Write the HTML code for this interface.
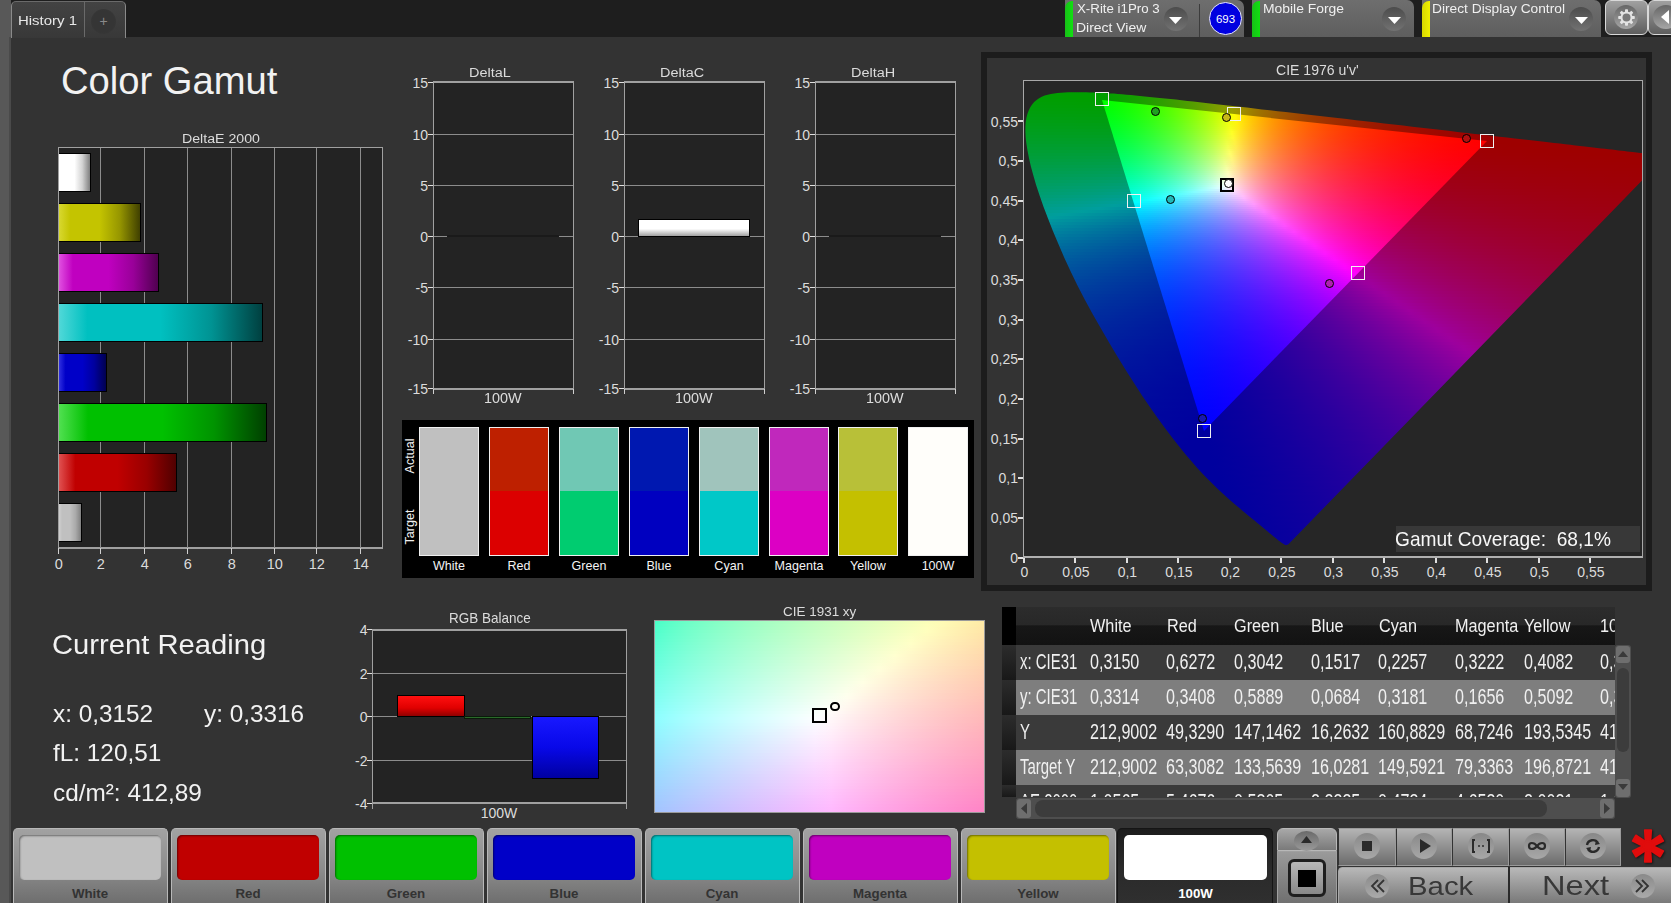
<!DOCTYPE html><html><head><meta charset="utf-8"><style>
html,body{margin:0;padding:0;}
body{width:1671px;height:903px;position:relative;overflow:hidden;background:#333333;font-family:"Liberation Sans", sans-serif;}
.t{position:absolute;white-space:nowrap;}
.b{position:absolute;box-sizing:border-box;}
</style></head><body>
<div class="b" style="left:0px;top:0px;width:1671px;height:37px;background:#1e1e1e;"></div>
<div class="b" style="left:0px;top:0px;width:11px;height:903px;background:#585858;"></div>
<div class="b" style="left:9px;top:37px;width:2px;height:866px;background:#4a4a4a;"></div>
<div class="b" style="left:11px;top:1px;width:115px;height:37px;background:linear-gradient(#434343,#383838);border-left:1px solid #8a8a8a;border-top:1px solid #6a6a6a;border-right:1px solid #8a8a8a;border-radius:5px 5px 0 0;"></div>
<div class="b" style="left:84px;top:2px;width:1px;height:35px;background:#6a6a6a;"></div>
<div class="b" style="left:91px;top:9px;width:25px;height:25px;background:radial-gradient(circle at 50% 50%,#353535 60%,#3a3a3a 100%);border-radius:50%;"></div>
<div class="t" style="left:18.0px;top:12.6px;font-size:13.6px;line-height:15.19px;color:#e8e8e8;transform:scaleX(1.1);transform-origin:left;">History 1</div>
<div class="t" style="left:103.5px;top:14.3px;font-size:14px;line-height:15.64px;color:#8a8a8a;transform:translateX(-50%);transform-origin:center;">+</div>
<div class="b" style="left:1065px;top:0px;width:179px;height:37px;background:linear-gradient(#6e6e6e,#5e5e5e);border-radius:0 0 0 0;border-top-right-radius:7px;"></div>
<div class="b" style="left:1065px;top:1px;width:8px;height:36px;background:linear-gradient(90deg,#18c018,#10e010);border-radius:7px 0 0 0;"></div>
<div class="b" style="left:1163.5px;top:6.5px;width:24px;height:24px;background:linear-gradient(#4c4c4c,#727272);border-radius:50%;"></div>
<svg class="b" style="left:1169.0px;top:16.5px;width:13px;height:7px;" viewBox="0 0 13 7"><path d="M0 0 L13 0 L6.5 7 Z" fill="#fff"/></svg>
<div class="b" style="left:1199px;top:4px;width:1px;height:33px;background:#3c3c3c;"></div>
<div class="b" style="left:1209px;top:2px;width:33px;height:33px;background:#0000e0;border:1.5px solid #e8e8ff;border-radius:50%;"></div>
<div class="t" style="left:1225.5px;top:12.9px;font-size:11.5px;line-height:12.85px;color:#ffffff;transform:translateX(-50%);transform-origin:center;">693</div>
<div class="t" style="left:1076.5px;top:2.8px;font-size:12.5px;line-height:13.96px;color:#f0f0f0;transform:scaleX(1.063);transform-origin:left;">X-Rite i1Pro 3</div>
<div class="t" style="left:1076.3px;top:21.6px;font-size:12.5px;line-height:13.96px;color:#f0f0f0;transform:scaleX(1.116);transform-origin:left;">Direct View</div>
<div class="b" style="left:1252px;top:0px;width:162px;height:37px;background:linear-gradient(#6e6e6e,#5e5e5e);border-radius:0 0 0 0;border-top-right-radius:7px;"></div>
<div class="b" style="left:1252px;top:1px;width:8px;height:36px;background:linear-gradient(90deg,#18c018,#10e010);border-radius:7px 0 0 0;"></div>
<div class="b" style="left:1382px;top:6.5px;width:24px;height:24px;background:linear-gradient(#4c4c4c,#727272);border-radius:50%;"></div>
<svg class="b" style="left:1387.5px;top:16.5px;width:13px;height:7px;" viewBox="0 0 13 7"><path d="M0 0 L13 0 L6.5 7 Z" fill="#fff"/></svg>
<div class="t" style="left:1262.5px;top:2.8px;font-size:12.5px;line-height:13.96px;color:#f0f0f0;transform:scaleX(1.11);transform-origin:left;">Mobile Forge</div>
<div class="b" style="left:1422px;top:0px;width:179px;height:37px;background:linear-gradient(#6e6e6e,#5e5e5e);border-radius:0 0 0 0;border-top-right-radius:7px;"></div>
<div class="b" style="left:1422px;top:1px;width:8px;height:36px;background:linear-gradient(90deg,#d8d800,#f0f000);border-radius:7px 0 0 0;"></div>
<div class="b" style="left:1569px;top:6.5px;width:24px;height:24px;background:linear-gradient(#4c4c4c,#727272);border-radius:50%;"></div>
<svg class="b" style="left:1574.5px;top:16.5px;width:13px;height:7px;" viewBox="0 0 13 7"><path d="M0 0 L13 0 L6.5 7 Z" fill="#fff"/></svg>
<div class="t" style="left:1432.4px;top:2.6px;font-size:12.5px;line-height:13.96px;color:#f0f0f0;transform:scaleX(1.1);transform-origin:left;">Direct Display Control</div>
<div class="b" style="left:1605px;top:0px;width:43px;height:35px;background:linear-gradient(#a0a0a0,#5e5e5e);border:1.2px solid #d8d8d8;border-radius:6px;"></div>
<div class="b" style="left:1614px;top:5px;width:24px;height:24px;background:linear-gradient(#666666,#a6a6a6);border-radius:50%;"></div>
<svg class="b" style="left:1615.5px;top:7px;width:21px;height:21px;" viewBox="-10.5 -10.5 21 21">
<g fill="#e4e4e4"><rect x="-1.5" y="-8.3" width="3" height="4" rx="0.8" transform="rotate(0)"/><rect x="-1.5" y="-8.3" width="3" height="4" rx="0.8" transform="rotate(45)"/><rect x="-1.5" y="-8.3" width="3" height="4" rx="0.8" transform="rotate(90)"/><rect x="-1.5" y="-8.3" width="3" height="4" rx="0.8" transform="rotate(135)"/><rect x="-1.5" y="-8.3" width="3" height="4" rx="0.8" transform="rotate(180)"/><rect x="-1.5" y="-8.3" width="3" height="4" rx="0.8" transform="rotate(225)"/><rect x="-1.5" y="-8.3" width="3" height="4" rx="0.8" transform="rotate(270)"/><rect x="-1.5" y="-8.3" width="3" height="4" rx="0.8" transform="rotate(315)"/>
<circle r="6"/></g><circle r="4" fill="#7a7a7a"/></svg>
<div class="b" style="left:1648px;top:0px;width:30px;height:35px;background:linear-gradient(#a0a0a0,#5e5e5e);border:1.2px solid #d8d8d8;border-radius:6px 0 0 6px;"></div>
<div class="b" style="left:1653px;top:5px;width:26px;height:24px;background:linear-gradient(#666666,#a6a6a6);border-radius:50%;"></div>
<svg class="b" style="left:1660px;top:9px;width:11px;height:16px;" viewBox="0 0 11 16"><path d="M9 1 L1 8 L9 15 Z" fill="#fff"/></svg>
<div class="t" style="left:60.9px;top:59.6px;font-size:38.2px;line-height:42.67px;color:#f2f2f2;">Color Gamut</div>
<div class="t" style="left:181.5px;top:130.5px;font-size:13.7px;line-height:15.30px;color:#dcdcdc;transform:scaleX(1.035);transform-origin:left;">DeltaE 2000</div>
<div class="b" style="left:58px;top:147px;width:325px;height:402px;background:#232323;border:1px solid #a0a0a0;border-bottom:2px solid #a0a0a0;"></div>
<div class="b" style="left:100px;top:148px;width:1px;height:400px;background:#8c8c8c;"></div>
<div class="b" style="left:144px;top:148px;width:1px;height:400px;background:#8c8c8c;"></div>
<div class="b" style="left:187px;top:148px;width:1px;height:400px;background:#8c8c8c;"></div>
<div class="b" style="left:231px;top:148px;width:1px;height:400px;background:#8c8c8c;"></div>
<div class="b" style="left:274px;top:148px;width:1px;height:400px;background:#8c8c8c;"></div>
<div class="b" style="left:316px;top:148px;width:1px;height:400px;background:#8c8c8c;"></div>
<div class="b" style="left:360px;top:148px;width:1px;height:400px;background:#8c8c8c;"></div>
<div class="b" style="left:58px;top:548px;width:1px;height:6px;background:#d0d0d0;"></div>
<div class="t" style="left:58.8px;top:555.9px;font-size:14.5px;line-height:16.20px;color:#dcdcdc;transform:translateX(-50%);transform-origin:center;">0</div>
<div class="b" style="left:100px;top:548px;width:1px;height:6px;background:#d0d0d0;"></div>
<div class="t" style="left:100.8px;top:555.9px;font-size:14.5px;line-height:16.20px;color:#dcdcdc;transform:translateX(-50%);transform-origin:center;">2</div>
<div class="b" style="left:144px;top:548px;width:1px;height:6px;background:#d0d0d0;"></div>
<div class="t" style="left:144.8px;top:555.9px;font-size:14.5px;line-height:16.20px;color:#dcdcdc;transform:translateX(-50%);transform-origin:center;">4</div>
<div class="b" style="left:187px;top:548px;width:1px;height:6px;background:#d0d0d0;"></div>
<div class="t" style="left:187.8px;top:555.9px;font-size:14.5px;line-height:16.20px;color:#dcdcdc;transform:translateX(-50%);transform-origin:center;">6</div>
<div class="b" style="left:231px;top:548px;width:1px;height:6px;background:#d0d0d0;"></div>
<div class="t" style="left:231.8px;top:555.9px;font-size:14.5px;line-height:16.20px;color:#dcdcdc;transform:translateX(-50%);transform-origin:center;">8</div>
<div class="b" style="left:274px;top:548px;width:1px;height:6px;background:#d0d0d0;"></div>
<div class="t" style="left:274.8px;top:555.9px;font-size:14.5px;line-height:16.20px;color:#dcdcdc;transform:translateX(-50%);transform-origin:center;">10</div>
<div class="b" style="left:316px;top:548px;width:1px;height:6px;background:#d0d0d0;"></div>
<div class="t" style="left:316.8px;top:555.9px;font-size:14.5px;line-height:16.20px;color:#dcdcdc;transform:translateX(-50%);transform-origin:center;">12</div>
<div class="b" style="left:360px;top:548px;width:1px;height:6px;background:#d0d0d0;"></div>
<div class="t" style="left:360.8px;top:555.9px;font-size:14.5px;line-height:16.20px;color:#dcdcdc;transform:translateX(-50%);transform-origin:center;">14</div>
<div class="b" style="left:59px;top:153px;width:32px;height:39px;background:linear-gradient(90deg,#ffffff 0%,#ffffff 14%,#ffffff 50%,#d3d3d3 75%,#808080 100%);border:1px solid #000;border-left:none;"></div>
<div class="b" style="left:59px;top:203px;width:82px;height:39px;background:linear-gradient(90deg,#d8d830 0%,#c4c400 14%,#c4c400 50%,#969600 75%,#404000 100%);border:1px solid #000;border-left:none;"></div>
<div class="b" style="left:59px;top:253px;width:100px;height:39px;background:linear-gradient(90deg,#e050e0 0%,#c000c0 14%,#c000c0 50%,#990099 75%,#500050 100%);border:1px solid #000;border-left:none;"></div>
<div class="b" style="left:59px;top:303px;width:204px;height:39px;background:linear-gradient(90deg,#50d8d8 0%,#00c0c0 14%,#00c0c0 50%,#009393 75%,#004040 100%);border:1px solid #000;border-left:none;"></div>
<div class="b" style="left:59px;top:353px;width:48px;height:39px;background:linear-gradient(90deg,#3030e0 0%,#0000c8 14%,#0000c8 50%,#00009e 75%,#000050 100%);border:1px solid #000;border-left:none;"></div>
<div class="b" style="left:59px;top:403px;width:208px;height:39px;background:linear-gradient(90deg,#50e050 0%,#00c000 14%,#00c000 50%,#009300 75%,#004000 100%);border:1px solid #000;border-left:none;"></div>
<div class="b" style="left:59px;top:453px;width:118px;height:39px;background:linear-gradient(90deg,#e05050 0%,#c00000 14%,#c00000 50%,#990000 75%,#500000 100%);border:1px solid #000;border-left:none;"></div>
<div class="b" style="left:59px;top:503px;width:23px;height:39px;background:linear-gradient(90deg,#d0d0d0 0%,#c0c0c0 14%,#c0c0c0 50%,#aaaaaa 75%,#808080 100%);border:1px solid #000;border-left:none;"></div>
<div class="t" style="left:469.2px;top:64.7px;font-size:13.7px;line-height:15.30px;color:#dcdcdc;transform:scaleX(1.055);transform-origin:left;">DeltaL</div>
<div class="b" style="left:433px;top:81px;width:141px;height:309px;background:#232323;border:1px solid #a0a0a0;border-top:2px solid #a0a0a0;border-bottom:2px solid #a0a0a0;"></div>
<div class="b" style="left:428px;top:82px;width:5px;height:1px;background:#e0e0e0;"></div>
<div class="t" style="left:428.0px;top:75.6px;font-size:14px;line-height:15.64px;color:#dcdcdc;transform:translateX(-100%);transform-origin:right;">15</div>
<div class="b" style="left:434px;top:134px;width:139px;height:1px;background:#8c8c8c;"></div>
<div class="b" style="left:428px;top:134px;width:5px;height:1px;background:#e0e0e0;"></div>
<div class="t" style="left:428.0px;top:127.6px;font-size:14px;line-height:15.64px;color:#dcdcdc;transform:translateX(-100%);transform-origin:right;">10</div>
<div class="b" style="left:434px;top:185px;width:139px;height:1px;background:#8c8c8c;"></div>
<div class="b" style="left:428px;top:185px;width:5px;height:1px;background:#e0e0e0;"></div>
<div class="t" style="left:428.0px;top:178.6px;font-size:14px;line-height:15.64px;color:#dcdcdc;transform:translateX(-100%);transform-origin:right;">5</div>
<div class="b" style="left:434px;top:236px;width:139px;height:1px;background:#8c8c8c;"></div>
<div class="b" style="left:428px;top:236px;width:5px;height:1px;background:#e0e0e0;"></div>
<div class="t" style="left:428.0px;top:229.6px;font-size:14px;line-height:15.64px;color:#dcdcdc;transform:translateX(-100%);transform-origin:right;">0</div>
<div class="b" style="left:434px;top:287px;width:139px;height:1px;background:#8c8c8c;"></div>
<div class="b" style="left:428px;top:287px;width:5px;height:1px;background:#e0e0e0;"></div>
<div class="t" style="left:428.0px;top:280.6px;font-size:14px;line-height:15.64px;color:#dcdcdc;transform:translateX(-100%);transform-origin:right;">-5</div>
<div class="b" style="left:434px;top:339px;width:139px;height:1px;background:#8c8c8c;"></div>
<div class="b" style="left:428px;top:339px;width:5px;height:1px;background:#e0e0e0;"></div>
<div class="t" style="left:428.0px;top:332.6px;font-size:14px;line-height:15.64px;color:#dcdcdc;transform:translateX(-100%);transform-origin:right;">-10</div>
<div class="b" style="left:428px;top:388px;width:5px;height:1px;background:#e0e0e0;"></div>
<div class="t" style="left:428.0px;top:381.6px;font-size:14px;line-height:15.64px;color:#dcdcdc;transform:translateX(-100%);transform-origin:right;">-15</div>
<div class="b" style="left:433px;top:389px;width:1px;height:5px;background:#d0d0d0;"></div>
<div class="b" style="left:573px;top:389px;width:1px;height:5px;background:#d0d0d0;"></div>
<div class="t" style="left:484.3px;top:391.4px;font-size:14.2px;line-height:15.86px;color:#dcdcdc;transform:scaleX(1.016);transform-origin:left;">100W</div>
<div class="b" style="left:447px;top:235px;width:112px;height:2px;background:#1a1a1a;"></div>
<div class="t" style="left:660.2px;top:64.7px;font-size:13.7px;line-height:15.30px;color:#dcdcdc;transform:scaleX(1.055);transform-origin:left;">DeltaC</div>
<div class="b" style="left:624px;top:81px;width:141px;height:309px;background:#232323;border:1px solid #a0a0a0;border-top:2px solid #a0a0a0;border-bottom:2px solid #a0a0a0;"></div>
<div class="b" style="left:619px;top:82px;width:5px;height:1px;background:#e0e0e0;"></div>
<div class="t" style="left:619.0px;top:75.6px;font-size:14px;line-height:15.64px;color:#dcdcdc;transform:translateX(-100%);transform-origin:right;">15</div>
<div class="b" style="left:625px;top:134px;width:139px;height:1px;background:#8c8c8c;"></div>
<div class="b" style="left:619px;top:134px;width:5px;height:1px;background:#e0e0e0;"></div>
<div class="t" style="left:619.0px;top:127.6px;font-size:14px;line-height:15.64px;color:#dcdcdc;transform:translateX(-100%);transform-origin:right;">10</div>
<div class="b" style="left:625px;top:185px;width:139px;height:1px;background:#8c8c8c;"></div>
<div class="b" style="left:619px;top:185px;width:5px;height:1px;background:#e0e0e0;"></div>
<div class="t" style="left:619.0px;top:178.6px;font-size:14px;line-height:15.64px;color:#dcdcdc;transform:translateX(-100%);transform-origin:right;">5</div>
<div class="b" style="left:625px;top:236px;width:139px;height:1px;background:#8c8c8c;"></div>
<div class="b" style="left:619px;top:236px;width:5px;height:1px;background:#e0e0e0;"></div>
<div class="t" style="left:619.0px;top:229.6px;font-size:14px;line-height:15.64px;color:#dcdcdc;transform:translateX(-100%);transform-origin:right;">0</div>
<div class="b" style="left:625px;top:287px;width:139px;height:1px;background:#8c8c8c;"></div>
<div class="b" style="left:619px;top:287px;width:5px;height:1px;background:#e0e0e0;"></div>
<div class="t" style="left:619.0px;top:280.6px;font-size:14px;line-height:15.64px;color:#dcdcdc;transform:translateX(-100%);transform-origin:right;">-5</div>
<div class="b" style="left:625px;top:339px;width:139px;height:1px;background:#8c8c8c;"></div>
<div class="b" style="left:619px;top:339px;width:5px;height:1px;background:#e0e0e0;"></div>
<div class="t" style="left:619.0px;top:332.6px;font-size:14px;line-height:15.64px;color:#dcdcdc;transform:translateX(-100%);transform-origin:right;">-10</div>
<div class="b" style="left:619px;top:388px;width:5px;height:1px;background:#e0e0e0;"></div>
<div class="t" style="left:619.0px;top:381.6px;font-size:14px;line-height:15.64px;color:#dcdcdc;transform:translateX(-100%);transform-origin:right;">-15</div>
<div class="b" style="left:624px;top:389px;width:1px;height:5px;background:#d0d0d0;"></div>
<div class="b" style="left:764px;top:389px;width:1px;height:5px;background:#d0d0d0;"></div>
<div class="t" style="left:675.3px;top:391.4px;font-size:14.2px;line-height:15.86px;color:#dcdcdc;transform:scaleX(1.016);transform-origin:left;">100W</div>
<div class="b" style="left:638px;top:219px;width:112px;height:18px;background:linear-gradient(#ffffff 0%,#ffffff 55%,#a0a0a0 100%);border:1.5px solid #000;"></div>
<div class="t" style="left:851.2px;top:64.7px;font-size:13.7px;line-height:15.30px;color:#dcdcdc;transform:scaleX(1.055);transform-origin:left;">DeltaH</div>
<div class="b" style="left:815px;top:81px;width:141px;height:309px;background:#232323;border:1px solid #a0a0a0;border-top:2px solid #a0a0a0;border-bottom:2px solid #a0a0a0;"></div>
<div class="b" style="left:810px;top:82px;width:5px;height:1px;background:#e0e0e0;"></div>
<div class="t" style="left:810.0px;top:75.6px;font-size:14px;line-height:15.64px;color:#dcdcdc;transform:translateX(-100%);transform-origin:right;">15</div>
<div class="b" style="left:816px;top:134px;width:139px;height:1px;background:#8c8c8c;"></div>
<div class="b" style="left:810px;top:134px;width:5px;height:1px;background:#e0e0e0;"></div>
<div class="t" style="left:810.0px;top:127.6px;font-size:14px;line-height:15.64px;color:#dcdcdc;transform:translateX(-100%);transform-origin:right;">10</div>
<div class="b" style="left:816px;top:185px;width:139px;height:1px;background:#8c8c8c;"></div>
<div class="b" style="left:810px;top:185px;width:5px;height:1px;background:#e0e0e0;"></div>
<div class="t" style="left:810.0px;top:178.6px;font-size:14px;line-height:15.64px;color:#dcdcdc;transform:translateX(-100%);transform-origin:right;">5</div>
<div class="b" style="left:816px;top:236px;width:139px;height:1px;background:#8c8c8c;"></div>
<div class="b" style="left:810px;top:236px;width:5px;height:1px;background:#e0e0e0;"></div>
<div class="t" style="left:810.0px;top:229.6px;font-size:14px;line-height:15.64px;color:#dcdcdc;transform:translateX(-100%);transform-origin:right;">0</div>
<div class="b" style="left:816px;top:287px;width:139px;height:1px;background:#8c8c8c;"></div>
<div class="b" style="left:810px;top:287px;width:5px;height:1px;background:#e0e0e0;"></div>
<div class="t" style="left:810.0px;top:280.6px;font-size:14px;line-height:15.64px;color:#dcdcdc;transform:translateX(-100%);transform-origin:right;">-5</div>
<div class="b" style="left:816px;top:339px;width:139px;height:1px;background:#8c8c8c;"></div>
<div class="b" style="left:810px;top:339px;width:5px;height:1px;background:#e0e0e0;"></div>
<div class="t" style="left:810.0px;top:332.6px;font-size:14px;line-height:15.64px;color:#dcdcdc;transform:translateX(-100%);transform-origin:right;">-10</div>
<div class="b" style="left:810px;top:388px;width:5px;height:1px;background:#e0e0e0;"></div>
<div class="t" style="left:810.0px;top:381.6px;font-size:14px;line-height:15.64px;color:#dcdcdc;transform:translateX(-100%);transform-origin:right;">-15</div>
<div class="b" style="left:815px;top:389px;width:1px;height:5px;background:#d0d0d0;"></div>
<div class="b" style="left:955px;top:389px;width:1px;height:5px;background:#d0d0d0;"></div>
<div class="t" style="left:866.3px;top:391.4px;font-size:14.2px;line-height:15.86px;color:#dcdcdc;transform:scaleX(1.016);transform-origin:left;">100W</div>
<div class="b" style="left:829px;top:235px;width:112px;height:2px;background:#1a1a1a;"></div>
<div class="b" style="left:402px;top:420px;width:572px;height:158px;background:#000;"></div>
<div class="b" style="left:419px;top:427px;width:60px;height:129px;background:linear-gradient(#c0c0c0 0,#c0c0c0 50%,#c0c0c0 50%,#c0c0c0 100%);border:1px solid #f0f0f0;"></div>
<div class="t" style="left:449.0px;top:559.5px;font-size:11.9px;line-height:13.29px;color:#f4f4f4;transform:translateX(-50%) scaleX(1.054);transform-origin:center;">White</div>
<div class="b" style="left:489px;top:427px;width:60px;height:129px;background:linear-gradient(#be2000 0,#be2000 50%,#dc0000 50%,#dc0000 100%);border:1px solid #f0f0f0;"></div>
<div class="t" style="left:519.0px;top:559.5px;font-size:11.9px;line-height:13.29px;color:#f4f4f4;transform:translateX(-50%) scaleX(1.054);transform-origin:center;">Red</div>
<div class="b" style="left:559px;top:427px;width:60px;height:129px;background:linear-gradient(#70c8b4 0,#70c8b4 50%,#00cc70 50%,#00cc70 100%);border:1px solid #f0f0f0;"></div>
<div class="t" style="left:589.0px;top:559.5px;font-size:11.9px;line-height:13.29px;color:#f4f4f4;transform:translateX(-50%) scaleX(1.054);transform-origin:center;">Green</div>
<div class="b" style="left:629px;top:427px;width:60px;height:129px;background:linear-gradient(#0018b0 0,#0018b0 50%,#0000c0 50%,#0000c0 100%);border:1px solid #f0f0f0;"></div>
<div class="t" style="left:659.0px;top:559.5px;font-size:11.9px;line-height:13.29px;color:#f4f4f4;transform:translateX(-50%) scaleX(1.054);transform-origin:center;">Blue</div>
<div class="b" style="left:699px;top:427px;width:60px;height:129px;background:linear-gradient(#a0c4bc 0,#a0c4bc 50%,#00c8c8 50%,#00c8c8 100%);border:1px solid #f0f0f0;"></div>
<div class="t" style="left:729.0px;top:559.5px;font-size:11.9px;line-height:13.29px;color:#f4f4f4;transform:translateX(-50%) scaleX(1.054);transform-origin:center;">Cyan</div>
<div class="b" style="left:769px;top:427px;width:60px;height:129px;background:linear-gradient(#c028bc 0,#c028bc 50%,#dc00c4 50%,#dc00c4 100%);border:1px solid #f0f0f0;"></div>
<div class="t" style="left:799.0px;top:559.5px;font-size:11.9px;line-height:13.29px;color:#f4f4f4;transform:translateX(-50%) scaleX(1.054);transform-origin:center;">Magenta</div>
<div class="b" style="left:838px;top:427px;width:60px;height:129px;background:linear-gradient(#b8c038 0,#b8c038 50%,#c4c000 50%,#c4c000 100%);border:1px solid #f0f0f0;"></div>
<div class="t" style="left:868.0px;top:559.5px;font-size:11.9px;line-height:13.29px;color:#f4f4f4;transform:translateX(-50%) scaleX(1.054);transform-origin:center;">Yellow</div>
<div class="b" style="left:908px;top:427px;width:60px;height:129px;background:linear-gradient(#fffefa 0,#fffefa 50%,#fffefa 50%,#fffefa 100%);border:1px solid #f0f0f0;"></div>
<div class="t" style="left:938.0px;top:559.5px;font-size:11.9px;line-height:13.29px;color:#f4f4f4;transform:translateX(-50%) scaleX(1.054);transform-origin:center;">100W</div>
<div class="t" style="left:410px;top:455.5px;font-size:12.6px;line-height:12px;color:#f0f0f0;transform:translate(-50%,-50%) rotate(-90deg);">Actual</div>
<div class="t" style="left:410px;top:527.2px;font-size:12.6px;line-height:12px;color:#f0f0f0;transform:translate(-50%,-50%) rotate(-90deg);">Target</div>
<div class="b" style="left:981px;top:52px;width:671px;height:539px;background:#333333;border:6px solid #1c1c1c;"></div>
<div class="t" style="left:1275.5px;top:63.0px;font-size:14.2px;line-height:15.86px;color:#dcdcdc;transform:scaleX(0.99);transform-origin:left;">CIE 1976 u'v'</div>
<div class="b" style="left:1023px;top:80px;width:620px;height:478px;background:#262626;border:1px solid #a8a8a8;border-bottom:2px solid #b0b0b0;"></div>
<div class="b" style="left:1018px;top:556.5px;width:5px;height:2px;background:#e0e0e0;"></div>
<div class="t" style="left:1018.0px;top:550.6px;font-size:14px;line-height:15.64px;color:#dcdcdc;transform:translateX(-100%);transform-origin:right;">0</div>
<div class="b" style="left:1022.9px;top:558px;width:2px;height:5px;background:#e0e0e0;"></div>
<div class="t" style="left:1024.4px;top:565.3px;font-size:14px;line-height:15.64px;color:#dcdcdc;transform:translateX(-50%);transform-origin:center;">0</div>
<div class="b" style="left:1018px;top:516.85px;width:5px;height:2px;background:#e0e0e0;"></div>
<div class="t" style="left:1018.0px;top:511.0px;font-size:14px;line-height:15.64px;color:#dcdcdc;transform:translateX(-100%);transform-origin:right;">0,05</div>
<div class="b" style="left:1074.4px;top:558px;width:2px;height:5px;background:#e0e0e0;"></div>
<div class="t" style="left:1075.9px;top:565.3px;font-size:14px;line-height:15.64px;color:#dcdcdc;transform:translateX(-50%);transform-origin:center;">0,05</div>
<div class="b" style="left:1018px;top:477.2px;width:5px;height:2px;background:#e0e0e0;"></div>
<div class="t" style="left:1018.0px;top:471.3px;font-size:14px;line-height:15.64px;color:#dcdcdc;transform:translateX(-100%);transform-origin:right;">0,1</div>
<div class="b" style="left:1125.9px;top:558px;width:2px;height:5px;background:#e0e0e0;"></div>
<div class="t" style="left:1127.4px;top:565.3px;font-size:14px;line-height:15.64px;color:#dcdcdc;transform:translateX(-50%);transform-origin:center;">0,1</div>
<div class="b" style="left:1018px;top:437.54999999999995px;width:5px;height:2px;background:#e0e0e0;"></div>
<div class="t" style="left:1018.0px;top:431.7px;font-size:14px;line-height:15.64px;color:#dcdcdc;transform:translateX(-100%);transform-origin:right;">0,15</div>
<div class="b" style="left:1177.4px;top:558px;width:2px;height:5px;background:#e0e0e0;"></div>
<div class="t" style="left:1178.9px;top:565.3px;font-size:14px;line-height:15.64px;color:#dcdcdc;transform:translateX(-50%);transform-origin:center;">0,15</div>
<div class="b" style="left:1018px;top:397.9px;width:5px;height:2px;background:#e0e0e0;"></div>
<div class="t" style="left:1018.0px;top:392.0px;font-size:14px;line-height:15.64px;color:#dcdcdc;transform:translateX(-100%);transform-origin:right;">0,2</div>
<div class="b" style="left:1228.9px;top:558px;width:2px;height:5px;background:#e0e0e0;"></div>
<div class="t" style="left:1230.4px;top:565.3px;font-size:14px;line-height:15.64px;color:#dcdcdc;transform:translateX(-50%);transform-origin:center;">0,2</div>
<div class="b" style="left:1018px;top:358.25px;width:5px;height:2px;background:#e0e0e0;"></div>
<div class="t" style="left:1018.0px;top:352.4px;font-size:14px;line-height:15.64px;color:#dcdcdc;transform:translateX(-100%);transform-origin:right;">0,25</div>
<div class="b" style="left:1280.4px;top:558px;width:2px;height:5px;background:#e0e0e0;"></div>
<div class="t" style="left:1281.9px;top:565.3px;font-size:14px;line-height:15.64px;color:#dcdcdc;transform:translateX(-50%);transform-origin:center;">0,25</div>
<div class="b" style="left:1018px;top:318.59999999999997px;width:5px;height:2px;background:#e0e0e0;"></div>
<div class="t" style="left:1018.0px;top:312.7px;font-size:14px;line-height:15.64px;color:#dcdcdc;transform:translateX(-100%);transform-origin:right;">0,3</div>
<div class="b" style="left:1331.9px;top:558px;width:2px;height:5px;background:#e0e0e0;"></div>
<div class="t" style="left:1333.4px;top:565.3px;font-size:14px;line-height:15.64px;color:#dcdcdc;transform:translateX(-50%);transform-origin:center;">0,3</div>
<div class="b" style="left:1018px;top:278.95px;width:5px;height:2px;background:#e0e0e0;"></div>
<div class="t" style="left:1018.0px;top:273.1px;font-size:14px;line-height:15.64px;color:#dcdcdc;transform:translateX(-100%);transform-origin:right;">0,35</div>
<div class="b" style="left:1383.4px;top:558px;width:2px;height:5px;background:#e0e0e0;"></div>
<div class="t" style="left:1384.9px;top:565.3px;font-size:14px;line-height:15.64px;color:#dcdcdc;transform:translateX(-50%);transform-origin:center;">0,35</div>
<div class="b" style="left:1018px;top:239.29999999999995px;width:5px;height:2px;background:#e0e0e0;"></div>
<div class="t" style="left:1018.0px;top:233.4px;font-size:14px;line-height:15.64px;color:#dcdcdc;transform:translateX(-100%);transform-origin:right;">0,4</div>
<div class="b" style="left:1434.9px;top:558px;width:2px;height:5px;background:#e0e0e0;"></div>
<div class="t" style="left:1436.4px;top:565.3px;font-size:14px;line-height:15.64px;color:#dcdcdc;transform:translateX(-50%);transform-origin:center;">0,4</div>
<div class="b" style="left:1018px;top:199.64999999999998px;width:5px;height:2px;background:#e0e0e0;"></div>
<div class="t" style="left:1018.0px;top:193.8px;font-size:14px;line-height:15.64px;color:#dcdcdc;transform:translateX(-100%);transform-origin:right;">0,45</div>
<div class="b" style="left:1486.4px;top:558px;width:2px;height:5px;background:#e0e0e0;"></div>
<div class="t" style="left:1487.9px;top:565.3px;font-size:14px;line-height:15.64px;color:#dcdcdc;transform:translateX(-50%);transform-origin:center;">0,45</div>
<div class="b" style="left:1018px;top:160.0px;width:5px;height:2px;background:#e0e0e0;"></div>
<div class="t" style="left:1018.0px;top:154.1px;font-size:14px;line-height:15.64px;color:#dcdcdc;transform:translateX(-100%);transform-origin:right;">0,5</div>
<div class="b" style="left:1537.9px;top:558px;width:2px;height:5px;background:#e0e0e0;"></div>
<div class="t" style="left:1539.4px;top:565.3px;font-size:14px;line-height:15.64px;color:#dcdcdc;transform:translateX(-50%);transform-origin:center;">0,5</div>
<div class="b" style="left:1018px;top:120.34999999999997px;width:5px;height:2px;background:#e0e0e0;"></div>
<div class="t" style="left:1018.0px;top:114.5px;font-size:14px;line-height:15.64px;color:#dcdcdc;transform:translateX(-100%);transform-origin:right;">0,55</div>
<div class="b" style="left:1589.4px;top:558px;width:2px;height:5px;background:#e0e0e0;"></div>
<div class="t" style="left:1590.9px;top:565.3px;font-size:14px;line-height:15.64px;color:#dcdcdc;transform:translateX(-50%);transform-origin:center;">0,55</div>
<div class="b" style="left:1024px;top:81px;width:618px;height:476px;overflow:hidden;">
<div class="b" style="left:0;top:0;width:618px;height:476px;clip-path:polygon(264.4px 463.3px,264.1px 463.4px,263.7px 463.6px,263.2px 463.8px,262.8px 463.9px,262.4px 463.9px,262.0px 464.0px,261.6px 463.9px,261.2px 463.9px,260.9px 463.8px,260.5px 463.6px,260.1px 463.4px,259.7px 463.1px,259.1px 462.8px,258.5px 462.3px,257.8px 461.9px,257.0px 461.3px,256.2px 460.7px,255.4px 460.1px,254.4px 459.4px,253.4px 458.6px,252.2px 457.6px,251.0px 456.6px,249.6px 455.5px,248.2px 454.3px,246.7px 453.1px,245.1px 451.7px,243.4px 450.3px,241.6px 448.7px,239.7px 447.2px,237.7px 445.5px,235.6px 443.8px,233.3px 441.9px,230.8px 439.8px,228.2px 437.7px,225.4px 435.4px,222.4px 432.9px,219.4px 430.4px,216.2px 427.8px,212.9px 425.0px,209.3px 422.0px,205.6px 418.7px,201.7px 415.2px,197.6px 411.5px,193.3px 407.4px,188.8px 403.1px,184.2px 398.6px,179.3px 393.6px,173.9px 387.7px,168.1px 381.0px,161.8px 373.7px,155.2px 365.6px,148.3px 356.8px,141.1px 347.2px,133.6px 337.0px,125.9px 326.0px,118.0px 314.4px,110.0px 302.1px,101.7px 289.0px,93.4px 275.5px,85.2px 261.7px,77.1px 247.7px,68.9px 233.4px,61.0px 218.9px,53.6px 204.7px,46.8px 190.7px,40.3px 176.7px,34.4px 163.1px,28.9px 150.0px,24.0px 137.6px,19.5px 125.7px,15.6px 114.4px,12.1px 103.9px,9.3px 94.3px,6.9px 85.4px,5.0px 77.2px,3.5px 69.6px,2.4px 62.8px,1.7px 56.6px,1.4px 51.0px,1.4px 45.8px,1.7px 41.0px,2.4px 36.7px,3.4px 32.9px,4.7px 29.4px,6.3px 26.2px,8.1px 23.5px,10.2px 21.1px,12.6px 19.0px,15.1px 17.2px,17.8px 15.8px,20.7px 14.6px,23.7px 13.7px,26.9px 12.9px,30.1px 12.4px,33.5px 12.0px,37.0px 11.7px,40.5px 11.4px,44.1px 11.3px,47.8px 11.2px,51.5px 11.2px,55.1px 11.2px,58.8px 11.2px,62.4px 11.3px,66.2px 11.4px,69.9px 11.5px,73.7px 11.7px,77.6px 11.9px,81.5px 12.1px,85.5px 12.4px,89.6px 12.6px,93.8px 13.0px,98.0px 13.3px,102.4px 13.7px,106.8px 14.1px,111.3px 14.5px,116.0px 14.9px,120.7px 15.4px,125.6px 15.9px,130.6px 16.4px,135.7px 16.9px,141.0px 17.5px,146.4px 18.0px,151.9px 18.6px,157.6px 19.3px,163.4px 19.9px,169.4px 20.6px,175.5px 21.3px,181.8px 22.0px,188.2px 22.7px,194.9px 23.4px,201.6px 24.2px,208.6px 25.0px,215.7px 25.8px,223.0px 26.6px,230.4px 27.5px,238.0px 28.4px,245.8px 29.3px,253.7px 30.2px,261.8px 31.1px,270.1px 32.1px,278.5px 33.0px,287.1px 34.0px,295.9px 35.0px,304.7px 36.1px,313.7px 37.1px,322.9px 38.1px,332.1px 39.2px,341.4px 40.3px,350.7px 41.3px,360.2px 42.4px,369.7px 43.5px,379.0px 44.6px,388.2px 45.7px,397.4px 46.7px,406.5px 47.8px,415.5px 48.8px,424.5px 49.8px,433.5px 50.9px,442.4px 51.9px,451.0px 52.9px,459.3px 53.8px,467.5px 54.8px,475.4px 55.7px,483.1px 56.6px,490.6px 57.4px,497.9px 58.3px,504.8px 59.1px,511.6px 59.8px,518.0px 60.6px,524.2px 61.3px,530.1px 62.0px,535.8px 62.6px,541.2px 63.3px,546.3px 63.8px,551.3px 64.4px,556.0px 65.0px,560.6px 65.5px,564.9px 66.0px,569.1px 66.5px,573.1px 66.9px,577.0px 67.4px,580.8px 67.8px,584.4px 68.2px,587.9px 68.6px,591.3px 69.0px,594.5px 69.4px,597.5px 69.7px,600.4px 70.1px,603.2px 70.4px,605.8px 70.7px,608.2px 71.0px,610.6px 71.2px,612.6px 71.5px,614.4px 71.7px,616.3px 71.9px,618.4px 72.1px,621.0px 72.4px,623.9px 72.8px,626.7px 73.1px,629.1px 73.4px,630.9px 73.6px,632.3px 73.7px,633.4px 73.9px,634.5px 74.0px,635.6px 74.1px,636.6px 74.2px,637.5px 74.3px,638.4px 74.4px,639.4px 74.6px,640.4px 74.7px,641.4px 74.8px,642.0px 74.9px);">
<div class="b" style="left:0;top:9px;width:618px;height:3px;background:linear-gradient(90deg,#009e00 25px,#009e00 33px,#009e00 41px,#009e00 49px,#009e00 57px,#009e00 65px,#009e00 73px,#029e00 81px,#079e00 89px);"></div>
<div class="b" style="left:0;top:12px;width:618px;height:3px;background:linear-gradient(90deg,#009e01 12px,#009e00 20px,#009e00 28px,#009e00 36px,#009e00 44px,#009e00 52px,#009e00 60px,#009e00 68px,#009e00 76px,#049e00 84px,#089e00 92px,#0e9e00 100px,#149e00 108px,#1a9e00 116px,#219e00 124px);"></div>
<div class="b" style="left:0;top:15px;width:618px;height:3px;background:linear-gradient(90deg,#009e02 7px,#009e02 15px,#009e01 23px,#009e01 31px,#009e01 39px,#009e00 47px,#009e00 55px,#009e00 63px,#009e00 71px,#019e00 79px,#059e00 87px,#0a9e00 95px,#0f9e00 103px,#159e00 111px,#1c9e00 119px,#249e00 127px,#2c9e00 135px,#349e00 143px,#3e9e00 151px);"></div>
<div class="b" style="left:0;top:18px;width:618px;height:3px;background:linear-gradient(90deg,#009e04 3px,#009e04 11px,#009e03 19px,#009e03 27px,#009e03 35px,#009e02 43px,#009e02 51px,#009e01 59px,#009e01 67px,#009e00 75px,#029e00 83px,#079e00 91px,#0c9e00 99px,#129e00 107px,#189e00 115px,#1f9e00 123px,#279e00 131px,#2f9e00 139px,#399e00 147px,#429e00 155px,#4d9e00 163px,#589e00 171px,#649e00 179px);"></div>
<div class="b" style="left:0;top:21px;width:618px;height:3px;background:linear-gradient(90deg,#009e06 0px,#009e06 8px,#009e06 16px,#009e05 24px,#009e05 32px,#009e04 40px,#009e04 48px,#009e03 56px,#009e03 64px,#009e02 72px,#009e02 80px,#049e01 88px,#099e01 96px,#0f9e00 104px,#159e00 112px,#1c9e00 120px,#249e00 128px,#2c9e00 136px,#359e00 144px,#3e9e00 152px,#489e00 160px,#539e00 168px,#5f9e00 176px,#6c9e00 184px,#799e00 192px,#889e00 200px,#989e00 208px);"></div>
<div class="b" style="left:0;top:24px;width:618px;height:3px;background:linear-gradient(90deg,#009e09 0px,#009e08 8px,#009e08 16px,#009e07 24px,#009e07 32px,#009e06 40px,#009e06 48px,#009e05 56px,#009e05 64px,#009e04 72px,#009e04 80px,#049e03 88px,#099e03 96px,#0e9e02 104px,#159e02 112px,#1c9e01 120px,#239e01 128px,#2b9e00 136px,#349e00 144px,#3e9e00 152px,#489e00 160px,#539e00 168px,#5f9e00 176px,#6c9e00 184px,#7a9e00 192px,#889e00 200px,#989e00 208px,#9e9400 216px,#9e8500 224px,#9e7900 232px);"></div>
<div class="b" style="left:0;top:27px;width:618px;height:3px;background:linear-gradient(90deg,#009e0b 0px,#009e0a 8px,#009e0a 16px,#009e09 24px,#009e09 32px,#009e09 40px,#009e08 48px,#009e08 56px,#009e07 64px,#009e07 72px,#009e06 80px,#039e06 88px,#089e05 96px,#0e9e04 104px,#149e04 112px,#1b9e03 120px,#239e03 128px,#2b9e02 136px,#349e01 144px,#3e9e01 152px,#489e00 160px,#539e00 168px,#5f9e00 176px,#6c9e00 184px,#7a9e00 192px,#899e00 200px,#999e00 208px,#9e9300 216px,#9e8500 224px,#9e7800 232px,#9e6c00 240px,#9e6200 248px,#9e5900 256px);"></div>
<div class="b" style="left:0;top:30px;width:618px;height:3px;background:linear-gradient(90deg,#009e0d 0px,#009e0d 8px,#009e0c 16px,#009e0c 24px,#009e0b 32px,#009e0b 40px,#009e0b 48px,#009e0a 56px,#009e0a 64px,#009e09 72px,#009e09 80px,#039e08 88px,#089e08 96px,#0d9e07 104px,#149e06 112px,#1b9e06 120px,#229e05 128px,#2b9e05 136px,#349e04 144px,#3d9e03 152px,#489e03 160px,#539e02 168px,#5f9e01 176px,#6c9e01 184px,#7a9e00 192px,#899e00 200px,#999e00 208px,#9e9200 216px,#9e8400 224px,#9e7700 232px,#9e6c00 240px,#9e6200 248px,#9e5900 256px,#9e5100 264px,#9e4900 272px,#9e4300 280px);"></div>
<div class="b" style="left:0;top:33px;width:618px;height:3px;background:linear-gradient(90deg,#009e0f 0px,#009e0f 8px,#009e0f 16px,#009e0e 24px,#009e0e 32px,#009e0e 40px,#009e0d 48px,#009e0d 56px,#009e0c 64px,#009e0c 72px,#009e0b 80px,#029e0b 88px,#079e0a 96px,#0d9e0a 104px,#139e09 112px,#1a9e09 120px,#229e08 128px,#2a9e07 136px,#339e07 144px,#3d9e06 152px,#479e05 160px,#539e05 168px,#5f9e04 176px,#6c9e03 184px,#7a9e03 192px,#899e02 200px,#9a9e01 208px,#9e9200 216px,#9e8300 224px,#9e7600 232px,#9e6b00 240px,#9e6100 248px,#9e5800 256px,#9e5000 264px,#9e4900 272px,#9e4200 280px,#9e3c00 288px,#9e3700 296px,#9e3200 304px);"></div>
<div class="b" style="left:0;top:36px;width:618px;height:3px;background:linear-gradient(90deg,#009e12 0px,#009e12 8px,#009e11 16px,#009e11 24px,#009e11 32px,#009e10 40px,#009e10 48px,#009e0f 56px,#009e0f 64px,#009e0f 72px,#009e0e 80px,#029e0e 88px,#079e0d 96px,#0c9e0d 104px,#139e0c 112px,#1a9e0c 120px,#219e0b 128px,#2a9e0a 136px,#339e0a 144px,#3d9e09 152px,#479e09 160px,#539e08 168px,#5f9e07 176px,#6c9e07 184px,#7a9e06 192px,#8a9e05 200px,#9a9e04 208px,#9e9103 216px,#9e8202 224px,#9e7601 232px,#9e6a01 240px,#9e6000 248px,#9e5700 256px,#9e4f00 264px,#9e4800 272px,#9e4100 280px,#9e3b00 288px,#9e3600 296px,#9e3100 304px,#9e2c00 312px,#9e2800 320px,#9e2400 328px,#9e2100 336px);"></div>
<div class="b" style="left:0;top:39px;width:618px;height:3px;background:linear-gradient(90deg,#009e15 0px,#009e14 8px,#009e14 16px,#009e14 24px,#009e13 32px,#009e13 40px,#009e13 48px,#009e12 56px,#009e12 64px,#009e11 72px,#009e11 80px,#029e11 88px,#069e10 96px,#0c9e10 104px,#129e0f 112px,#199e0f 120px,#219e0e 128px,#299e0e 136px,#329e0d 144px,#3c9e0d 152px,#479e0c 160px,#529e0b 168px,#5f9e0b 176px,#6c9e0a 184px,#7b9e09 192px,#8a9e09 200px,#9b9e08 208px,#9e9006 216px,#9e8205 224px,#9e7504 232px,#9e6903 240px,#9e5f02 248px,#9e5601 256px,#9e4e01 264px,#9e4700 272px,#9e4000 280px,#9e3b00 288px,#9e3500 296px,#9e3000 304px,#9e2c00 312px,#9e2800 320px,#9e2400 328px,#9e2000 336px,#9e1d00 344px,#9e1a00 352px,#9e1700 360px);"></div>
<div class="b" style="left:0;top:42px;width:618px;height:3px;background:linear-gradient(90deg,#009e17 0px,#009e17 8px,#009e17 16px,#009e16 24px,#009e16 32px,#009e16 40px,#009e16 48px,#009e15 56px,#009e15 64px,#009e15 72px,#009e14 80px,#019e14 88px,#069e13 96px,#0b9e13 104px,#119e13 112px,#199e12 120px,#209e12 128px,#299e11 136px,#329e11 144px,#3c9e10 152px,#479e10 160px,#529e0f 168px,#5f9e0f 176px,#6c9e0e 184px,#7b9e0d 192px,#8b9e0d 200px,#9c9e0c 208px,#9e900a 216px,#9e8108 224px,#9e7407 232px,#9e6906 240px,#9e5f05 248px,#9e5604 256px,#9e4e03 264px,#9e4602 272px,#9e4001 280px,#9e3a01 288px,#9e3400 296px,#9e3000 304px,#9e2b00 312px,#9e2700 320px,#9e2300 328px,#9e2000 336px,#9e1c00 344px,#9e1900 352px,#9e1700 360px,#9e1400 368px,#9e1200 376px,#9e1000 384px,#9e0e00 392px);"></div>
<div class="b" style="left:0;top:45px;width:618px;height:3px;background:linear-gradient(90deg,#009e1a 0px,#009e1a 8px,#009e1a 16px,#009e19 24px,#009e19 32px,#009e19 40px,#009e19 48px,#009e18 56px,#009e18 64px,#009e18 72px,#009e17 80px,#019e17 88px,#059e17 96px,#0b9e16 104px,#119e16 112px,#189e16 120px,#209e15 128px,#289e15 136px,#329e14 144px,#3c9e14 152px,#469e14 160px,#529e13 168px,#5f9e13 176px,#6c9e12 184px,#7b9e11 192px,#8b9e11 200px,#9c9e10 208px,#9e8f0e 216px,#9e800c 224px,#9e730a 232px,#9e6809 240px,#9e5e07 248px,#9e5506 256px,#9e4d05 264px,#9e4504 272px,#9e3f03 280px,#9e3903 288px,#9e3402 296px,#9e2f02 304px,#9e2a01 312px,#9e2601 320px,#9e2200 328px,#9e1f00 336px,#9e1c00 344px,#9e1900 352px,#9e1600 360px,#9e1400 368px,#9e1100 376px,#9e0f00 384px,#9e0d00 392px,#9e0b00 400px,#9e0a00 408px,#9e0800 416px);"></div>
<div class="b" style="left:0;top:48px;width:618px;height:3px;background:linear-gradient(90deg,#009e1d 0px,#009e1d 8px,#009e1d 16px,#009e1c 24px,#009e1c 32px,#009e1c 40px,#009e1c 48px,#009e1c 56px,#009e1b 64px,#009e1b 72px,#009e1b 80px,#009e1b 88px,#059e1a 96px,#0a9e1a 104px,#109e1a 112px,#179e19 120px,#1f9e19 128px,#289e19 136px,#319e18 144px,#3b9e18 152px,#469e18 160px,#529e17 168px,#5f9e17 176px,#6c9e16 184px,#7b9e16 192px,#8b9e15 200px,#9d9e15 208px,#9e8e12 216px,#9e7f10 224px,#9e720e 232px,#9e670c 240px,#9e5d0b 248px,#9e5409 256px,#9e4c08 264px,#9e4507 272px,#9e3e06 280px,#9e3805 288px,#9e3304 296px,#9e2e03 304px,#9e2a03 312px,#9e2602 320px,#9e2202 328px,#9e1e01 336px,#9e1b01 344px,#9e1800 352px,#9e1600 360px,#9e1300 368px,#9e1100 376px,#9e0f00 384px,#9e0d00 392px,#9e0b00 400px,#9e0900 408px,#9e0800 416px,#9e0600 424px,#9e0500 432px,#9e0400 440px,#9e0200 448px);"></div>
<div class="b" style="left:0;top:51px;width:618px;height:3px;background:linear-gradient(90deg,#009e20 0px,#009e20 8px,#009e20 16px,#009e1f 24px,#009e1f 32px,#009e1f 40px,#009e1f 48px,#009e1f 56px,#009e1f 64px,#009e1e 72px,#009e1e 80px,#009e1e 88px,#049e1e 96px,#0a9e1e 104px,#109e1d 112px,#179e1d 120px,#1f9e1d 128px,#279e1d 136px,#319e1d 144px,#3b9e1c 152px,#469e1c 160px,#529e1c 168px,#5f9e1b 176px,#6d9e1b 184px,#7c9e1b 192px,#8c9e1a 200px,#9e9e1a 208px,#9e8d17 216px,#9e7f14 224px,#9e7212 232px,#9e6610 240px,#9e5c0e 248px,#9e530c 256px,#9e4b0b 264px,#9e4409 272px,#9e3d08 280px,#9e3807 288px,#9e3206 296px,#9e2d05 304px,#9e2905 312px,#9e2504 320px,#9e2103 328px,#9e1e03 336px,#9e1b02 344px,#9e1802 352px,#9e1501 360px,#9e1301 368px,#9e1000 376px,#9e0e00 384px,#9e0c00 392px,#9e0a00 400px,#9e0900 408px,#9e0700 416px,#9e0600 424px,#9e0400 432px,#9e0300 440px,#9e0200 448px,#9e0100 456px,#9e0000 464px,#9e0000 472px);"></div>
<div class="b" style="left:0;top:54px;width:618px;height:3px;background:linear-gradient(90deg,#009e23 0px,#009e23 8px,#009e23 16px,#009e23 24px,#009e23 32px,#009e22 40px,#009e22 48px,#009e22 56px,#009e22 64px,#009e22 72px,#009e22 80px,#009e22 88px,#049e22 96px,#099e22 104px,#0f9e21 112px,#169e21 120px,#1e9e21 128px,#279e21 136px,#309e21 144px,#3a9e21 152px,#469e20 160px,#529e20 168px,#5f9e20 176px,#6d9e20 184px,#7c9e20 192px,#8c9e1f 200px,#9e9e1f 208px,#9e8d1c 216px,#9e7e18 224px,#9e7116 232px,#9e6513 240px,#9e5b11 248px,#9e520f 256px,#9e4a0e 264px,#9e430c 272px,#9e3d0b 280px,#9e370a 288px,#9e3108 296px,#9e2d07 304px,#9e2807 312px,#9e2406 320px,#9e2005 328px,#9e1d04 336px,#9e1a04 344px,#9e1703 352px,#9e1403 360px,#9e1202 368px,#9e1002 376px,#9e0e01 384px,#9e0c01 392px,#9e0a01 400px,#9e0800 408px,#9e0700 416px,#9e0500 424px,#9e0400 432px,#9e0300 440px,#9e0200 448px,#9e0100 456px,#9e0000 464px,#9e0000 472px,#9e0000 480px,#9e0000 488px,#9e0000 496px);"></div>
<div class="b" style="left:0;top:57px;width:618px;height:3px;background:linear-gradient(90deg,#009e26 0px,#009e26 8px,#009e26 16px,#009e26 24px,#009e26 32px,#009e26 40px,#009e26 48px,#009e26 56px,#009e26 64px,#009e26 72px,#009e26 80px,#009e26 88px,#039e26 96px,#089e26 104px,#0f9e25 112px,#169e25 120px,#1e9e25 128px,#269e25 136px,#309e25 144px,#3a9e25 152px,#459e25 160px,#519e25 168px,#5e9e25 176px,#6d9e25 184px,#7c9e25 192px,#8d9e25 200px,#9e9d25 208px,#9e8c20 216px,#9e7d1d 224px,#9e701a 232px,#9e6517 240px,#9e5a15 248px,#9e5113 256px,#9e4911 264px,#9e420f 272px,#9e3c0d 280px,#9e360c 288px,#9e310b 296px,#9e2c0a 304px,#9e2709 312px,#9e2308 320px,#9e2007 328px,#9e1c06 336px,#9e1905 344px,#9e1605 352px,#9e1404 360px,#9e1104 368px,#9e0f03 376px,#9e0d03 384px,#9e0b02 392px,#9e0902 400px,#9e0801 408px,#9e0601 416px,#9e0501 424px,#9e0400 432px,#9e0200 440px,#9e0100 448px,#9e0100 456px,#9e0000 464px,#9e0000 472px,#9e0000 480px,#9e0000 488px,#9e0000 496px,#9e0000 504px,#9e0000 512px,#9e0000 520px);"></div>
<div class="b" style="left:0;top:60px;width:618px;height:3px;background:linear-gradient(90deg,#009e29 0px,#009e29 8px,#009e29 16px,#009e29 24px,#009e29 32px,#009e29 40px,#009e29 48px,#009e29 56px,#009e29 64px,#009e29 72px,#009e2a 80px,#009e2a 88px,#039e2a 96px,#089e2a 104px,#0e9e2a 112px,#159e2a 120px,#1d9e2a 128px,#269e2a 136px,#2f9e2a 144px,#3a9e2a 152px,#459e2a 160px,#519e2a 168px,#5e9e2a 176px,#6d9e2a 184px,#7c9e2a 192px,#8d9e2a 200px,#9e9d2a 208px,#9e8b26 216px,#9e7c22 224px,#9e6f1e 232px,#9e641b 240px,#9e5a18 248px,#9e5116 256px,#9e4914 264px,#9e4112 272px,#9e3b10 280px,#9e350f 288px,#9e300d 296px,#9e2b0c 304px,#9e270b 312px,#9e230a 320px,#9e1f09 328px,#9e1c08 336px,#9e1907 344px,#9e1606 352px,#9e1306 360px,#9e1105 368px,#9e0f04 376px,#9e0d04 384px,#9e0b03 392px,#9e0903 400px,#9e0702 408px,#9e0602 416px,#9e0402 424px,#9e0301 432px,#9e0201 440px,#9e0101 448px,#9e0000 456px,#9e0000 464px,#9e0000 472px,#9e0000 480px,#9e0000 488px,#9e0000 496px,#9e0000 504px,#9e0000 512px,#9e0000 520px,#9e0000 528px,#9e0000 536px,#9e0000 544px);"></div>
<div class="b" style="left:0;top:63px;width:618px;height:3px;background:linear-gradient(90deg,#009e2c 0px,#009e2d 8px,#009e2d 16px,#009e2d 24px,#009e2d 32px,#009e2d 40px,#009e2d 48px,#009e2d 56px,#009e2d 64px,#009e2d 72px,#009e2d 80px,#009e2e 88px,#029e2e 96px,#079e2e 104px,#0d9e2e 112px,#159e2e 120px,#1d9e2e 128px,#259e2f 136px,#2f9e2f 144px,#399e2f 152px,#459e2f 160px,#519e2f 168px,#5e9e30 176px,#6d9e30 184px,#7d9e30 192px,#8e9e30 200px,#9e9c30 208px,#9e8a2b 216px,#9e7b26 224px,#9e6e23 232px,#9e631f 240px,#9e591c 248px,#9e501a 256px,#9e4817 264px,#9e4115 272px,#9e3a13 280px,#9e3412 288px,#9e2f10 296px,#9e2a0f 304px,#9e260d 312px,#9e220c 320px,#9e1e0b 328px,#9e1b0a 336px,#9e1809 344px,#9e1508 352px,#9e1307 360px,#9e1007 368px,#9e0e06 376px,#9e0c05 384px,#9e0a05 392px,#9e0804 400px,#9e0704 408px,#9e0503 416px,#9e0403 424px,#9e0302 432px,#9e0202 440px,#9e0102 448px,#9e0001 456px,#9e0001 464px,#9e0001 472px,#9e0001 480px,#9e0000 488px,#9e0000 496px,#9e0000 504px,#9e0000 512px,#9e0000 520px,#9e0000 528px,#9e0000 536px,#9e0000 544px,#9e0000 552px,#9e0000 560px,#9e0000 568px,#9e0000 576px);"></div>
<div class="b" style="left:0;top:66px;width:618px;height:3px;background:linear-gradient(90deg,#009e30 0px,#009e30 8px,#009e30 16px,#009e30 24px,#009e30 32px,#009e31 40px,#009e31 48px,#009e31 56px,#009e31 64px,#009e31 72px,#009e32 80px,#009e32 88px,#029e32 96px,#079e32 104px,#0d9e33 112px,#149e33 120px,#1c9e33 128px,#259e33 136px,#2e9e34 144px,#399e34 152px,#449e34 160px,#519e35 168px,#5e9e35 176px,#6d9e36 184px,#7d9e36 192px,#8e9e36 200px,#9e9b36 208px,#9e8a30 216px,#9e7b2b 224px,#9e6d27 232px,#9e6224 240px,#9e5820 248px,#9e4f1d 256px,#9e471b 264px,#9e4018 272px,#9e3916 280px,#9e3414 288px,#9e2e13 296px,#9e2a11 304px,#9e2510 312px,#9e210e 320px,#9e1e0d 328px,#9e1a0c 336px,#9e170b 344px,#9e150a 352px,#9e1209 360px,#9e1008 368px,#9e0d08 376px,#9e0b07 384px,#9e0a06 392px,#9e0806 400px,#9e0605 408px,#9e0505 416px,#9e0404 424px,#9e0204 432px,#9e0103 440px,#9e0103 448px,#9e0002 456px,#9e0002 464px,#9e0002 472px,#9e0001 480px,#9e0001 488px,#9e0001 496px,#9e0001 504px,#9e0000 512px,#9e0000 520px,#9e0000 528px,#9e0000 536px,#9e0000 544px,#9e0000 552px,#9e0000 560px,#9e0000 568px,#9e0000 576px,#9e0000 584px,#9e0000 592px,#9e0000 600px);"></div>
<div class="b" style="left:0;top:69px;width:618px;height:3px;background:linear-gradient(90deg,#009e33 0px,#009e33 8px,#009e34 16px,#009e34 24px,#009e34 32px,#009e34 40px,#009e35 48px,#009e35 56px,#009e35 64px,#009e36 72px,#009e36 80px,#009e36 88px,#019e36 96px,#069e37 104px,#0c9e37 112px,#139e38 120px,#1b9e38 128px,#249e38 136px,#2e9e39 144px,#389e39 152px,#449e3a 160px,#519e3a 168px,#5e9e3b 176px,#6d9e3c 184px,#7d9e3c 192px,#8f9e3d 200px,#9e9b3c 208px,#9e8936 216px,#9e7a31 224px,#9e6d2c 232px,#9e6128 240px,#9e5724 248px,#9e4e21 256px,#9e461e 264px,#9e3f1c 272px,#9e3919 280px,#9e3317 288px,#9e2e16 296px,#9e2914 304px,#9e2512 312px,#9e2111 320px,#9e1d0f 328px,#9e1a0e 336px,#9e170d 344px,#9e140c 352px,#9e110b 360px,#9e0f0a 368px,#9e0d09 376px,#9e0b09 384px,#9e0908 392px,#9e0707 400px,#9e0607 408px,#9e0506 416px,#9e0305 424px,#9e0205 432px,#9e0104 440px,#9e0004 448px,#9e0004 456px,#9e0003 464px,#9e0003 472px,#9e0002 480px,#9e0002 488px,#9e0002 496px,#9e0001 504px,#9e0001 512px,#9e0001 520px,#9e0001 528px,#9e0000 536px,#9e0000 544px,#9e0000 552px,#9e0000 560px,#9e0000 568px,#9e0000 576px,#9e0000 584px,#9e0000 592px,#9e0000 600px,#9e0000 608px,#9e0000 616px,#9e0000 618px);"></div>
<div class="b" style="left:0;top:72px;width:618px;height:3px;background:linear-gradient(90deg,#009e37 0px,#009e37 8px,#009e37 16px,#009e38 24px,#009e38 32px,#009e38 40px,#009e39 48px,#009e39 56px,#009e39 64px,#009e3a 72px,#009e3a 80px,#009e3b 88px,#019e3b 96px,#069e3c 104px,#0c9e3c 112px,#139e3d 120px,#1b9e3d 128px,#249e3e 136px,#2d9e3e 144px,#389e3f 152px,#449e40 160px,#509e40 168px,#5e9e41 176px,#6d9e42 184px,#7d9e43 192px,#8f9e44 200px,#9e9a43 208px,#9e883c 216px,#9e7936 224px,#9e6c31 232px,#9e602d 240px,#9e5629 248px,#9e4d25 256px,#9e4522 264px,#9e3e1f 272px,#9e381d 280px,#9e321a 288px,#9e2d18 296px,#9e2817 304px,#9e2415 312px,#9e2013 320px,#9e1c12 328px,#9e1910 336px,#9e160f 344px,#9e130e 352px,#9e110d 360px,#9e0f0c 368px,#9e0c0b 376px,#9e0a0a 384px,#9e090a 392px,#9e0709 400px,#9e0508 408px,#9e0407 416px,#9e0307 424px,#9e0206 432px,#9e0106 440px,#9e0005 448px,#9e0005 456px,#9e0004 464px,#9e0004 472px,#9e0003 480px,#9e0003 488px,#9e0003 496px,#9e0002 504px,#9e0002 512px,#9e0002 520px,#9e0001 528px,#9e0001 536px,#9e0001 544px,#9e0001 552px,#9e0001 560px,#9e0000 568px,#9e0000 576px,#9e0000 584px,#9e0000 592px,#9e0000 600px,#9e0000 608px,#9e0000 616px,#9e0000 618px);"></div>
<div class="b" style="left:0;top:75px;width:618px;height:3px;background:linear-gradient(90deg,#009e3a 0px,#009e3b 8px,#009e3b 16px,#009e3b 24px,#009e3c 32px,#009e3c 40px,#009e3d 48px,#009e3d 56px,#009e3e 64px,#009e3e 72px,#009e3f 80px,#009e3f 88px,#009e40 96px,#059e40 104px,#0b9e41 112px,#129e42 120px,#1a9e42 128px,#239e43 136px,#2d9e44 144px,#389e45 152px,#439e45 160px,#509e46 168px,#5e9e47 176px,#6d9e48 184px,#7e9e49 192px,#909e4a 200px,#9e9949 208px,#9e8742 216px,#9e783c 224px,#9e6b36 232px,#9e5f31 240px,#9e552d 248px,#9e4c29 256px,#9e4426 264px,#9e3d23 272px,#9e3720 280px,#9e311e 288px,#9e2c1b 296px,#9e2719 304px,#9e2318 312px,#9e1f16 320px,#9e1c14 328px,#9e1813 336px,#9e1511 344px,#9e1310 352px,#9e100f 360px,#9e0e0e 368px,#9e0c0d 376px,#9e0a0c 384px,#9e080b 392px,#9e070a 400px,#9e050a 408px,#9e0409 416px,#9e0208 424px,#9e0108 432px,#9e0107 440px,#9e0006 448px,#9e0006 456px,#9e0005 464px,#9e0005 472px,#9e0005 480px,#9e0004 488px,#9e0004 496px,#9e0003 504px,#9e0003 512px,#9e0003 520px,#9e0002 528px,#9e0002 536px,#9e0002 544px,#9e0002 552px,#9e0001 560px,#9e0001 568px,#9e0001 576px,#9e0001 584px,#9e0000 592px,#9e0000 600px,#9e0000 608px,#9e0000 616px,#9e0000 618px);"></div>
<div class="b" style="left:0;top:78px;width:618px;height:3px;background:linear-gradient(90deg,#009e3e 0px,#009e3f 8px,#009e3f 16px,#009e3f 24px,#009e40 32px,#009e40 40px,#009e41 48px,#009e41 56px,#009e42 64px,#009e43 72px,#009e43 80px,#009e44 88px,#009e45 96px,#049e45 104px,#0a9e46 112px,#129e47 120px,#1a9e48 128px,#239e49 136px,#2c9e49 144px,#379e4a 152px,#439e4b 160px,#509e4d 168px,#5e9e4e 176px,#6d9e4f 184px,#7e9e50 192px,#909e52 200px,#9e9850 208px,#9e8648 216px,#9e7741 224px,#9e6a3b 232px,#9e5e36 240px,#9e5432 248px,#9e4b2d 256px,#9e442a 264px,#9e3c27 272px,#9e3624 280px,#9e3021 288px,#9e2b1f 296px,#9e271c 304px,#9e221a 312px,#9e1f18 320px,#9e1b17 328px,#9e1815 336px,#9e1514 344px,#9e1212 352px,#9e1011 360px,#9e0d10 368px,#9e0b0f 376px,#9e090e 384px,#9e080d 392px,#9e060c 400px,#9e050b 408px,#9e030a 416px,#9e020a 424px,#9e0109 432px,#9e0008 440px,#9e0008 448px,#9e0007 456px,#9e0007 464px,#9e0006 472px,#9e0006 480px,#9e0005 488px,#9e0005 496px,#9e0004 504px,#9e0004 512px,#9e0004 520px,#9e0003 528px,#9e0003 536px,#9e0003 544px,#9e0002 552px,#9e0002 560px,#9e0002 568px,#9e0002 576px,#9e0001 584px,#9e0001 592px,#9e0001 600px,#9e0001 608px,#9e0001 616px,#9e0000 618px);"></div>
<div class="b" style="left:0;top:81px;width:618px;height:3px;background:linear-gradient(90deg,#009e42 0px,#009e42 8px,#009e43 16px,#009e43 24px,#009e44 32px,#009e45 40px,#009e45 48px,#009e46 56px,#009e47 64px,#009e47 72px,#009e48 80px,#009e49 88px,#009e4a 96px,#049e4a 104px,#0a9e4b 112px,#119e4c 120px,#199e4d 128px,#229e4e 136px,#2c9e4f 144px,#379e51 152px,#439e52 160px,#509e53 168px,#5e9e54 176px,#6d9e56 184px,#7e9e58 192px,#919e59 200px,#9e9857 208px,#9e864f 216px,#9e7647 224px,#9e6941 232px,#9e5e3b 240px,#9e5336 248px,#9e4b32 256px,#9e432e 264px,#9e3c2a 272px,#9e3527 280px,#9e3024 288px,#9e2a22 296px,#9e261f 304px,#9e221d 312px,#9e1e1b 320px,#9e1a19 328px,#9e1718 336px,#9e1416 344px,#9e1215 352px,#9e0f13 360px,#9e0d12 368px,#9e0b11 376px,#9e0910 384px,#9e070f 392px,#9e060e 400px,#9e040d 408px,#9e030c 416px,#9e020b 424px,#9e010b 432px,#9e000a 440px,#9e0009 448px,#9e0009 456px,#9e0008 464px,#9e0007 472px,#9e0007 480px,#9e0006 488px,#9e0006 496px,#9e0005 504px,#9e0005 512px,#9e0005 520px,#9e0004 528px,#9e0004 536px,#9e0004 544px,#9e0003 552px,#9e0003 560px,#9e0003 568px,#9e0002 576px,#9e0002 584px,#9e0002 592px,#9e0002 600px,#9e0001 608px,#9e0001 616px,#9e0001 618px);"></div>
<div class="b" style="left:0;top:84px;width:618px;height:3px;background:linear-gradient(90deg,#009e46 0px,#009e46 8px,#009e47 16px,#009e48 24px,#009e48 32px,#009e49 40px,#009e4a 48px,#009e4a 56px,#009e4b 64px,#009e4c 72px,#009e4d 80px,#009e4e 88px,#009e4f 96px,#039e50 104px,#099e51 112px,#109e52 120px,#189e53 128px,#219e54 136px,#2b9e55 144px,#369e57 152px,#429e58 160px,#509e5a 168px,#5e9e5b 176px,#6e9e5d 184px,#7f9e5f 192px,#919e61 200px,#9e975f 208px,#9e8555 216px,#9e754d 224px,#9e6846 232px,#9e5d40 240px,#9e533b 248px,#9e4a36 256px,#9e4232 264px,#9e3b2e 272px,#9e342b 280px,#9e2f28 288px,#9e2a25 296px,#9e2522 304px,#9e2120 312px,#9e1d1e 320px,#9e1a1c 328px,#9e161a 336px,#9e1418 344px,#9e1117 352px,#9e0e15 360px,#9e0c14 368px,#9e0a13 376px,#9e0812 384px,#9e0711 392px,#9e0510 400px,#9e040f 408px,#9e020e 416px,#9e010d 424px,#9e000c 432px,#9e000b 440px,#9e000b 448px,#9e000a 456px,#9e0009 464px,#9e0009 472px,#9e0008 480px,#9e0008 488px,#9e0007 496px,#9e0007 504px,#9e0006 512px,#9e0006 520px,#9e0005 528px,#9e0005 536px,#9e0004 544px,#9e0004 552px,#9e0004 560px,#9e0003 568px,#9e0003 576px,#9e0003 584px,#9e0003 592px,#9e0002 600px,#9e0002 608px,#9e0002 616px,#9e0002 618px);"></div>
<div class="b" style="left:0;top:87px;width:618px;height:3px;background:linear-gradient(90deg,#009e4a 0px,#009e4a 8px,#009e4b 16px,#009e4c 24px,#009e4d 32px,#009e4d 40px,#009e4e 48px,#009e4f 56px,#009e50 64px,#009e51 72px,#009e52 80px,#009e53 88px,#009e54 96px,#039e55 104px,#099e56 112px,#109e58 120px,#189e59 128px,#219e5a 136px,#2b9e5c 144px,#369e5d 152px,#429e5f 160px,#4f9e61 168px,#5e9e63 176px,#6e9e65 184px,#7f9e67 192px,#929e69 200px,#9e9666 208px,#9e845c 216px,#9e7553 224px,#9e674c 232px,#9e5c46 240px,#9e5240 248px,#9e493b 256px,#9e4136 264px,#9e3a32 272px,#9e342f 280px,#9e2e2b 288px,#9e2928 296px,#9e2426 304px,#9e2023 312px,#9e1c21 320px,#9e191f 328px,#9e161d 336px,#9e131b 344px,#9e1019 352px,#9e0e18 360px,#9e0c16 368px,#9e0a15 376px,#9e0814 384px,#9e0613 392px,#9e0511 400px,#9e0310 408px,#9e020f 416px,#9e010f 424px,#9e000e 432px,#9e000d 440px,#9e000c 448px,#9e000b 456px,#9e000b 464px,#9e000a 472px,#9e0009 480px,#9e0009 488px,#9e0008 496px,#9e0008 504px,#9e0007 512px,#9e0007 520px,#9e0006 528px,#9e0006 536px,#9e0005 544px,#9e0005 552px,#9e0005 560px,#9e0004 568px,#9e0004 576px,#9e0004 584px,#9e0003 592px,#9e0003 600px,#9e0003 608px,#9e0003 616px,#9e0002 618px);"></div>
<div class="b" style="left:0;top:90px;width:618px;height:3px;background:linear-gradient(90deg,#009e4e 0px,#009e4f 8px,#009e4f 16px,#009e50 24px,#009e51 32px,#009e52 40px,#009e53 48px,#009e54 56px,#009e55 64px,#009e56 72px,#009e57 80px,#009e58 88px,#009e59 96px,#029e5b 104px,#089e5c 112px,#0f9e5d 120px,#179e5f 128px,#209e61 136px,#2a9e62 144px,#359e64 152px,#429e66 160px,#4f9e68 168px,#5e9e6a 176px,#6e9e6c 184px,#7f9e6f 192px,#939e72 200px,#9e956e 208px,#9e8363 216px,#9e745a 224px,#9e6652 232px,#9e5b4b 240px,#9e5145 248px,#9e483f 256px,#9e403b 264px,#9e3936 272px,#9e3332 280px,#9e2d2f 288px,#9e282c 296px,#9e2429 304px,#9e1f26 312px,#9e1c24 320px,#9e1821 328px,#9e151f 336px,#9e121d 344px,#9e101c 352px,#9e0d1a 360px,#9e0b18 368px,#9e0917 376px,#9e0716 384px,#9e0614 392px,#9e0413 400px,#9e0312 408px,#9e0211 416px,#9e0110 424px,#9e000f 432px,#9e000e 440px,#9e000e 448px,#9e000d 456px,#9e000c 464px,#9e000b 472px,#9e000b 480px,#9e000a 488px,#9e000a 496px,#9e0009 504px,#9e0008 512px,#9e0008 520px,#9e0007 528px,#9e0007 536px,#9e0007 544px,#9e0006 552px,#9e0006 560px,#9e0005 568px,#9e0005 576px,#9e0005 584px,#9e0004 592px,#9e0004 600px,#9e0004 608px,#9e0003 616px,#9e0003 618px);"></div>
<div class="b" style="left:0;top:93px;width:618px;height:3px;background:linear-gradient(90deg,#009e52 1px,#009e53 9px,#009e54 17px,#009e55 25px,#009e56 33px,#009e57 41px,#009e58 49px,#009e59 57px,#009e5a 65px,#009e5b 73px,#009e5c 81px,#009e5e 89px,#009e5f 97px,#029e61 105px,#089e62 113px,#0f9e64 121px,#189e65 129px,#219e67 137px,#2b9e69 145px,#369e6b 153px,#439e6d 161px,#519e70 169px,#609e72 177px,#709e75 185px,#829e78 193px,#969e7b 201px,#9e9274 209px,#9e8069 217px,#9e715f 225px,#9e6457 233px,#9e5950 241px,#9e4f49 249px,#9e4643 257px,#9e3e3e 265px,#9e373a 273px,#9e3136 281px,#9e2c32 289px,#9e272f 297px,#9e222c 305px,#9e1e29 313px,#9e1a26 321px,#9e1724 329px,#9e1422 337px,#9e1120 345px,#9e0f1e 353px,#9e0c1c 361px,#9e0a1b 369px,#9e0819 377px,#9e0718 385px,#9e0516 393px,#9e0415 401px,#9e0214 409px,#9e0113 417px,#9e0012 425px,#9e0011 433px,#9e0010 441px,#9e000f 449px,#9e000e 457px,#9e000d 465px,#9e000d 473px,#9e000c 481px,#9e000b 489px,#9e000b 497px,#9e000a 505px,#9e000a 513px,#9e0009 521px,#9e0008 529px,#9e0008 537px,#9e0008 545px,#9e0007 553px,#9e0007 561px,#9e0006 569px,#9e0006 577px,#9e0005 585px,#9e0005 593px,#9e0005 601px,#9e0004 609px,#9e0004 617px,#9e0004 618px);"></div>
<div class="b" style="left:0;top:96px;width:618px;height:3px;background:linear-gradient(90deg,#009e56 2px,#009e57 10px,#009e58 18px,#009e59 26px,#009e5a 34px,#009e5c 42px,#009e5d 50px,#009e5e 58px,#009e5f 66px,#009e61 74px,#009e62 82px,#009e64 90px,#009e65 98px,#029e67 106px,#089e68 114px,#109e6a 122px,#189e6c 130px,#219e6e 138px,#2c9e70 146px,#379e73 154px,#449e75 162px,#529e78 170px,#629e7b 178px,#729e7e 186px,#859e81 194px,#999e84 202px,#9e8f7b 210px,#9e7d6f 218px,#9e6e65 226px,#9e615c 234px,#9e5654 242px,#9e4c4e 250px,#9e4448 258px,#9e3c42 266px,#9e363e 274px,#9e3039 282px,#9e2a35 290px,#9e2532 298px,#9e212f 306px,#9e1d2c 314px,#9e1929 322px,#9e1626 330px,#9e1324 338px,#9e1022 346px,#9e0e20 354px,#9e0c1e 362px,#9e091d 370px,#9e081b 378px,#9e061a 386px,#9e0418 394px,#9e0317 402px,#9e0216 410px,#9e0114 418px,#9e0013 426px,#9e0012 434px,#9e0011 442px,#9e0010 450px,#9e0010 458px,#9e000f 466px,#9e000e 474px,#9e000d 482px,#9e000d 490px,#9e000c 498px,#9e000b 506px,#9e000b 514px,#9e000a 522px,#9e000a 530px,#9e0009 538px,#9e0009 546px,#9e0008 554px,#9e0008 562px,#9e0007 570px,#9e0007 578px,#9e0006 586px,#9e0006 594px,#9e0006 602px,#9e0005 610px,#9e0005 618px);"></div>
<div class="b" style="left:0;top:99px;width:618px;height:3px;background:linear-gradient(90deg,#009e5b 3px,#009e5c 11px,#009e5d 19px,#009e5e 27px,#009e5f 35px,#009e61 43px,#009e62 51px,#009e63 59px,#009e65 67px,#009e66 75px,#009e68 83px,#009e69 91px,#009e6b 99px,#029e6d 107px,#089e6f 115px,#109e71 123px,#189e73 131px,#229e76 139px,#2d9e78 147px,#399e7b 155px,#469e7d 163px,#549e80 171px,#649e83 179px,#759e87 187px,#889e8b 195px,#9c9e8e 203px,#9e8b81 211px,#9e7a75 219px,#9e6c6a 227px,#9e5f61 235px,#9e5459 243px,#9e4a52 251px,#9e424c 259px,#9e3b46 267px,#9e3441 275px,#9e2e3d 283px,#9e2939 291px,#9e2435 299px,#9e2032 307px,#9e1c2e 315px,#9e182c 323px,#9e1529 331px,#9e1227 339px,#9e0f24 347px,#9e0d22 355px,#9e0b20 363px,#9e091f 371px,#9e071d 379px,#9e051b 387px,#9e041a 395px,#9e0219 403px,#9e0117 411px,#9e0016 419px,#9e0015 427px,#9e0014 435px,#9e0013 443px,#9e0012 451px,#9e0011 459px,#9e0010 467px,#9e000f 475px,#9e000f 483px,#9e000e 491px,#9e000d 499px,#9e000c 507px,#9e000c 515px,#9e000b 523px,#9e000b 531px,#9e000a 539px,#9e000a 547px,#9e0009 555px,#9e0009 563px,#9e0008 571px,#9e0008 579px,#9e0007 587px,#9e0007 595px,#9e0006 603px,#9e0006 611px,#9e0006 618px);"></div>
<div class="b" style="left:0;top:102px;width:618px;height:3px;background:linear-gradient(90deg,#009e5f 4px,#009e61 12px,#009e62 20px,#009e63 28px,#009e64 36px,#009e66 44px,#009e67 52px,#009e69 60px,#009e6a 68px,#009e6c 76px,#009e6e 84px,#009e70 92px,#009e72 100px,#029e74 108px,#099e76 116px,#109e78 124px,#199e7b 132px,#239e7d 140px,#2e9e80 148px,#3a9e83 156px,#479e86 164px,#569e89 172px,#669e8d 180px,#779e90 188px,#8b9e95 196px,#9e9c97 204px,#9e8888 212px,#9e777b 220px,#9e6970 228px,#9e5c66 236px,#9e525e 244px,#9e4857 252px,#9e4050 260px,#9e394a 268px,#9e3245 276px,#9e2c40 284px,#9e273c 292px,#9e2338 300px,#9e1e35 308px,#9e1a31 316px,#9e172e 324px,#9e142c 332px,#9e1129 340px,#9e0e27 348px,#9e0c25 356px,#9e0a23 364px,#9e0821 372px,#9e061f 380px,#9e051d 388px,#9e031c 396px,#9e021a 404px,#9e0119 412px,#9e0018 420px,#9e0017 428px,#9e0016 436px,#9e0014 444px,#9e0013 452px,#9e0013 460px,#9e0012 468px,#9e0011 476px,#9e0010 484px,#9e000f 492px,#9e000e 500px,#9e000e 508px,#9e000d 516px,#9e000c 524px,#9e000c 532px,#9e000b 540px,#9e000b 548px,#9e000a 556px,#9e000a 564px,#9e0009 572px,#9e0009 580px,#9e0008 588px,#9e0008 596px,#9e0007 604px,#9e0007 612px,#9e0007 618px);"></div>
<div class="b" style="left:0;top:105px;width:618px;height:3px;background:linear-gradient(90deg,#009e64 5px,#009e65 13px,#009e67 21px,#009e68 29px,#009e6a 37px,#009e6b 45px,#009e6d 53px,#009e6e 61px,#009e70 69px,#009e72 77px,#009e74 85px,#009e76 93px,#009e78 101px,#039e7a 109px,#099e7d 117px,#119e7f 125px,#199e82 133px,#239e85 141px,#2f9e88 149px,#3b9e8b 157px,#489e8f 165px,#579e92 173px,#689e96 181px,#7a9e9b 189px,#8d9d9e 197px,#9e989e 205px,#9e858f 213px,#9e7481 221px,#9e6676 229px,#9e5a6b 237px,#9e4f63 245px,#9e465b 253px,#9e3e54 261px,#9e374e 269px,#9e3149 277px,#9e2b44 285px,#9e263f 293px,#9e213b 301px,#9e1d38 309px,#9e1934 317px,#9e1631 325px,#9e132e 333px,#9e102c 341px,#9e0d29 349px,#9e0b27 357px,#9e0925 365px,#9e0723 373px,#9e0521 381px,#9e041f 389px,#9e031e 397px,#9e011c 405px,#9e001b 413px,#9e001a 421px,#9e0018 429px,#9e0017 437px,#9e0016 445px,#9e0015 453px,#9e0014 461px,#9e0013 469px,#9e0012 477px,#9e0011 485px,#9e0010 493px,#9e0010 501px,#9e000f 509px,#9e000e 517px,#9e000e 525px,#9e000d 533px,#9e000c 541px,#9e000c 549px,#9e000b 557px,#9e000b 565px,#9e000a 573px,#9e000a 581px,#9e0009 589px,#9e0009 597px,#9e0008 605px,#9e0008 613px,#9e0008 618px);"></div>
<div class="b" style="left:0;top:108px;width:618px;height:3px;background:linear-gradient(90deg,#009e69 5px,#009e6a 13px,#009e6c 21px,#009e6d 29px,#009e6f 37px,#009e71 45px,#009e72 53px,#009e74 61px,#009e76 69px,#009e78 77px,#009e7a 85px,#009e7c 93px,#009e7f 101px,#029e81 109px,#089e84 117px,#109e87 125px,#199e8a 133px,#239e8d 141px,#2e9e90 149px,#3a9e94 157px,#489e97 165px,#579e9b 173px,#679c9e 181px,#75989e 189px,#85939e 197px,#958f9e 205px,#9e8497 213px,#9e7389 221px,#9e657d 229px,#9e5972 237px,#9e4e69 245px,#9e4561 253px,#9e3d59 261px,#9e3653 269px,#9e304d 277px,#9e2a48 285px,#9e2543 293px,#9e203f 301px,#9e1c3b 309px,#9e1938 317px,#9e1534 325px,#9e1231 333px,#9e0f2f 341px,#9e0d2c 349px,#9e0b2a 357px,#9e0827 365px,#9e0725 373px,#9e0523 381px,#9e0322 389px,#9e0220 397px,#9e011e 405px,#9e001d 413px,#9e001c 421px,#9e001a 429px,#9e0019 437px,#9e0018 445px,#9e0017 453px,#9e0016 461px,#9e0015 469px,#9e0014 477px,#9e0013 485px,#9e0012 493px,#9e0011 501px,#9e0010 509px,#9e0010 517px,#9e000f 525px,#9e000e 533px,#9e000e 541px,#9e000d 549px,#9e000c 557px,#9e000c 565px,#9e000b 573px,#9e000b 581px,#9e000a 589px,#9e000a 597px,#9e0009 605px,#9e0009 613px,#9e0009 618px);"></div>
<div class="b" style="left:0;top:111px;width:618px;height:3px;background:linear-gradient(90deg,#009e6e 6px,#009e6f 14px,#009e71 22px,#009e73 30px,#009e74 38px,#009e76 46px,#009e78 54px,#009e7a 62px,#009e7c 70px,#009e7e 78px,#009e81 86px,#009e83 94px,#009e86 102px,#029e88 110px,#089e8b 118px,#109e8e 126px,#199e92 134px,#239e95 142px,#2f9e99 150px,#3c9e9d 158px,#489b9e 166px,#55979e 174px,#63939e 182px,#718e9e 190px,#7f8a9e 198px,#8e869e 206px,#9e819e 214px,#9e718f 222px,#9e6382 230px,#9e5777 238px,#9e4c6e 246px,#9e4365 254px,#9e3b5e 262px,#9e3457 270px,#9e2e51 278px,#9e284c 286px,#9e2347 294px,#9e1f42 302px,#9e1b3e 310px,#9e173b 318px,#9e1437 326px,#9e1134 334px,#9e0e31 342px,#9e0c2e 350px,#9e0a2c 358px,#9e082a 366px,#9e0628 374px,#9e0426 382px,#9e0324 390px,#9e0222 398px,#9e0020 406px,#9e001f 414px,#9e001d 422px,#9e001c 430px,#9e001b 438px,#9e0019 446px,#9e0018 454px,#9e0017 462px,#9e0016 470px,#9e0015 478px,#9e0014 486px,#9e0013 494px,#9e0012 502px,#9e0012 510px,#9e0011 518px,#9e0010 526px,#9e000f 534px,#9e000f 542px,#9e000e 550px,#9e000d 558px,#9e000d 566px,#9e000c 574px,#9e000c 582px,#9e000b 590px,#9e000b 598px,#9e000a 606px,#9e000a 614px);"></div>
<div class="b" style="left:0;top:114px;width:618px;height:3px;background:linear-gradient(90deg,#009e73 7px,#009e75 15px,#009e76 23px,#009e78 31px,#009e7a 39px,#009e7c 47px,#009e7e 55px,#009e80 63px,#009e83 71px,#009e85 79px,#009e88 87px,#009e8a 95px,#009e8d 103px,#029e90 111px,#099e93 119px,#119e97 127px,#1a9e9a 135px,#249e9e 143px,#2f9a9e 151px,#3a969e 159px,#46929e 167px,#528e9e 175px,#5f8a9e 183px,#6c869e 191px,#7a819e 199px,#897d9e 207px,#98799e 215px,#9e6e95 223px,#9e6088 231px,#9e547d 239px,#9e4a73 247px,#9e416a 255px,#9e3962 263px,#9e325b 271px,#9e2c55 279px,#9e274f 287px,#9e224a 295px,#9e1e46 303px,#9e1a41 311px,#9e163e 319px,#9e133a 327px,#9e1037 335px,#9e0d34 343px,#9e0b31 351px,#9e092e 359px,#9e072c 367px,#9e052a 375px,#9e0428 383px,#9e0226 391px,#9e0124 399px,#9e0022 407px,#9e0021 415px,#9e001f 423px,#9e001e 431px,#9e001c 439px,#9e001b 447px,#9e001a 455px,#9e0019 463px,#9e0018 471px,#9e0017 479px,#9e0016 487px,#9e0015 495px,#9e0014 503px,#9e0013 511px,#9e0012 519px,#9e0011 527px,#9e0011 535px,#9e0010 543px,#9e000f 551px,#9e000e 559px,#9e000e 567px,#9e000d 575px,#9e000d 583px,#9e000c 591px,#9e000c 599px,#9e000b 607px,#9e000b 615px);"></div>
<div class="b" style="left:0;top:117px;width:618px;height:3px;background:linear-gradient(90deg,#009e78 8px,#009e7a 16px,#009e7c 24px,#009e7e 32px,#009e80 40px,#009e82 48px,#009e84 56px,#009e87 64px,#009e89 72px,#009e8c 80px,#009e8f 88px,#009e91 96px,#009e95 104px,#029e98 112px,#099e9b 120px,#119d9e 128px,#1a9a9e 136px,#23969e 144px,#2d929e 152px,#388e9e 160px,#438a9e 168px,#4f869e 176px,#5b829e 184px,#687e9e 192px,#75799e 200px,#83759e 208px,#92719e 216px,#9e6b9c 224px,#9e5d8e 232px,#9e5282 240px,#9e4878 248px,#9e3f6f 256px,#9e3766 264px,#9e315f 272px,#9e2b59 280px,#9e2553 288px,#9e214e 296px,#9e1c49 304px,#9e1845 312px,#9e1541 320px,#9e123d 328px,#9e0f3a 336px,#9e0c36 344px,#9e0a34 352px,#9e0831 360px,#9e062e 368px,#9e042c 376px,#9e032a 384px,#9e0228 392px,#9e0126 400px,#9e0024 408px,#9e0022 416px,#9e0021 424px,#9e001f 432px,#9e001e 440px,#9e001d 448px,#9e001b 456px,#9e001a 464px,#9e0019 472px,#9e0018 480px,#9e0017 488px,#9e0016 496px,#9e0015 504px,#9e0014 512px,#9e0013 520px,#9e0012 528px,#9e0012 536px,#9e0011 544px,#9e0010 552px,#9e0010 560px,#9e000f 568px,#9e000e 576px,#9e000e 584px,#9e000d 592px,#9e000d 600px,#9e000c 608px);"></div>
<div class="b" style="left:0;top:120px;width:618px;height:3px;background:linear-gradient(90deg,#009e7e 9px,#009e80 17px,#009e82 25px,#009e84 33px,#009e86 41px,#009e88 49px,#009e8b 57px,#009e8d 65px,#009e90 73px,#009e93 81px,#009e96 89px,#009e99 97px,#009e9c 105px,#029c9e 113px,#09999e 121px,#10959e 129px,#19919e 137px,#228e9e 145px,#2b8a9e 153px,#36869e 161px,#41829e 169px,#4c7e9e 177px,#587a9e 185px,#64769e 193px,#71729e 201px,#7e6e9e 209px,#8c6a9e 217px,#9a659e 225px,#9e5b94 233px,#9e4f87 241px,#9e467d 249px,#9e3d73 257px,#9e366b 265px,#9e2f63 273px,#9e295d 281px,#9e2457 289px,#9e1f51 297px,#9e1b4c 305px,#9e1748 313px,#9e1444 321px,#9e1140 329px,#9e0e3c 337px,#9e0b39 345px,#9e0936 353px,#9e0733 361px,#9e0531 369px,#9e042e 377px,#9e022c 385px,#9e012a 393px,#9e0028 401px,#9e0026 409px,#9e0024 417px,#9e0023 425px,#9e0021 433px,#9e0020 441px,#9e001e 449px,#9e001d 457px,#9e001c 465px,#9e001b 473px,#9e0019 481px,#9e0018 489px,#9e0017 497px,#9e0016 505px,#9e0015 513px,#9e0015 521px,#9e0014 529px,#9e0013 537px,#9e0012 545px,#9e0011 553px,#9e0011 561px,#9e0010 569px,#9e000f 577px,#9e000f 585px,#9e000e 593px,#9e000e 601px,#9e000d 609px);"></div>
<div class="b" style="left:0;top:123px;width:618px;height:3px;background:linear-gradient(90deg,#009e83 10px,#009e85 18px,#009e88 26px,#009e8a 34px,#009e8c 42px,#009e8f 50px,#009e91 58px,#009e94 66px,#009e97 74px,#009e9a 82px,#009e9d 90px,#009b9e 98px,#00989e 106px,#02959e 114px,#08919e 122px,#108d9e 130px,#188a9e 138px,#21869e 146px,#2a829e 154px,#347f9e 162px,#3e7b9e 170px,#49779e 178px,#55739e 186px,#606f9e 194px,#6d6b9e 202px,#79679e 210px,#87639e 218px,#945f9e 226px,#9e589a 234px,#9e4d8d 242px,#9e4382 250px,#9e3b78 258px,#9e346f 266px,#9e2d68 274px,#9e2761 282px,#9e225a 290px,#9e1e55 298px,#9e1a50 306px,#9e164b 314px,#9e1347 322px,#9e1043 330px,#9e0d3f 338px,#9e0b3c 346px,#9e0839 354px,#9e0636 362px,#9e0533 370px,#9e0331 378px,#9e022e 386px,#9e012c 394px,#9e002a 402px,#9e0028 410px,#9e0026 418px,#9e0025 426px,#9e0023 434px,#9e0021 442px,#9e0020 450px,#9e001f 458px,#9e001d 466px,#9e001c 474px,#9e001b 482px,#9e001a 490px,#9e0019 498px,#9e0018 506px,#9e0017 514px,#9e0016 522px,#9e0015 530px,#9e0014 538px,#9e0013 546px,#9e0013 554px,#9e0012 562px,#9e0011 570px,#9e0010 578px,#9e0010 586px,#9e000f 594px,#9e000f 602px);"></div>
<div class="b" style="left:0;top:126px;width:618px;height:3px;background:linear-gradient(90deg,#009e89 11px,#009e8b 19px,#009e8e 27px,#009e90 35px,#009e93 43px,#009e95 51px,#009e98 59px,#009e9b 67px,#009e9e 75px,#009b9e 83px,#00979e 91px,#00949e 99px,#00919e 107px,#028d9e 115px,#088a9e 123px,#0f869e 131px,#17839e 139px,#207f9e 147px,#297c9e 155px,#32789e 163px,#3c749e 171px,#47709e 179px,#526d9e 187px,#5d699e 195px,#69659e 203px,#75619e 211px,#825d9e 219px,#8f599e 227px,#9d559e 235px,#9e4b92 243px,#9e4187 251px,#9e397d 259px,#9e3274 267px,#9e2c6c 275px,#9e2665 283px,#9e215e 291px,#9e1c58 299px,#9e1853 307px,#9e154e 315px,#9e124a 323px,#9e0f46 331px,#9e0c42 339px,#9e0a3e 347px,#9e073b 355px,#9e0638 363px,#9e0435 371px,#9e0233 379px,#9e0130 387px,#9e002e 395px,#9e002c 403px,#9e002a 411px,#9e0028 419px,#9e0026 427px,#9e0025 435px,#9e0023 443px,#9e0022 451px,#9e0020 459px,#9e001f 467px,#9e001e 475px,#9e001c 483px,#9e001b 491px,#9e001a 499px,#9e0019 507px,#9e0018 515px,#9e0017 523px,#9e0016 531px,#9e0015 539px,#9e0015 547px,#9e0014 555px,#9e0013 563px,#9e0012 571px,#9e0012 579px,#9e0011 587px,#9e0010 595px,#9e0010 603px);"></div>
<div class="b" style="left:0;top:129px;width:618px;height:3px;background:linear-gradient(90deg,#009e8f 12px,#009e91 20px,#009e94 28px,#009e96 36px,#009e99 44px,#009e9c 52px,#009d9e 60px,#009a9e 68px,#00979e 76px,#00949e 84px,#00909e 92px,#008d9e 100px,#008a9e 108px,#02869e 116px,#08839e 124px,#0f809e 132px,#167c9e 140px,#1f799e 148px,#27759e 156px,#31729e 164px,#3a6e9e 172px,#446a9e 180px,#4f669e 188px,#5a639e 196px,#655f9e 204px,#715b9e 212px,#7d579e 220px,#8a539e 228px,#974f9e 236px,#9e4898 244px,#9e3f8c 252px,#9e3782 260px,#9e3078 268px,#9e2a70 276px,#9e2469 284px,#9e1f62 292px,#9e1b5c 300px,#9e1756 308px,#9e1451 316px,#9e104d 324px,#9e0e49 332px,#9e0b45 340px,#9e0941 348px,#9e073e 356px,#9e053b 364px,#9e0338 372px,#9e0235 380px,#9e0133 388px,#9e0030 396px,#9e002e 404px,#9e002c 412px,#9e002a 420px,#9e0028 428px,#9e0027 436px,#9e0025 444px,#9e0023 452px,#9e0022 460px,#9e0020 468px,#9e001f 476px,#9e001e 484px,#9e001d 492px,#9e001c 500px,#9e001b 508px,#9e0019 516px,#9e0019 524px,#9e0018 532px,#9e0017 540px,#9e0016 548px,#9e0015 556px,#9e0014 564px,#9e0013 572px,#9e0013 580px,#9e0012 588px,#9e0011 596px);"></div>
<div class="b" style="left:0;top:132px;width:618px;height:3px;background:linear-gradient(90deg,#009e95 13px,#009e97 21px,#009e9a 29px,#009e9d 37px,#009c9e 45px,#00999e 53px,#00969e 61px,#00939e 69px,#00909e 77px,#008d9e 85px,#008a9e 93px,#00879e 101px,#00839e 109px,#02809e 117px,#087d9e 125px,#0f799e 133px,#16769e 141px,#1e729e 149px,#266f9e 157px,#2f6c9e 165px,#38689e 173px,#42649e 181px,#4c619e 189px,#575d9e 197px,#62599e 205px,#6d569e 213px,#79529e 221px,#854e9e 229px,#924a9e 237px,#9e469d 245px,#9e3d91 253px,#9e3586 261px,#9e2e7d 269px,#9e2874 277px,#9e236d 285px,#9e1e66 293px,#9e1a5f 301px,#9e165a 309px,#9e1255 317px,#9e0f50 325px,#9e0d4c 333px,#9e0a47 341px,#9e0844 349px,#9e0640 357px,#9e043d 365px,#9e023a 373px,#9e0137 381px,#9e0035 389px,#9e0032 397px,#9e0030 405px,#9e002e 413px,#9e002c 421px,#9e002a 429px,#9e0028 437px,#9e0027 445px,#9e0025 453px,#9e0024 461px,#9e0022 469px,#9e0021 477px,#9e001f 485px,#9e001e 493px,#9e001d 501px,#9e001c 509px,#9e001b 517px,#9e001a 525px,#9e0019 533px,#9e0018 541px,#9e0017 549px,#9e0016 557px,#9e0015 565px,#9e0015 573px,#9e0014 581px,#9e0013 589px,#9e0012 597px);"></div>
<div class="b" style="left:0;top:135px;width:618px;height:3px;background:linear-gradient(90deg,#009e9b 14px,#009e9e 22px,#009c9e 30px,#00999e 38px,#00969e 46px,#00939e 54px,#00909e 62px,#008d9e 70px,#008a9e 78px,#00879e 86px,#00849e 94px,#00809e 102px,#007d9e 110px,#027a9e 118px,#08779e 126px,#0e739e 134px,#15709e 142px,#1d6d9e 150px,#25699e 158px,#2e669e 166px,#37629e 174px,#405f9e 182px,#4a5b9e 190px,#54589e 198px,#5f549e 206px,#6a519e 214px,#754d9e 222px,#81499e 230px,#8d469e 238px,#99429e 246px,#9e3b96 254px,#9e338b 262px,#9e2c81 270px,#9e2679 278px,#9e2171 286px,#9e1c6a 294px,#9e1863 302px,#9e155d 310px,#9e1158 318px,#9e0e53 326px,#9e0b4e 334px,#9e094a 342px,#9e0747 350px,#9e0543 358px,#9e0340 366px,#9e023d 374px,#9e013a 382px,#9e0037 390px,#9e0035 398px,#9e0032 406px,#9e0030 414px,#9e002e 422px,#9e002c 430px,#9e002a 438px,#9e0028 446px,#9e0027 454px,#9e0025 462px,#9e0024 470px,#9e0022 478px,#9e0021 486px,#9e0020 494px,#9e001e 502px,#9e001d 510px,#9e001c 518px,#9e001b 526px,#9e001a 534px,#9e0019 542px,#9e0018 550px,#9e0017 558px,#9e0017 566px,#9e0016 574px,#9e0015 582px,#9e0014 590px);"></div>
<div class="b" style="left:0;top:138px;width:618px;height:3px;background:linear-gradient(90deg,#009b9e 15px,#00989e 23px,#00959e 31px,#00929e 39px,#00909e 47px,#008d9e 55px,#008a9e 63px,#00879e 71px,#00849e 79px,#00819e 87px,#007e9e 95px,#007b9e 103px,#00779e 111px,#02749e 119px,#07719e 127px,#0e6e9e 135px,#156b9e 143px,#1c679e 151px,#24649e 159px,#2c619e 167px,#355d9e 175px,#3e5a9e 183px,#48569e 191px,#51539e 199px,#5c4f9e 207px,#664c9e 215px,#71489e 223px,#7d459e 231px,#88419e 239px,#943d9e 247px,#9e399c 255px,#9e3190 263px,#9e2b86 271px,#9e257d 279px,#9e2075 287px,#9e1b6d 295px,#9e1767 303px,#9e1361 311px,#9e105b 319px,#9e0d56 327px,#9e0a51 335px,#9e084d 343px,#9e0649 351px,#9e0446 359px,#9e0342 367px,#9e013f 375px,#9e003c 383px,#9e0039 391px,#9e0037 399px,#9e0034 407px,#9e0032 415px,#9e0030 423px,#9e002e 431px,#9e002c 439px,#9e002a 447px,#9e0029 455px,#9e0027 463px,#9e0025 471px,#9e0024 479px,#9e0023 487px,#9e0021 495px,#9e0020 503px,#9e001f 511px,#9e001e 519px,#9e001d 527px,#9e001b 535px,#9e001a 543px,#9e001a 551px,#9e0019 559px,#9e0018 567px,#9e0017 575px,#9e0016 583px,#9e0015 591px);"></div>
<div class="b" style="left:0;top:141px;width:618px;height:3px;background:linear-gradient(90deg,#00949e 17px,#00929e 25px,#008f9e 33px,#008c9e 41px,#00899e 49px,#00869e 57px,#00849e 65px,#00819e 73px,#007e9e 81px,#007b9e 89px,#00789e 97px,#00759e 105px,#00729e 113px,#036e9e 121px,#086b9e 129px,#0e689e 137px,#15659e 145px,#1c629e 153px,#245f9e 161px,#2c5b9e 169px,#35589e 177px,#3d559e 185px,#47519e 193px,#504e9e 201px,#5a4a9e 209px,#64479e 217px,#6f449e 225px,#7a409e 233px,#853c9e 241px,#91399e 249px,#9d359e 257px,#9e2e94 265px,#9e2889 273px,#9e2280 281px,#9e1e78 289px,#9e1970 297px,#9e156a 305px,#9e1263 313px,#9e0f5e 321px,#9e0c59 329px,#9e0954 337px,#9e0750 345px,#9e054c 353px,#9e0348 361px,#9e0244 369px,#9e0141 377px,#9e003e 385px,#9e003b 393px,#9e0039 401px,#9e0036 409px,#9e0034 417px,#9e0032 425px,#9e0030 433px,#9e002e 441px,#9e002c 449px,#9e002a 457px,#9e0028 465px,#9e0027 473px,#9e0025 481px,#9e0024 489px,#9e0023 497px,#9e0021 505px,#9e0020 513px,#9e001f 521px,#9e001e 529px,#9e001d 537px,#9e001c 545px,#9e001b 553px,#9e001a 561px,#9e0019 569px,#9e0018 577px,#9e0017 585px);"></div>
<div class="b" style="left:0;top:144px;width:618px;height:3px;background:linear-gradient(90deg,#008f9e 18px,#008c9e 26px,#00899e 34px,#00879e 42px,#00849e 50px,#00819e 58px,#007e9e 66px,#007b9e 74px,#00789e 82px,#00759e 90px,#00729e 98px,#006f9e 106px,#006c9e 114px,#03699e 122px,#08669e 130px,#0e639e 138px,#14609e 146px,#1b5d9e 154px,#235a9e 162px,#2b579e 170px,#33539e 178px,#3c509e 186px,#454d9e 194px,#4e4a9e 202px,#57469e 210px,#61439e 218px,#6c3f9e 226px,#763c9e 234px,#81399e 242px,#8c359e 250px,#98329e 258px,#9e2d98 266px,#9e268e 274px,#9e2184 282px,#9e1c7c 290px,#9e1874 298px,#9e146d 306px,#9e1067 314px,#9e0d61 322px,#9e0b5c 330px,#9e0857 338px,#9e0652 346px,#9e044e 354px,#9e034a 362px,#9e0147 370px,#9e0044 378px,#9e0040 386px,#9e003e 394px,#9e003b 402px,#9e0038 410px,#9e0036 418px,#9e0034 426px,#9e0032 434px,#9e002f 442px,#9e002e 450px,#9e002c 458px,#9e002a 466px,#9e0028 474px,#9e0027 482px,#9e0025 490px,#9e0024 498px,#9e0023 506px,#9e0021 514px,#9e0020 522px,#9e001f 530px,#9e001e 538px,#9e001d 546px,#9e001c 554px,#9e001b 562px,#9e001a 570px,#9e0019 578px,#9e0018 586px);"></div>
<div class="b" style="left:0;top:147px;width:618px;height:3px;background:linear-gradient(90deg,#00899e 19px,#00879e 27px,#00849e 35px,#00819e 43px,#007e9e 51px,#007c9e 59px,#00799e 67px,#00769e 75px,#00739e 83px,#00709e 91px,#006d9e 99px,#006b9e 107px,#00689e 115px,#03659e 123px,#08629e 131px,#0e5f9e 139px,#145c9e 147px,#1b589e 155px,#22559e 163px,#2a529e 171px,#324f9e 179px,#3a4c9e 187px,#43499e 195px,#4c459e 203px,#55429e 211px,#5f3f9e 219px,#683c9e 227px,#73389e 235px,#7d359e 243px,#88329e 251px,#932e9e 259px,#9e2b9d 267px,#9e2592 275px,#9e1f89 283px,#9e1b80 291px,#9e1678 299px,#9e1371 307px,#9e0f6a 315px,#9e0c64 323px,#9e0a5f 331px,#9e075a 339px,#9e0555 347px,#9e0351 355px,#9e024d 363px,#9e0149 371px,#9e0046 379px,#9e0043 387px,#9e0040 395px,#9e003d 403px,#9e003a 411px,#9e0038 419px,#9e0036 427px,#9e0033 435px,#9e0031 443px,#9e002f 451px,#9e002e 459px,#9e002c 467px,#9e002a 475px,#9e0029 483px,#9e0027 491px,#9e0026 499px,#9e0024 507px,#9e0023 515px,#9e0022 523px,#9e0020 531px,#9e001f 539px,#9e001e 547px,#9e001d 555px,#9e001c 563px,#9e001b 571px,#9e001a 579px);"></div>
<div class="b" style="left:0;top:150px;width:618px;height:3px;background:linear-gradient(90deg,#00849e 20px,#00819e 28px,#007f9e 36px,#007c9e 44px,#00799e 52px,#00779e 60px,#00749e 68px,#00719e 76px,#006e9e 84px,#006c9e 92px,#00699e 100px,#00669e 108px,#00639e 116px,#03609e 124px,#085d9e 132px,#0d5a9e 140px,#13579e 148px,#1a549e 156px,#21519e 164px,#294e9e 172px,#304b9e 180px,#38489e 188px,#41459e 196px,#49429e 204px,#533e9e 212px,#5c3b9e 220px,#65389e 228px,#6f359e 236px,#7a329e 244px,#842e9e 252px,#8f2b9e 260px,#9a289e 268px,#9e2397 276px,#9e1e8d 284px,#9e1984 292px,#9e157c 300px,#9e1175 308px,#9e0e6e 316px,#9e0b68 324px,#9e0962 332px,#9e065d 340px,#9e0458 348px,#9e0354 356px,#9e0150 364px,#9e004c 372px,#9e0049 380px,#9e0045 388px,#9e0042 396px,#9e003f 404px,#9e003d 412px,#9e003a 420px,#9e0038 428px,#9e0035 436px,#9e0033 444px,#9e0031 452px,#9e002f 460px,#9e002e 468px,#9e002c 476px,#9e002a 484px,#9e0029 492px,#9e0027 500px,#9e0026 508px,#9e0024 516px,#9e0023 524px,#9e0022 532px,#9e0021 540px,#9e0020 548px,#9e001f 556px,#9e001d 564px,#9e001c 572px,#9e001c 580px);"></div>
<div class="b" style="left:0;top:153px;width:618px;height:3px;background:linear-gradient(90deg,#007f9e 21px,#007d9e 29px,#007a9e 37px,#00779e 45px,#00759e 53px,#00729e 61px,#006f9e 69px,#006d9e 77px,#006a9e 85px,#00679e 93px,#00649e 101px,#00619e 109px,#005f9e 117px,#035c9e 125px,#07599e 133px,#0d569e 141px,#13539e 149px,#19509e 157px,#204d9e 165px,#274a9e 173px,#2f479e 181px,#37449e 189px,#3f419e 197px,#473e9e 205px,#503b9e 213px,#59389e 221px,#63359e 229px,#6c319e 237px,#762e9e 245px,#802b9e 253px,#8b289e 261px,#96259e 269px,#9e219c 277px,#9e1c91 285px,#9e1888 293px,#9e1480 301px,#9e1078 309px,#9e0d71 317px,#9e0a6b 325px,#9e0865 333px,#9e0560 341px,#9e045b 349px,#9e0257 357px,#9e0153 365px,#9e004f 373px,#9e004b 381px,#9e0048 389px,#9e0044 397px,#9e0042 405px,#9e003f 413px,#9e003c 421px,#9e003a 429px,#9e0037 437px,#9e0035 445px,#9e0033 453px,#9e0031 461px,#9e002f 469px,#9e002d 477px,#9e002c 485px,#9e002a 493px,#9e0029 501px,#9e0027 509px,#9e0026 517px,#9e0025 525px,#9e0023 533px,#9e0022 541px,#9e0021 549px,#9e0020 557px,#9e001f 565px,#9e001e 573px);"></div>
<div class="b" style="left:0;top:156px;width:618px;height:3px;background:linear-gradient(90deg,#007a9e 23px,#00789e 31px,#00759e 39px,#00729e 47px,#00709e 55px,#006d9e 63px,#006a9e 71px,#00689e 79px,#00659e 87px,#00629e 95px,#00609e 103px,#005d9e 111px,#005a9e 119px,#03579e 127px,#08549e 135px,#0d529e 143px,#134f9e 151px,#1a4c9e 159px,#20499e 167px,#27469e 175px,#2f439e 183px,#36409e 191px,#3e3d9e 199px,#473a9e 207px,#4f379e 215px,#58349e 223px,#61319e 231px,#6a2e9e 239px,#742b9e 247px,#7e289e 255px,#88259e 263px,#93229e 271px,#9d1f9e 279px,#9e1a95 287px,#9e168b 295px,#9e1283 303px,#9e0e7b 311px,#9e0b74 319px,#9e096e 327px,#9e0668 335px,#9e0462 343px,#9e035e 351px,#9e0159 359px,#9e0055 367px,#9e0051 375px,#9e004d 383px,#9e004a 391px,#9e0046 399px,#9e0043 407px,#9e0041 415px,#9e003e 423px,#9e003b 431px,#9e0039 439px,#9e0037 447px,#9e0035 455px,#9e0033 463px,#9e0031 471px,#9e002f 479px,#9e002d 487px,#9e002c 495px,#9e002a 503px,#9e0029 511px,#9e0027 519px,#9e0026 527px,#9e0025 535px,#9e0023 543px,#9e0022 551px,#9e0021 559px,#9e0020 567px,#9e001f 575px);"></div>
<div class="b" style="left:0;top:159px;width:618px;height:3px;background:linear-gradient(90deg,#00769e 24px,#00739e 32px,#00719e 40px,#006e9e 48px,#006b9e 56px,#00699e 64px,#00669e 72px,#00649e 80px,#00619e 88px,#005e9e 96px,#005c9e 104px,#00599e 112px,#00569e 120px,#03539e 128px,#08519e 136px,#0d4e9e 144px,#134b9e 152px,#19489e 160px,#20459e 168px,#26429e 176px,#2e409e 184px,#353d9e 192px,#3d3a9e 200px,#45379e 208px,#4d349e 216px,#56319e 224px,#5e2e9e 232px,#672b9e 240px,#71289e 248px,#7a259e 256px,#84229e 264px,#8e1f9e 272px,#991c9e 280px,#9e1899 288px,#9e148f 296px,#9e1187 304px,#9e0d7f 312px,#9e0a78 320px,#9e0871 328px,#9e066b 336px,#9e0466 344px,#9e0260 352px,#9e015c 360px,#9e0057 368px,#9e0053 376px,#9e0050 384px,#9e004c 392px,#9e0049 400px,#9e0046 408px,#9e0043 416px,#9e0040 424px,#9e003d 432px,#9e003b 440px,#9e0039 448px,#9e0037 456px,#9e0034 464px,#9e0033 472px,#9e0031 480px,#9e002f 488px,#9e002d 496px,#9e002c 504px,#9e002a 512px,#9e0029 520px,#9e0027 528px,#9e0026 536px,#9e0025 544px,#9e0023 552px,#9e0022 560px,#9e0021 568px);"></div>
<div class="b" style="left:0;top:162px;width:618px;height:3px;background:linear-gradient(90deg,#00719e 26px,#006f9e 34px,#006c9e 42px,#00699e 50px,#00679e 58px,#00649e 66px,#00629e 74px,#005f9e 82px,#005d9e 90px,#005a9e 98px,#00579e 106px,#00559e 114px,#00529e 122px,#044f9e 130px,#084d9e 138px,#0d4a9e 146px,#13479e 154px,#19449e 162px,#20429e 170px,#263f9e 178px,#2d3c9e 186px,#35399e 194px,#3c369e 202px,#44339e 210px,#4c319e 218px,#542e9e 226px,#5d2b9e 234px,#66289e 242px,#6f259e 250px,#78229e 258px,#821f9e 266px,#8c1c9e 274px,#961a9e 282px,#9e169c 290px,#9e1292 298px,#9e0f89 306px,#9e0c82 314px,#9e097a 322px,#9e0674 330px,#9e046e 338px,#9e0368 346px,#9e0163 354px,#9e005e 362px,#9e005a 370px,#9e0055 378px,#9e0052 386px,#9e004e 394px,#9e004b 402px,#9e0048 410px,#9e0045 418px,#9e0042 426px,#9e003f 434px,#9e003d 442px,#9e003a 450px,#9e0038 458px,#9e0036 466px,#9e0034 474px,#9e0032 482px,#9e0030 490px,#9e002f 498px,#9e002d 506px,#9e002b 514px,#9e002a 522px,#9e0029 530px,#9e0027 538px,#9e0026 546px,#9e0025 554px,#9e0023 562px,#9e0022 570px);"></div>
<div class="b" style="left:0;top:165px;width:618px;height:3px;background:linear-gradient(90deg,#006d9e 27px,#006a9e 35px,#00689e 43px,#00669e 51px,#00639e 59px,#00619e 67px,#005e9e 75px,#005b9e 83px,#00599e 91px,#00569e 99px,#00549e 107px,#00519e 115px,#004e9e 123px,#034c9e 131px,#08499e 139px,#0d479e 147px,#13449e 155px,#19419e 163px,#1f3e9e 171px,#253c9e 179px,#2c399e 187px,#33369e 195px,#3b339e 203px,#42319e 211px,#4a2e9e 219px,#522b9e 227px,#5b289e 235px,#63259e 243px,#6c239e 251px,#75209e 259px,#7e1d9e 267px,#881a9e 275px,#92179e 283px,#9c159e 291px,#9e1196 299px,#9e0e8d 307px,#9e0b85 315px,#9e087e 323px,#9e0677 331px,#9e0371 339px,#9e026b 347px,#9e0066 355px,#9e0061 363px,#9e005c 371px,#9e0058 379px,#9e0054 387px,#9e0050 395px,#9e004d 403px,#9e004a 411px,#9e0047 419px,#9e0044 427px,#9e0041 435px,#9e003f 443px,#9e003c 451px,#9e003a 459px,#9e0038 467px,#9e0036 475px,#9e0034 483px,#9e0032 491px,#9e0030 499px,#9e002f 507px,#9e002d 515px,#9e002b 523px,#9e002a 531px,#9e0029 539px,#9e0027 547px,#9e0026 555px,#9e0025 563px);"></div>
<div class="b" style="left:0;top:168px;width:618px;height:3px;background:linear-gradient(90deg,#00699e 28px,#00679e 36px,#00649e 44px,#00629e 52px,#005f9e 60px,#005d9e 68px,#005a9e 76px,#00589e 84px,#00559e 92px,#00539e 100px,#00509e 108px,#004e9e 116px,#004b9e 124px,#03489e 132px,#08469e 140px,#0d439e 148px,#12419e 156px,#183e9e 164px,#1e3b9e 172px,#25399e 180px,#2b369e 188px,#32339e 196px,#39319e 204px,#412e9e 212px,#482b9e 220px,#50289e 228px,#58269e 236px,#61239e 244px,#69209e 252px,#721d9e 260px,#7b1b9e 268px,#84189e 276px,#8e159e 284px,#98139e 292px,#9e109b 300px,#9e0c91 308px,#9e0989 316px,#9e0781 324px,#9e057a 332px,#9e0374 340px,#9e016e 348px,#9e0069 356px,#9e0064 364px,#9e005f 372px,#9e005b 380px,#9e0057 388px,#9e0053 396px,#9e004f 404px,#9e004c 412px,#9e0049 420px,#9e0046 428px,#9e0043 436px,#9e0041 444px,#9e003e 452px,#9e003c 460px,#9e003a 468px,#9e0038 476px,#9e0036 484px,#9e0034 492px,#9e0032 500px,#9e0030 508px,#9e002f 516px,#9e002d 524px,#9e002b 532px,#9e002a 540px,#9e0029 548px,#9e0027 556px,#9e0026 564px);"></div>
<div class="b" style="left:0;top:171px;width:618px;height:3px;background:linear-gradient(90deg,#00659e 30px,#00639e 38px,#00609e 46px,#005e9e 54px,#005b9e 62px,#00599e 70px,#00569e 78px,#00549e 86px,#00529e 94px,#004f9e 102px,#004d9e 110px,#004a9e 118px,#00489e 126px,#04459e 134px,#08429e 142px,#0d409e 150px,#133d9e 158px,#183b9e 166px,#1e389e 174px,#25359e 182px,#2b339e 190px,#32309e 198px,#392e9e 206px,#402b9e 214px,#48289e 222px,#4f269e 230px,#57239e 238px,#5f209e 246px,#681e9e 254px,#701b9e 262px,#79189e 270px,#82169e 278px,#8b139e 286px,#95109e 294px,#9e0e9d 302px,#9e0b94 310px,#9e088c 318px,#9e0684 326px,#9e037d 334px,#9e0276 342px,#9e0071 350px,#9e006b 358px,#9e0066 366px,#9e0061 374px,#9e005d 382px,#9e0059 390px,#9e0055 398px,#9e0051 406px,#9e004e 414px,#9e004b 422px,#9e0048 430px,#9e0045 438px,#9e0042 446px,#9e0040 454px,#9e003d 462px,#9e003b 470px,#9e0039 478px,#9e0037 486px,#9e0035 494px,#9e0033 502px,#9e0032 510px,#9e0030 518px,#9e002e 526px,#9e002d 534px,#9e002b 542px,#9e002a 550px,#9e0029 558px);"></div>
<div class="b" style="left:0;top:174px;width:618px;height:3px;background:linear-gradient(90deg,#00619e 31px,#005f9e 39px,#005d9e 47px,#005a9e 55px,#00589e 63px,#00569e 71px,#00539e 79px,#00519e 87px,#004e9e 95px,#004c9e 103px,#00499e 111px,#00479e 119px,#00449e 127px,#04429e 135px,#083f9e 143px,#0d3d9e 151px,#123a9e 159px,#18389e 167px,#1e359e 175px,#24339e 183px,#2a309e 191px,#312e9e 199px,#372b9e 207px,#3f289e 215px,#46269e 223px,#4d239e 231px,#55219e 239px,#5d1e9e 247px,#651b9e 255px,#6e199e 263px,#76169e 271px,#7f149e 279px,#88119e 287px,#910f9e 295px,#9b0c9e 303px,#9e0a98 311px,#9e078f 319px,#9e0588 327px,#9e0380 335px,#9e017a 343px,#9e0074 351px,#9e006e 359px,#9e0069 367px,#9e0064 375px,#9e005f 383px,#9e005b 391px,#9e0057 399px,#9e0054 407px,#9e0050 415px,#9e004d 423px,#9e004a 431px,#9e0047 439px,#9e0044 447px,#9e0042 455px,#9e003f 463px,#9e003d 471px,#9e003b 479px,#9e0039 487px,#9e0037 495px,#9e0035 503px,#9e0033 511px,#9e0031 519px,#9e0030 527px,#9e002e 535px,#9e002d 543px,#9e002b 551px,#9e002a 559px);"></div>
<div class="b" style="left:0;top:177px;width:618px;height:3px;background:linear-gradient(90deg,#005e9e 32px,#005c9e 40px,#00599e 48px,#00579e 56px,#00559e 64px,#00529e 72px,#00509e 80px,#004e9e 88px,#004b9e 96px,#00499e 104px,#00469e 112px,#00449e 120px,#00419e 128px,#043f9e 136px,#083d9e 144px,#0d3a9e 152px,#12389e 160px,#17359e 168px,#1d339e 176px,#23309e 184px,#292e9e 192px,#302b9e 200px,#36299e 208px,#3d269e 216px,#44249e 224px,#4c219e 232px,#531f9e 240px,#5b1c9e 248px,#63199e 256px,#6b179e 264px,#73149e 272px,#7c129e 280px,#85109e 288px,#8e0d9e 296px,#970b9e 304px,#9e089c 312px,#9e0693 320px,#9e048b 328px,#9e0284 336px,#9e007d 344px,#9e0077 352px,#9e0071 360px,#9e006c 368px,#9e0067 376px,#9e0062 384px,#9e005e 392px,#9e005a 400px,#9e0056 408px,#9e0052 416px,#9e004f 424px,#9e004c 432px,#9e0049 440px,#9e0046 448px,#9e0044 456px,#9e0041 464px,#9e003f 472px,#9e003d 480px,#9e003a 488px,#9e0038 496px,#9e0037 504px,#9e0035 512px,#9e0033 520px,#9e0031 528px,#9e0030 536px,#9e002e 544px,#9e002d 552px);"></div>
<div class="b" style="left:0;top:180px;width:618px;height:3px;background:linear-gradient(90deg,#005a9e 34px,#00589e 42px,#00569e 50px,#00539e 58px,#00519e 66px,#004f9e 74px,#004d9e 82px,#004a9e 90px,#00489e 98px,#00459e 106px,#00439e 114px,#00419e 122px,#013e9e 130px,#043c9e 138px,#083a9e 146px,#0d379e 154px,#12359e 162px,#17329e 170px,#1d309e 178px,#232d9e 186px,#292b9e 194px,#2f289e 202px,#36269e 210px,#3d249e 218px,#44219e 226px,#4b1f9e 234px,#521c9e 242px,#5a1a9e 250px,#61179e 258px,#69159e 266px,#72129e 274px,#7a109e 282px,#820e9e 290px,#8b0b9e 298px,#94099e 306px,#9d079e 314px,#9e0596 322px,#9e038e 330px,#9e0186 338px,#9e007f 346px,#9e0079 354px,#9e0073 362px,#9e006e 370px,#9e0069 378px,#9e0064 386px,#9e0060 394px,#9e005c 402px,#9e0058 410px,#9e0054 418px,#9e0051 426px,#9e004e 434px,#9e004b 442px,#9e0048 450px,#9e0045 458px,#9e0043 466px,#9e0040 474px,#9e003e 482px,#9e003c 490px,#9e003a 498px,#9e0038 506px,#9e0036 514px,#9e0034 522px,#9e0033 530px,#9e0031 538px,#9e002f 546px);"></div>
<div class="b" style="left:0;top:183px;width:618px;height:3px;background:linear-gradient(90deg,#00579e 35px,#00559e 43px,#00539e 51px,#00509e 59px,#004e9e 67px,#004c9e 75px,#004a9e 83px,#00479e 91px,#00459e 99px,#00439e 107px,#00409e 115px,#003e9e 123px,#013c9e 131px,#04399e 139px,#08379e 147px,#0d359e 155px,#12329e 163px,#17309e 171px,#1c2d9e 179px,#222b9e 187px,#28299e 195px,#2e269e 203px,#35249e 211px,#3b219e 219px,#421f9e 227px,#491d9e 235px,#501a9e 243px,#58189e 251px,#5f159e 259px,#67139e 267px,#6f119e 275px,#770e9e 283px,#7f0c9e 291px,#880a9e 299px,#91089e 307px,#9a069e 315px,#9e049a 323px,#9e0291 331px,#9e008a 339px,#9e0083 347px,#9e007c 355px,#9e0076 363px,#9e0071 371px,#9e006c 379px,#9e0067 387px,#9e0062 395px,#9e005e 403px,#9e005a 411px,#9e0057 419px,#9e0053 427px,#9e0050 435px,#9e004d 443px,#9e004a 451px,#9e0047 459px,#9e0045 467px,#9e0042 475px,#9e0040 483px,#9e003e 491px,#9e003c 499px,#9e003a 507px,#9e0038 515px,#9e0036 523px,#9e0034 531px,#9e0032 539px,#9e0031 547px);"></div>
<div class="b" style="left:0;top:186px;width:618px;height:3px;background:linear-gradient(90deg,#00549e 36px,#00529e 44px,#00509e 52px,#004d9e 60px,#004b9e 68px,#00499e 76px,#00479e 84px,#00449e 92px,#00429e 100px,#00409e 108px,#003e9e 116px,#003b9e 124px,#01399e 132px,#04379e 140px,#08349e 148px,#0d329e 156px,#11309e 164px,#172d9e 172px,#1c2b9e 180px,#21299e 188px,#27269e 196px,#2d249e 204px,#34229e 212px,#3a1f9e 220px,#411d9e 228px,#471b9e 236px,#4e189e 244px,#56169e 252px,#5d149e 260px,#65119e 268px,#6c0f9e 276px,#740d9e 284px,#7c0b9e 292px,#85099e 300px,#8d079e 308px,#96059e 316px,#9e039d 324px,#9e0195 332px,#9e008d 340px,#9e0086 348px,#9e007f 356px,#9e0079 364px,#9e0074 372px,#9e006e 380px,#9e0069 388px,#9e0065 396px,#9e0061 404px,#9e005d 412px,#9e0059 420px,#9e0055 428px,#9e0052 436px,#9e004f 444px,#9e004c 452px,#9e0049 460px,#9e0047 468px,#9e0044 476px,#9e0042 484px,#9e003f 492px,#9e003d 500px,#9e003b 508px,#9e0039 516px,#9e0037 524px,#9e0036 532px,#9e0034 540px);"></div>
<div class="b" style="left:0;top:189px;width:618px;height:3px;background:linear-gradient(90deg,#00519e 38px,#004f9e 46px,#004c9e 54px,#004a9e 62px,#00489e 70px,#00469e 78px,#00449e 86px,#00429e 94px,#003f9e 102px,#003d9e 110px,#003b9e 118px,#00399e 126px,#01369e 134px,#05349e 142px,#09329e 150px,#0d309e 158px,#122d9e 166px,#172b9e 174px,#1c299e 182px,#21269e 190px,#27249e 198px,#2d229e 206px,#33209e 214px,#3a1d9e 222px,#401b9e 230px,#47199e 238px,#4e169e 246px,#55149e 254px,#5c129e 262px,#63109e 270px,#6b0d9e 278px,#730b9e 286px,#7b099e 294px,#83079e 302px,#8b059e 310px,#94039e 318px,#9c029e 326px,#9e0097 334px,#9e0090 342px,#9e0088 350px,#9e0082 358px,#9e007c 366px,#9e0076 374px,#9e0071 382px,#9e006c 390px,#9e0067 398px,#9e0063 406px,#9e005f 414px,#9e005b 422px,#9e0057 430px,#9e0054 438px,#9e0051 446px,#9e004e 454px,#9e004b 462px,#9e0048 470px,#9e0046 478px,#9e0043 486px,#9e0041 494px,#9e003f 502px,#9e003d 510px,#9e003b 518px,#9e0039 526px,#9e0037 534px,#9e0035 542px);"></div>
<div class="b" style="left:0;top:192px;width:618px;height:3px;background:linear-gradient(90deg,#004e9e 39px,#004c9e 47px,#004a9e 55px,#00489e 63px,#00459e 71px,#00439e 79px,#00419e 87px,#003f9e 95px,#003d9e 103px,#003b9e 111px,#00389e 119px,#00369e 127px,#01349e 135px,#04329e 143px,#08309e 151px,#0d2d9e 159px,#112b9e 167px,#16299e 175px,#1b279e 183px,#21249e 191px,#26229e 199px,#2c209e 207px,#321e9e 215px,#381b9e 223px,#3f199e 231px,#45179e 239px,#4c159e 247px,#53139e 255px,#5a109e 263px,#610e9e 271px,#690c9e 279px,#700a9e 287px,#78089e 295px,#80069e 303px,#88049e 311px,#90029e 319px,#99019e 327px,#9e009b 335px,#9e0093 343px,#9e008c 351px,#9e0085 359px,#9e007f 367px,#9e0079 375px,#9e0073 383px,#9e006e 391px,#9e006a 399px,#9e0065 407px,#9e0061 415px,#9e005d 423px,#9e0059 431px,#9e0056 439px,#9e0053 447px,#9e0050 455px,#9e004d 463px,#9e004a 471px,#9e0048 479px,#9e0045 487px,#9e0043 495px,#9e0040 503px,#9e003e 511px,#9e003c 519px,#9e003a 527px,#9e0039 535px);"></div>
<div class="b" style="left:0;top:195px;width:618px;height:3px;background:linear-gradient(90deg,#004b9e 41px,#00499e 49px,#00479e 57px,#00459e 65px,#00439e 73px,#00409e 81px,#003e9e 89px,#003c9e 97px,#003a9e 105px,#00389e 113px,#00369e 121px,#00349e 129px,#01319e 137px,#052f9e 145px,#092d9e 153px,#0d2b9e 161px,#12299e 169px,#17279e 177px,#1c249e 185px,#21229e 193px,#26209e 201px,#2c1e9e 209px,#321c9e 217px,#38199e 225px,#3e179e 233px,#45159e 241px,#4b139e 249px,#52119e 257px,#590f9e 265px,#600d9e 273px,#670b9e 281px,#6f099e 289px,#76079e 297px,#7e059e 305px,#86039e 313px,#8e019e 321px,#96009e 329px,#9e009e 337px,#9e0095 345px,#9e008e 353px,#9e0087 361px,#9e0081 369px,#9e007b 377px,#9e0075 385px,#9e0070 393px,#9e006c 401px,#9e0067 409px,#9e0063 417px,#9e005f 425px,#9e005b 433px,#9e0058 441px,#9e0055 449px,#9e0051 457px,#9e004e 465px,#9e004c 473px,#9e0049 481px,#9e0047 489px,#9e0044 497px,#9e0042 505px,#9e0040 513px,#9e003e 521px,#9e003c 529px,#9e003a 537px);"></div>
<div class="b" style="left:0;top:198px;width:618px;height:3px;background:linear-gradient(90deg,#00489e 42px,#00469e 50px,#00449e 58px,#00429e 66px,#00409e 74px,#003e9e 82px,#003c9e 90px,#003a9e 98px,#00389e 106px,#00369e 114px,#00349e 122px,#00319e 130px,#012f9e 138px,#052d9e 146px,#092b9e 154px,#0d299e 162px,#11279e 170px,#16259e 178px,#1b229e 186px,#20209e 194px,#261e9e 202px,#2b1c9e 210px,#311a9e 218px,#37189e 226px,#3d169e 234px,#43149e 242px,#4a119e 250px,#500f9e 258px,#570d9e 266px,#5e0b9e 274px,#65099e 282px,#6c079e 290px,#74069e 298px,#7b049e 306px,#83029e 314px,#8b019e 322px,#93009e 330px,#9b009e 338px,#9e0099 346px,#9e0091 354px,#9e008a 362px,#9e0084 370px,#9e007e 378px,#9e0078 386px,#9e0073 394px,#9e006e 402px,#9e006a 410px,#9e0065 418px,#9e0061 426px,#9e005e 434px,#9e005a 442px,#9e0057 450px,#9e0053 458px,#9e0050 466px,#9e004e 474px,#9e004b 482px,#9e0048 490px,#9e0046 498px,#9e0044 506px,#9e0041 514px,#9e003f 522px,#9e003d 530px);"></div>
<div class="b" style="left:0;top:201px;width:618px;height:3px;background:linear-gradient(90deg,#00469e 44px,#00449e 52px,#00429e 60px,#00409e 68px,#003d9e 76px,#003b9e 84px,#00399e 92px,#00379e 100px,#00359e 108px,#00339e 116px,#00319e 124px,#002f9e 132px,#022d9e 140px,#052b9e 148px,#09299e 156px,#0d279e 164px,#12259e 172px,#16229e 180px,#1b209e 188px,#201e9e 196px,#261c9e 204px,#2b1a9e 212px,#31189e 220px,#36169e 228px,#3c149e 236px,#43129e 244px,#49109e 252px,#4f0e9e 260px,#560c9e 268px,#5d0a9e 276px,#64089e 284px,#6b069e 292px,#72049e 300px,#7a039e 308px,#81019e 316px,#89009e 324px,#91009e 332px,#99009e 340px,#9e009b 348px,#9e0094 356px,#9e008d 364px,#9e0086 372px,#9e0080 380px,#9e007a 388px,#9e0075 396px,#9e0070 404px,#9e006b 412px,#9e0067 420px,#9e0063 428px,#9e005f 436px,#9e005c 444px,#9e0058 452px,#9e0055 460px,#9e0052 468px,#9e004f 476px,#9e004c 484px,#9e004a 492px,#9e0047 500px,#9e0045 508px,#9e0043 516px,#9e0041 524px,#9e003f 532px);"></div>
<div class="b" style="left:0;top:204px;width:618px;height:3px;background:linear-gradient(90deg,#00439e 45px,#00419e 53px,#003f9e 61px,#003d9e 69px,#003b9e 77px,#00399e 85px,#00379e 93px,#00359e 101px,#00339e 109px,#00319e 117px,#002f9e 125px,#002d9e 133px,#022b9e 141px,#05299e 149px,#09279e 157px,#0d259e 165px,#11239e 173px,#16219e 181px,#1b1f9e 189px,#201d9e 197px,#251a9e 205px,#2a189e 213px,#30169e 221px,#35149e 229px,#3b129e 237px,#41109e 245px,#470e9e 253px,#4e0c9e 261px,#540b9e 269px,#5b099e 277px,#62079e 285px,#69059e 293px,#70039e 301px,#77029e 309px,#7e009e 317px,#86009e 325px,#8e009e 333px,#95009e 341px,#9d009e 349px,#9e0097 357px,#9e0090 365px,#9e0089 373px,#9e0083 381px,#9e007d 389px,#9e0078 397px,#9e0073 405px,#9e006e 413px,#9e006a 421px,#9e0065 429px,#9e0062 437px,#9e005e 445px,#9e005a 453px,#9e0057 461px,#9e0054 469px,#9e0051 477px,#9e004e 485px,#9e004c 493px,#9e0049 501px,#9e0047 509px,#9e0045 517px,#9e0042 525px);"></div>
<div class="b" style="left:0;top:207px;width:618px;height:3px;background:linear-gradient(90deg,#00419e 47px,#003f9e 55px,#003d9e 63px,#003b9e 71px,#00399e 79px,#00379e 87px,#00359e 95px,#00339e 103px,#00319e 111px,#002f9e 119px,#002d9e 127px,#002b9e 135px,#02299e 143px,#06279e 151px,#09259e 159px,#0d239e 167px,#12219e 175px,#161f9e 183px,#1b1d9e 191px,#201b9e 199px,#25199e 207px,#2a179e 215px,#30159e 223px,#35139e 231px,#3b119e 239px,#410f9e 247px,#470d9e 255px,#4d0b9e 263px,#53099e 271px,#5a079e 279px,#61069e 287px,#67049e 295px,#6e029e 303px,#75019e 311px,#7d009e 319px,#84009e 327px,#8c009e 335px,#93009e 343px,#9b009e 351px,#9e0099 359px,#9e0092 367px,#9e008b 375px,#9e0085 383px,#9e007f 391px,#9e007a 399px,#9e0075 407px,#9e0070 415px,#9e006b 423px,#9e0067 431px,#9e0063 439px,#9e0060 447px,#9e005c 455px,#9e0059 463px,#9e0056 471px,#9e0053 479px,#9e0050 487px,#9e004d 495px,#9e004b 503px,#9e0048 511px,#9e0046 519px,#9e0044 527px);"></div>
<div class="b" style="left:0;top:210px;width:618px;height:3px;background:linear-gradient(90deg,#003e9e 48px,#003c9e 56px,#003a9e 64px,#00399e 72px,#00379e 80px,#00359e 88px,#00339e 96px,#00319e 104px,#002f9e 112px,#002d9e 120px,#002b9e 128px,#00299e 136px,#02279e 144px,#05259e 152px,#09239e 160px,#0d219e 168px,#111f9e 176px,#161d9e 184px,#1a1b9e 192px,#1f199e 200px,#24179e 208px,#29159e 216px,#2f139e 224px,#34119e 232px,#3a0f9e 240px,#400e9e 248px,#450c9e 256px,#4c0a9e 264px,#52089e 272px,#58069e 280px,#5f059e 288px,#65039e 296px,#6c029e 304px,#73009e 312px,#7a009e 320px,#81009e 328px,#89009e 336px,#90009e 344px,#98009e 352px,#9e009d 360px,#9e0095 368px,#9e008e 376px,#9e0088 384px,#9e0082 392px,#9e007c 400px,#9e0077 408px,#9e0072 416px,#9e006e 424px,#9e006a 432px,#9e0066 440px,#9e0062 448px,#9e005e 456px,#9e005b 464px,#9e0058 472px,#9e0055 480px,#9e0052 488px,#9e004f 496px,#9e004c 504px,#9e004a 512px,#9e0048 520px);"></div>
<div class="b" style="left:0;top:213px;width:618px;height:3px;background:linear-gradient(90deg,#003c9e 50px,#003a9e 58px,#00389e 66px,#00369e 74px,#00349e 82px,#00329e 90px,#00309e 98px,#002f9e 106px,#002d9e 114px,#002b9e 122px,#00299e 130px,#00279e 138px,#03259e 146px,#06239e 154px,#09219e 162px,#0d1f9e 170px,#121d9e 178px,#161b9e 186px,#1a199e 194px,#1f179e 202px,#24159e 210px,#29149e 218px,#2e129e 226px,#34109e 234px,#390e9e 242px,#3f0c9e 250px,#450a9e 258px,#4b099e 266px,#51079e 274px,#57059e 282px,#5e049e 290px,#64029e 298px,#6b019e 306px,#72009e 314px,#79009e 322px,#80009e 330px,#87009e 338px,#8e009e 346px,#96009e 354px,#9d009e 362px,#9e0097 370px,#9e0090 378px,#9e008a 386px,#9e0084 394px,#9e007e 402px,#9e0079 410px,#9e0074 418px,#9e0070 426px,#9e006b 434px,#9e0067 442px,#9e0064 450px,#9e0060 458px,#9e005d 466px,#9e0059 474px,#9e0056 482px,#9e0053 490px,#9e0051 498px,#9e004e 506px,#9e004b 514px);"></div>
<div class="b" style="left:0;top:216px;width:618px;height:3px;background:linear-gradient(90deg,#003a9e 51px,#00389e 59px,#00369e 67px,#00349e 75px,#00329e 83px,#00309e 91px,#002f9e 99px,#002d9e 107px,#002b9e 115px,#00299e 123px,#00279e 131px,#00259e 139px,#03239e 147px,#06219e 155px,#091f9e 163px,#0d1e9e 171px,#111c9e 179px,#161a9e 187px,#1a189e 195px,#1f169e 203px,#24149e 211px,#28129e 219px,#2e109e 227px,#330f9e 235px,#380d9e 243px,#3e0b9e 251px,#44099e 259px,#49089e 267px,#4f069e 275px,#56049e 283px,#5c039e 291px,#62019e 299px,#69009e 307px,#6f009e 315px,#76009e 323px,#7d009e 331px,#84009e 339px,#8b009e 347px,#93009e 355px,#9a009e 363px,#9e009a 371px,#9e0093 379px,#9e008d 387px,#9e0087 395px,#9e0081 403px,#9e007c 411px,#9e0077 419px,#9e0072 427px,#9e006e 435px,#9e006a 443px,#9e0066 451px,#9e0062 459px,#9e005f 467px,#9e005b 475px,#9e0058 483px,#9e0055 491px,#9e0052 499px,#9e0050 507px,#9e004d 515px);"></div>
<div class="b" style="left:0;top:219px;width:618px;height:3px;background:linear-gradient(90deg,#00389e 53px,#00369e 61px,#00349e 69px,#00329e 77px,#00309e 85px,#002e9e 93px,#002d9e 101px,#002b9e 109px,#00299e 117px,#00279e 125px,#00259e 133px,#00239e 141px,#03219e 149px,#061f9e 157px,#0a1e9e 165px,#0d1c9e 173px,#111a9e 181px,#16189e 189px,#1a169e 197px,#1f149e 205px,#23139e 213px,#28119e 221px,#2d0f9e 229px,#330d9e 237px,#380b9e 245px,#3d0a9e 253px,#43089e 261px,#49069e 269px,#4f059e 277px,#55039e 285px,#5b029e 293px,#61019e 301px,#68009e 309px,#6e009e 317px,#75009e 325px,#7c009e 333px,#82009e 341px,#8a009e 349px,#91009e 357px,#98009e 365px,#9e009d 373px,#9e0096 381px,#9e008f 389px,#9e0089 397px,#9e0083 405px,#9e007e 413px,#9e0079 421px,#9e0074 429px,#9e0070 437px,#9e006b 445px,#9e0067 453px,#9e0064 461px,#9e0060 469px,#9e005d 477px,#9e005a 485px,#9e0057 493px,#9e0054 501px,#9e0051 509px);"></div>
<div class="b" style="left:0;top:222px;width:618px;height:3px;background:linear-gradient(90deg,#00369e 54px,#00349e 62px,#00329e 70px,#00309e 78px,#002e9e 86px,#002d9e 94px,#002b9e 102px,#00299e 110px,#00279e 118px,#00259e 126px,#00239e 134px,#00229e 142px,#03209e 150px,#061e9e 158px,#091c9e 166px,#0d1a9e 174px,#11189e 182px,#15179e 190px,#1a159e 198px,#1e139e 206px,#23119e 214px,#28109e 222px,#2d0e9e 230px,#320c9e 238px,#370a9e 246px,#3c099e 254px,#42079e 262px,#48059e 270px,#4d049e 278px,#53029e 286px,#59019e 294px,#5f009e 302px,#66009e 310px,#6c009e 318px,#73009e 326px,#79009e 334px,#80009e 342px,#87009e 350px,#8e009e 358px,#95009e 366px,#9c009e 374px,#9e0099 382px,#9e0092 390px,#9e008c 398px,#9e0086 406px,#9e0080 414px,#9e007b 422px,#9e0076 430px,#9e0072 438px,#9e006e 446px,#9e006a 454px,#9e0066 462px,#9e0062 470px,#9e005f 478px,#9e005c 486px,#9e0059 494px,#9e0056 502px,#9e0053 510px);"></div>
<div class="b" style="left:0;top:225px;width:618px;height:3px;background:linear-gradient(90deg,#00349e 56px,#00329e 64px,#00309e 72px,#002e9e 80px,#002c9e 88px,#002b9e 96px,#00299e 104px,#00279e 112px,#00259e 120px,#00239e 128px,#00229e 136px,#01209e 144px,#031e9e 152px,#061c9e 160px,#0a1a9e 168px,#0e199e 176px,#11179e 184px,#16159e 192px,#1a139e 200px,#1e129e 208px,#23109e 216px,#280e9e 224px,#2d0c9e 232px,#320b9e 240px,#37099e 248px,#3c089e 256px,#41069e 264px,#47049e 272px,#4d039e 280px,#52029e 288px,#58009e 296px,#5e009e 304px,#65009e 312px,#6b009e 320px,#71009e 328px,#78009e 336px,#7e009e 344px,#85009e 352px,#8c009e 360px,#93009e 368px,#9a009e 376px,#9e009b 384px,#9e0094 392px,#9e008e 400px,#9e0088 408px,#9e0082 416px,#9e007d 424px,#9e0078 432px,#9e0074 440px,#9e006f 448px,#9e006b 456px,#9e0068 464px,#9e0064 472px,#9e0060 480px,#9e005d 488px,#9e005a 496px,#9e0057 504px);"></div>
<div class="b" style="left:0;top:228px;width:618px;height:3px;background:linear-gradient(90deg,#00329e 57px,#00309e 65px,#002e9e 73px,#002c9e 81px,#002b9e 89px,#00299e 97px,#00279e 105px,#00259e 113px,#00249e 121px,#00229e 129px,#00209e 137px,#011e9e 145px,#031d9e 153px,#061b9e 161px,#0a199e 169px,#0d179e 177px,#11169e 185px,#15149e 193px,#19129e 201px,#1e109e 209px,#220f9e 217px,#270d9e 225px,#2c0b9e 233px,#310a9e 241px,#36089e 249px,#3b079e 257px,#40059e 265px,#46049e 273px,#4b029e 281px,#51019e 289px,#57009e 297px,#5d009e 305px,#63009e 313px,#69009e 321px,#6f009e 329px,#76009e 337px,#7c009e 345px,#83009e 353px,#89009e 361px,#90009e 369px,#97009e 377px,#9e009e 385px,#9e0097 393px,#9e0090 401px,#9e008a 409px,#9e0085 417px,#9e0080 425px,#9e007b 433px,#9e0076 441px,#9e0072 449px,#9e006e 457px,#9e006a 465px,#9e0066 473px,#9e0063 481px,#9e005f 489px,#9e005c 497px,#9e0059 505px);"></div>
<div class="b" style="left:0;top:231px;width:618px;height:3px;background:linear-gradient(90deg,#00309e 59px,#002e9e 67px,#002c9e 75px,#002b9e 83px,#00299e 91px,#00279e 99px,#00259e 107px,#00249e 115px,#00229e 123px,#00209e 131px,#001e9e 139px,#011d9e 147px,#041b9e 155px,#07199e 163px,#0a189e 171px,#0e169e 179px,#11149e 187px,#15129e 195px,#1a119e 203px,#1e0f9e 211px,#220d9e 219px,#270c9e 227px,#2c0a9e 235px,#30099e 243px,#35079e 251px,#3b069e 259px,#40049e 267px,#45039e 275px,#4b019e 283px,#50009e 291px,#56009e 299px,#5c009e 307px,#62009e 315px,#68009e 323px,#6e009e 331px,#74009e 339px,#7b009e 347px,#81009e 355px,#88009e 363px,#8e009e 371px,#95009e 379px,#9c009e 387px,#9e0099 395px,#9e0092 403px,#9e008c 411px,#9e0087 419px,#9e0081 427px,#9e007d 435px,#9e0078 443px,#9e0073 451px,#9e006f 459px,#9e006b 467px,#9e0068 475px,#9e0064 483px,#9e0061 491px,#9e005e 499px);"></div>
<div class="b" style="left:0;top:234px;width:618px;height:3px;background:linear-gradient(90deg,#002e9e 61px,#002c9e 69px,#002a9e 77px,#00299e 85px,#00279e 93px,#00259e 101px,#00249e 109px,#00229e 117px,#00209e 125px,#001f9e 133px,#001d9e 141px,#011b9e 149px,#04199e 157px,#07189e 165px,#0a169e 173px,#0e149e 181px,#12139e 189px,#16119e 197px,#1a0f9e 205px,#1e0e9e 213px,#220c9e 221px,#270b9e 229px,#2c099e 237px,#30079e 245px,#35069e 253px,#3a059e 261px,#3f039e 269px,#45029e 277px,#4a019e 285px,#50009e 293px,#55009e 301px,#5b009e 309px,#61009e 317px,#67009e 325px,#6d009e 333px,#73009e 341px,#79009e 349px,#80009e 357px,#86009e 365px,#8d009e 373px,#93009e 381px,#9a009e 389px,#9e009b 397px,#9e0094 405px,#9e008e 413px,#9e0089 421px,#9e0083 429px,#9e007e 437px,#9e007a 445px,#9e0075 453px,#9e0071 461px,#9e006d 469px,#9e0069 477px,#9e0066 485px,#9e0062 493px,#9e005f 501px);"></div>
<div class="b" style="left:0;top:237px;width:618px;height:3px;background:linear-gradient(90deg,#002c9e 63px,#002a9e 71px,#00299e 79px,#00279e 87px,#00259e 95px,#00249e 103px,#00229e 111px,#00209e 119px,#001f9e 127px,#001d9e 135px,#001b9e 143px,#011a9e 151px,#04189e 159px,#07169e 167px,#0b159e 175px,#0e139e 183px,#12119e 191px,#16109e 199px,#1a0e9e 207px,#1e0d9e 215px,#220b9e 223px,#27099e 231px,#2b089e 239px,#30069e 247px,#35059e 255px,#3a049e 263px,#3f029e 271px,#44019e 279px,#49009e 287px,#4f009e 295px,#54009e 303px,#5a009e 311px,#60009e 319px,#66009e 327px,#6c009e 335px,#72009e 343px,#78009e 351px,#7e009e 359px,#84009e 367px,#8b009e 375px,#92009e 383px,#98009e 391px,#9e009d 399px,#9e0096 407px,#9e0090 415px,#9e008b 423px,#9e0085 431px,#9e0080 439px,#9e007b 447px,#9e0077 455px,#9e0073 463px,#9e006f 471px,#9e006b 479px,#9e0067 487px,#9e0064 495px);"></div>
<div class="b" style="left:0;top:240px;width:618px;height:3px;background:linear-gradient(90deg,#002a9e 65px,#00299e 73px,#00279e 81px,#00259e 89px,#00249e 97px,#00229e 105px,#00209e 113px,#001f9e 121px,#001d9e 129px,#001b9e 137px,#001a9e 145px,#02189e 153px,#04169e 161px,#08159e 169px,#0b139e 177px,#0e129e 185px,#12109e 193px,#160e9e 201px,#1a0d9e 209px,#1e0b9e 217px,#220a9e 225px,#27089e 233px,#2b079e 241px,#30059e 249px,#35049e 257px,#3a039e 265px,#3f029e 273px,#44009e 281px,#49009e 289px,#4e009e 297px,#54009e 305px,#59009e 313px,#5f009e 321px,#65009e 329px,#6a009e 337px,#70009e 345px,#76009e 353px,#7d009e 361px,#83009e 369px,#89009e 377px,#90009e 385px,#96009e 393px,#9d009e 401px,#9e0098 409px,#9e0092 417px,#9e008c 425px,#9e0087 433px,#9e0082 441px,#9e007d 449px,#9e0079 457px,#9e0074 465px,#9e0070 473px,#9e006c 481px,#9e0069 489px);"></div>
<div class="b" style="left:0;top:243px;width:618px;height:3px;background:linear-gradient(90deg,#00299e 66px,#00279e 74px,#00259e 82px,#00249e 90px,#00229e 98px,#00219e 106px,#001f9e 114px,#001d9e 122px,#001c9e 130px,#001a9e 138px,#00189e 146px,#02179e 154px,#04159e 162px,#07149e 170px,#0b129e 178px,#0e119e 186px,#120f9e 194px,#160d9e 202px,#1a0c9e 210px,#1e0a9e 218px,#22099e 226px,#26079e 234px,#2b069e 242px,#2f059e 250px,#34039e 258px,#39029e 266px,#3e019e 274px,#43009e 282px,#48009e 290px,#4d009e 298px,#52009e 306px,#58009e 314px,#5d009e 322px,#63009e 330px,#69009e 338px,#6e009e 346px,#74009e 354px,#7a009e 362px,#81009e 370px,#87009e 378px,#8d009e 386px,#94009e 394px,#9a009e 402px,#9e009b 410px,#9e0095 418px,#9e008f 426px,#9e008a 434px,#9e0084 442px,#9e007f 450px,#9e007b 458px,#9e0077 466px,#9e0072 474px,#9e006f 482px,#9e006b 490px);"></div>
<div class="b" style="left:0;top:246px;width:618px;height:3px;background:linear-gradient(90deg,#00279e 68px,#00259e 76px,#00249e 84px,#00229e 92px,#00219e 100px,#001f9e 108px,#001d9e 116px,#001c9e 124px,#001a9e 132px,#00199e 140px,#00179e 148px,#02159e 156px,#05149e 164px,#08129e 172px,#0b119e 180px,#0e0f9e 188px,#120e9e 196px,#160c9e 204px,#1a0b9e 212px,#1e099e 220px,#22089e 228px,#26069e 236px,#2a059e 244px,#2f049e 252px,#34029e 260px,#38019e 268px,#3d009e 276px,#42009e 284px,#47009e 292px,#4c009e 300px,#52009e 308px,#57009e 316px,#5c009e 324px,#62009e 332px,#68009e 340px,#6d009e 348px,#73009e 356px,#79009e 364px,#7f009e 372px,#85009e 380px,#8c009e 388px,#92009e 396px,#98009e 404px,#9e009d 412px,#9e0097 420px,#9e0091 428px,#9e008b 436px,#9e0086 444px,#9e0081 452px,#9e007d 460px,#9e0078 468px,#9e0074 476px,#9e0070 484px);"></div>
<div class="b" style="left:0;top:249px;width:618px;height:3px;background:linear-gradient(90deg,#00259e 70px,#00249e 78px,#00229e 86px,#00219e 94px,#001f9e 102px,#001d9e 110px,#001c9e 118px,#001a9e 126px,#00199e 134px,#00179e 142px,#00169e 150px,#02149e 158px,#05139e 166px,#08119e 174px,#0b109e 182px,#0f0e9e 190px,#120d9e 198px,#160b9e 206px,#1a0a9e 214px,#1e089e 222px,#22079e 230px,#26059e 238px,#2a049e 246px,#2f039e 254px,#33029e 262px,#38019e 270px,#3d009e 278px,#42009e 286px,#47009e 294px,#4c009e 302px,#51009e 310px,#56009e 318px,#5c009e 326px,#61009e 334px,#67009e 342px,#6c009e 350px,#72009e 358px,#78009e 366px,#7e009e 374px,#84009e 382px,#8a009e 390px,#90009e 398px,#97009e 406px,#9d009e 414px,#9e0099 422px,#9e0093 430px,#9e008d 438px,#9e0088 446px,#9e0083 454px,#9e007e 462px,#9e007a 470px,#9e0076 478px,#9e0072 486px);"></div>
<div class="b" style="left:0;top:252px;width:618px;height:3px;background:linear-gradient(90deg,#00249e 72px,#00229e 80px,#00219e 88px,#001f9e 96px,#001e9e 104px,#001c9e 112px,#001b9e 120px,#00199e 128px,#00179e 136px,#00169e 144px,#00149e 152px,#03139e 160px,#05119e 168px,#08109e 176px,#0b0e9e 184px,#0f0d9e 192px,#120b9e 200px,#160a9e 208px,#1a099e 216px,#1e079e 224px,#22069e 232px,#26059e 240px,#2a039e 248px,#2f029e 256px,#33019e 264px,#38009e 272px,#3c009e 280px,#41009e 288px,#46009e 296px,#4b009e 304px,#50009e 312px,#55009e 320px,#5b009e 328px,#60009e 336px,#66009e 344px,#6b009e 352px,#71009e 360px,#77009e 368px,#7c009e 376px,#82009e 384px,#88009e 392px,#8f009e 400px,#95009e 408px,#9b009e 416px,#9e009b 424px,#9e0095 432px,#9e008f 440px,#9e008a 448px,#9e0085 456px,#9e0080 464px,#9e007c 472px,#9e0077 480px);"></div>
<div class="b" style="left:0;top:255px;width:618px;height:3px;background:linear-gradient(90deg,#00229e 74px,#00219e 82px,#001f9e 90px,#001e9e 98px,#001c9e 106px,#001b9e 114px,#00199e 122px,#00189e 130px,#00169e 138px,#00159e 146px,#01139e 154px,#03129e 162px,#06109e 170px,#090f9e 178px,#0c0d9e 186px,#0f0c9e 194px,#130a9e 202px,#16099e 210px,#1a089e 218px,#1e069e 226px,#22059e 234px,#26049e 242px,#2a039e 250px,#2f019e 258px,#33009e 266px,#37009e 274px,#3c009e 282px,#41009e 290px,#46009e 298px,#4b009e 306px,#50009e 314px,#55009e 322px,#5a009e 330px,#5f009e 338px,#65009e 346px,#6a009e 354px,#70009e 362px,#75009e 370px,#7b009e 378px,#81009e 386px,#87009e 394px,#8d009e 402px,#93009e 410px,#99009e 418px,#9e009d 426px,#9e0096 434px,#9e0091 442px,#9e008b 450px,#9e0086 458px,#9e0082 466px,#9e007d 474px);"></div>
<div class="b" style="left:0;top:258px;width:618px;height:3px;background:linear-gradient(90deg,#00219e 75px,#001f9e 83px,#001e9e 91px,#001c9e 99px,#001b9e 107px,#00199e 115px,#00189e 123px,#00169e 131px,#00159e 139px,#00149e 147px,#01129e 155px,#03119e 163px,#060f9e 171px,#080e9e 179px,#0c0c9e 187px,#0f0b9e 195px,#120a9e 203px,#16089e 211px,#1a079e 219px,#1d069e 227px,#21049e 235px,#25039e 243px,#2a029e 251px,#2e019e 259px,#32009e 267px,#37009e 275px,#3b009e 283px,#40009e 291px,#45009e 299px,#49009e 307px,#4e009e 315px,#53009e 323px,#58009e 331px,#5e009e 339px,#63009e 347px,#68009e 355px,#6e009e 363px,#73009e 371px,#79009e 379px,#7f009e 387px,#85009e 395px,#8b009e 403px,#91009e 411px,#97009e 419px,#9d009e 427px,#9e0099 435px,#9e0093 443px,#9e008e 451px,#9e0089 459px,#9e0084 467px,#9e007f 475px);"></div>
<div class="b" style="left:0;top:261px;width:618px;height:3px;background:linear-gradient(90deg,#001f9e 77px,#001e9e 85px,#001d9e 93px,#001b9e 101px,#001a9e 109px,#00189e 117px,#00179e 125px,#00159e 133px,#00149e 141px,#00129e 149px,#01119e 157px,#030f9e 165px,#060e9e 173px,#090d9e 181px,#0c0b9e 189px,#0f0a9e 197px,#13099e 205px,#16079e 213px,#1a069e 221px,#1d059e 229px,#21039e 237px,#25029e 245px,#29019e 253px,#2e009e 261px,#32009e 269px,#36009e 277px,#3b009e 285px,#3f009e 293px,#44009e 301px,#49009e 309px,#4e009e 317px,#53009e 325px,#58009e 333px,#5d009e 341px,#62009e 349px,#67009e 357px,#6d009e 365px,#72009e 373px,#78009e 381px,#7e009e 389px,#83009e 397px,#89009e 405px,#8f009e 413px,#95009e 421px,#9b009e 429px,#9e009b 437px,#9e0095 445px,#9e0090 453px,#9e008a 461px,#9e0086 469px);"></div>
<div class="b" style="left:0;top:264px;width:618px;height:3px;background:linear-gradient(90deg,#001e9e 79px,#001d9e 87px,#001b9e 95px,#001a9e 103px,#00189e 111px,#00179e 119px,#00159e 127px,#00149e 135px,#00139e 143px,#00119e 151px,#01109e 159px,#040e9e 167px,#060d9e 175px,#090c9e 183px,#0c0a9e 191px,#0f099e 199px,#13089e 207px,#16069e 215px,#1a059e 223px,#1e049e 231px,#21039e 239px,#25029e 247px,#29019e 255px,#2e009e 263px,#32009e 271px,#36009e 279px,#3b009e 287px,#3f009e 295px,#44009e 303px,#48009e 311px,#4d009e 319px,#52009e 327px,#57009e 335px,#5c009e 343px,#61009e 351px,#66009e 359px,#6c009e 367px,#71009e 375px,#77009e 383px,#7c009e 391px,#82009e 399px,#88009e 407px,#8d009e 415px,#93009e 423px,#99009e 431px,#9e009d 439px,#9e0097 447px,#9e0091 455px,#9e008c 463px,#9e0087 471px);"></div>
<div class="b" style="left:0;top:267px;width:618px;height:3px;background:linear-gradient(90deg,#001d9e 80px,#001b9e 88px,#001a9e 96px,#00199e 104px,#00179e 112px,#00169e 120px,#00149e 128px,#00139e 136px,#00129e 144px,#00109e 152px,#010f9e 160px,#030d9e 168px,#060c9e 176px,#090b9e 184px,#0c099e 192px,#0f089e 200px,#12079e 208px,#16069e 216px,#19049e 224px,#1d039e 232px,#21029e 240px,#25019e 248px,#29009e 256px,#2d009e 264px,#31009e 272px,#35009e 280px,#3a009e 288px,#3e009e 296px,#43009e 304px,#47009e 312px,#4c009e 320px,#51009e 328px,#56009e 336px,#5b009e 344px,#60009e 352px,#65009e 360px,#6a009e 368px,#6f009e 376px,#75009e 384px,#7a009e 392px,#80009e 400px,#85009e 408px,#8b009e 416px,#91009e 424px,#97009e 432px,#9d009e 440px,#9e0099 448px,#9e0094 456px,#9e008e 464px);"></div>
<div class="b" style="left:0;top:270px;width:618px;height:3px;background:linear-gradient(90deg,#001c9e 82px,#001a9e 90px,#00199e 98px,#00179e 106px,#00169e 114px,#00159e 122px,#00139e 130px,#00129e 138px,#00109e 146px,#000f9e 154px,#010e9e 162px,#040c9e 170px,#060b9e 178px,#090a9e 186px,#0c089e 194px,#0f079e 202px,#13069e 210px,#16059e 218px,#1a049e 226px,#1d039e 234px,#21019e 242px,#25019e 250px,#29009e 258px,#2d009e 266px,#31009e 274px,#35009e 282px,#39009e 290px,#3e009e 298px,#42009e 306px,#47009e 314px,#4b009e 322px,#50009e 330px,#55009e 338px,#5a009e 346px,#5f009e 354px,#64009e 362px,#69009e 370px,#6e009e 378px,#74009e 386px,#79009e 394px,#7f009e 402px,#84009e 410px,#8a009e 418px,#8f009e 426px,#95009e 434px,#9b009e 442px,#9e009b 450px,#9e0095 458px,#9e0090 466px);"></div>
<div class="b" style="left:0;top:273px;width:618px;height:3px;background:linear-gradient(90deg,#001a9e 84px,#00199e 92px,#00189e 100px,#00169e 108px,#00159e 116px,#00139e 124px,#00129e 132px,#00119e 140px,#000f9e 148px,#000e9e 156px,#020d9e 164px,#040b9e 172px,#070a9e 180px,#09099e 188px,#0c089e 196px,#10069e 204px,#13059e 212px,#16049e 220px,#1a039e 228px,#1d029e 236px,#21019e 244px,#25009e 252px,#29009e 260px,#2d009e 268px,#31009e 276px,#35009e 284px,#39009e 292px,#3d009e 300px,#42009e 308px,#46009e 316px,#4b009e 324px,#50009e 332px,#54009e 340px,#59009e 348px,#5e009e 356px,#63009e 364px,#68009e 372px,#6d009e 380px,#73009e 388px,#78009e 396px,#7d009e 404px,#83009e 412px,#88009e 420px,#8e009e 428px,#94009e 436px,#99009e 444px,#9e009d 452px,#9e0097 460px);"></div>
<div class="b" style="left:0;top:276px;width:618px;height:3px;background:linear-gradient(90deg,#00199e 86px,#00189e 94px,#00169e 102px,#00159e 110px,#00149e 118px,#00129e 126px,#00119e 134px,#00109e 142px,#000e9e 150px,#000d9e 158px,#020c9e 166px,#040a9e 174px,#07099e 182px,#0a089e 190px,#0d079e 198px,#10069e 206px,#13049e 214px,#16039e 222px,#1a029e 230px,#1d019e 238px,#21009e 246px,#25009e 254px,#29009e 262px,#2d009e 270px,#31009e 278px,#35009e 286px,#39009e 294px,#3d009e 302px,#42009e 310px,#46009e 318px,#4a009e 326px,#4f009e 334px,#54009e 342px,#59009e 350px,#5d009e 358px,#62009e 366px,#67009e 374px,#6c009e 382px,#71009e 390px,#77009e 398px,#7c009e 406px,#81009e 414px,#87009e 422px,#8c009e 430px,#92009e 438px,#98009e 446px,#9e009e 454px);"></div>
<div class="b" style="left:0;top:279px;width:618px;height:3px;background:linear-gradient(90deg,#00189e 87px,#00179e 95px,#00159e 103px,#00149e 111px,#00139e 119px,#00119e 127px,#00109e 135px,#000f9e 143px,#000d9e 151px,#000c9e 159px,#020b9e 167px,#040a9e 175px,#07089e 183px,#0a079e 191px,#0d069e 199px,#10059e 207px,#13049e 215px,#16039e 223px,#19029e 231px,#1d019e 239px,#21009e 247px,#24009e 255px,#28009e 263px,#2c009e 271px,#30009e 279px,#34009e 287px,#38009e 295px,#3c009e 303px,#41009e 311px,#45009e 319px,#49009e 327px,#4e009e 335px,#53009e 343px,#57009e 351px,#5c009e 359px,#61009e 367px,#66009e 375px,#6b009e 383px,#70009e 391px,#75009e 399px,#7a009e 407px,#7f009e 415px,#85009e 423px,#8a009e 431px,#90009e 439px,#95009e 447px,#9b009e 455px);"></div>
<div class="b" style="left:0;top:282px;width:618px;height:3px;background:linear-gradient(90deg,#00179e 89px,#00169e 97px,#00149e 105px,#00139e 113px,#00129e 121px,#00109e 129px,#000f9e 137px,#000e9e 145px,#000c9e 153px,#000b9e 161px,#020a9e 169px,#05099e 177px,#07089e 185px,#0a069e 193px,#0d059e 201px,#10049e 209px,#13039e 217px,#16029e 225px,#1a019e 233px,#1d009e 241px,#21009e 249px,#24009e 257px,#28009e 265px,#2c009e 273px,#30009e 281px,#34009e 289px,#38009e 297px,#3c009e 305px,#40009e 313px,#45009e 321px,#49009e 329px,#4d009e 337px,#52009e 345px,#57009e 353px,#5b009e 361px,#60009e 369px,#65009e 377px,#6a009e 385px,#6f009e 393px,#74009e 401px,#79009e 409px,#7e009e 417px,#84009e 425px,#89009e 433px,#8e009e 441px,#94009e 449px);"></div>
<div class="b" style="left:0;top:285px;width:618px;height:3px;background:linear-gradient(90deg,#00169e 91px,#00149e 99px,#00139e 107px,#00129e 115px,#00119e 123px,#000f9e 131px,#000e9e 139px,#000d9e 147px,#000c9e 155px,#010a9e 163px,#02099e 171px,#05089e 179px,#07079e 187px,#0a069e 195px,#0d049e 203px,#10039e 211px,#13029e 219px,#16019e 227px,#1a019e 235px,#1d009e 243px,#21009e 251px,#24009e 259px,#28009e 267px,#2c009e 275px,#30009e 283px,#34009e 291px,#38009e 299px,#3c009e 307px,#40009e 315px,#44009e 323px,#48009e 331px,#4d009e 339px,#51009e 347px,#56009e 355px,#5b009e 363px,#5f009e 371px,#64009e 379px,#69009e 387px,#6e009e 395px,#73009e 403px,#78009e 411px,#7d009e 419px,#82009e 427px,#88009e 435px,#8d009e 443px,#92009e 451px);"></div>
<div class="b" style="left:0;top:288px;width:618px;height:3px;background:linear-gradient(90deg,#00159e 93px,#00139e 101px,#00129e 109px,#00119e 117px,#00109e 125px,#000e9e 133px,#000d9e 141px,#000c9e 149px,#000b9e 157px,#01099e 165px,#03089e 173px,#05079e 181px,#08069e 189px,#0a059e 197px,#0d049e 205px,#10039e 213px,#13029e 221px,#16019e 229px,#1a009e 237px,#1d009e 245px,#21009e 253px,#24009e 261px,#28009e 269px,#2c009e 277px,#2f009e 285px,#33009e 293px,#37009e 301px,#3b009e 309px,#40009e 317px,#44009e 325px,#48009e 333px,#4c009e 341px,#51009e 349px,#55009e 357px,#5a009e 365px,#5f009e 373px,#63009e 381px,#68009e 389px,#6d009e 397px,#72009e 405px,#77009e 413px,#7c009e 421px,#81009e 429px,#86009e 437px,#8c009e 445px);"></div>
<div class="b" style="left:0;top:291px;width:618px;height:3px;background:linear-gradient(90deg,#00149e 95px,#00129e 103px,#00119e 111px,#00109e 119px,#000f9e 127px,#000d9e 135px,#000c9e 143px,#000b9e 151px,#000a9e 159px,#01099e 167px,#03079e 175px,#05069e 183px,#08059e 191px,#0b049e 199px,#0d039e 207px,#10029e 215px,#13019e 223px,#17009e 231px,#1a009e 239px,#1d009e 247px,#21009e 255px,#24009e 263px,#28009e 271px,#2c009e 279px,#2f009e 287px,#33009e 295px,#37009e 303px,#3b009e 311px,#3f009e 319px,#43009e 327px,#48009e 335px,#4c009e 343px,#50009e 351px,#55009e 359px,#59009e 367px,#5e009e 375px,#62009e 383px,#67009e 391px,#6c009e 399px,#71009e 407px,#76009e 415px,#7b009e 423px,#80009e 431px,#85009e 439px);"></div>
<div class="b" style="left:0;top:294px;width:618px;height:3px;background:linear-gradient(90deg,#00139e 96px,#00119e 104px,#00109e 112px,#000f9e 120px,#000e9e 128px,#000d9e 136px,#000b9e 144px,#000a9e 152px,#00099e 160px,#01089e 168px,#03079e 176px,#05069e 184px,#08059e 192px,#0a049e 200px,#0d039e 208px,#10029e 216px,#13019e 224px,#16009e 232px,#1a009e 240px,#1d009e 248px,#20009e 256px,#24009e 264px,#27009e 272px,#2b009e 280px,#2f009e 288px,#32009e 296px,#36009e 304px,#3a009e 312px,#3e009e 320px,#42009e 328px,#47009e 336px,#4b009e 344px,#4f009e 352px,#54009e 360px,#58009e 368px,#5c009e 376px,#61009e 384px,#66009e 392px,#6a009e 400px,#6f009e 408px,#74009e 416px,#79009e 424px,#7e009e 432px,#83009e 440px);"></div>
<div class="b" style="left:0;top:297px;width:618px;height:3px;background:linear-gradient(90deg,#00129e 98px,#00109e 106px,#000f9e 114px,#000e9e 122px,#000d9e 130px,#000c9e 138px,#000a9e 146px,#00099e 154px,#00089e 162px,#01079e 170px,#03069e 178px,#06059e 186px,#08049e 194px,#0b039e 202px,#0d029e 210px,#10019e 218px,#13009e 226px,#16009e 234px,#1a009e 242px,#1d009e 250px,#20009e 258px,#24009e 266px,#27009e 274px,#2b009e 282px,#2f009e 290px,#32009e 298px,#36009e 306px,#3a009e 314px,#3e009e 322px,#42009e 330px,#46009e 338px,#4a009e 346px,#4f009e 354px,#53009e 362px,#57009e 370px,#5c009e 378px,#60009e 386px,#65009e 394px,#6a009e 402px,#6e009e 410px,#73009e 418px,#78009e 426px,#7d009e 434px);"></div>
<div class="b" style="left:0;top:300px;width:618px;height:3px;background:linear-gradient(90deg,#00119e 100px,#000f9e 108px,#000e9e 116px,#000d9e 124px,#000c9e 132px,#000b9e 140px,#000a9e 148px,#00089e 156px,#00079e 164px,#01069e 172px,#03059e 180px,#06049e 188px,#08039e 196px,#0b029e 204px,#0e019e 212px,#11019e 220px,#13009e 228px,#17009e 236px,#1a009e 244px,#1d009e 252px,#20009e 260px,#24009e 268px,#27009e 276px,#2b009e 284px,#2e009e 292px,#32009e 300px,#36009e 308px,#3a009e 316px,#3e009e 324px,#42009e 332px,#46009e 340px,#4a009e 348px,#4e009e 356px,#52009e 364px,#57009e 372px,#5b009e 380px,#60009e 388px,#64009e 396px,#69009e 404px,#6d009e 412px,#72009e 420px,#77009e 428px,#7c009e 436px);"></div>
<div class="b" style="left:0;top:303px;width:618px;height:3px;background:linear-gradient(90deg,#00109e 102px,#000e9e 110px,#000d9e 118px,#000c9e 126px,#000b9e 134px,#000a9e 142px,#00099e 150px,#00089e 158px,#00079e 166px,#02069e 174px,#04059e 182px,#06049e 190px,#09039e 198px,#0b029e 206px,#0e019e 214px,#11009e 222px,#14009e 230px,#17009e 238px,#1a009e 246px,#1d009e 254px,#20009e 262px,#24009e 270px,#27009e 278px,#2b009e 286px,#2e009e 294px,#32009e 302px,#36009e 310px,#3a009e 318px,#3d009e 326px,#41009e 334px,#45009e 342px,#49009e 350px,#4e009e 358px,#52009e 366px,#56009e 374px,#5a009e 382px,#5f009e 390px,#63009e 398px,#68009e 406px,#6c009e 414px,#71009e 422px,#76009e 430px);"></div>
<div class="b" style="left:0;top:306px;width:618px;height:3px;background:linear-gradient(90deg,#000f9e 104px,#000e9e 112px,#000c9e 120px,#000b9e 128px,#000a9e 136px,#00099e 144px,#00089e 152px,#00079e 160px,#00069e 168px,#02059e 176px,#04049e 184px,#06039e 192px,#09029e 200px,#0b019e 208px,#0e009e 216px,#11009e 224px,#14009e 232px,#17009e 240px,#1a009e 248px,#1d009e 256px,#20009e 264px,#24009e 272px,#27009e 280px,#2b009e 288px,#2e009e 296px,#32009e 304px,#36009e 312px,#39009e 320px,#3d009e 328px,#41009e 336px,#45009e 344px,#49009e 352px,#4d009e 360px,#51009e 368px,#55009e 376px,#5a009e 384px,#5e009e 392px,#63009e 400px,#67009e 408px,#6c009e 416px,#70009e 424px);"></div>
<div class="b" style="left:0;top:309px;width:618px;height:3px;background:linear-gradient(90deg,#000e9e 106px,#000d9e 114px,#000c9e 122px,#000a9e 130px,#00099e 138px,#00089e 146px,#00079e 154px,#00069e 162px,#00059e 170px,#02049e 178px,#04039e 186px,#07029e 194px,#09019e 202px,#0c019e 210px,#0e009e 218px,#11009e 226px,#14009e 234px,#17009e 242px,#1a009e 250px,#1d009e 258px,#20009e 266px,#24009e 274px,#27009e 282px,#2b009e 290px,#2e009e 298px,#32009e 306px,#35009e 314px,#39009e 322px,#3d009e 330px,#41009e 338px,#45009e 346px,#49009e 354px,#4d009e 362px,#51009e 370px,#55009e 378px,#59009e 386px,#5d009e 394px,#62009e 402px,#66009e 410px,#6b009e 418px,#6f009e 426px);"></div>
<div class="b" style="left:0;top:312px;width:618px;height:3px;background:linear-gradient(90deg,#000d9e 109px,#000c9e 117px,#000b9e 125px,#000a9e 133px,#00089e 141px,#00079e 149px,#00069e 157px,#00059e 165px,#01049e 173px,#03039e 181px,#05029e 189px,#07029e 197px,#09019e 205px,#0c009e 213px,#0f009e 221px,#12009e 229px,#14009e 237px,#17009e 245px,#1a009e 253px,#1e009e 261px,#21009e 269px,#24009e 277px,#27009e 285px,#2b009e 293px,#2e009e 301px,#32009e 309px,#36009e 317px,#39009e 325px,#3d009e 333px,#41009e 341px,#45009e 349px,#49009e 357px,#4d009e 365px,#51009e 373px,#55009e 381px,#59009e 389px,#5d009e 397px,#62009e 405px,#66009e 413px,#6a009e 421px);"></div>
<div class="b" style="left:0;top:315px;width:618px;height:3px;background:linear-gradient(90deg,#000c9e 111px,#000b9e 119px,#000a9e 127px,#00099e 135px,#00089e 143px,#00079e 151px,#00069e 159px,#00059e 167px,#01049e 175px,#03039e 183px,#05029e 191px,#07019e 199px,#0a009e 207px,#0c009e 215px,#0f009e 223px,#12009e 231px,#15009e 239px,#18009e 247px,#1b009e 255px,#1e009e 263px,#21009e 271px,#24009e 279px,#27009e 287px,#2b009e 295px,#2e009e 303px,#32009e 311px,#35009e 319px,#39009e 327px,#3d009e 335px,#41009e 343px,#44009e 351px,#48009e 359px,#4c009e 367px,#50009e 375px,#54009e 383px,#58009e 391px,#5d009e 399px,#61009e 407px,#65009e 415px);"></div>
<div class="b" style="left:0;top:318px;width:618px;height:3px;background:linear-gradient(90deg,#000b9e 112px,#000a9e 120px,#00099e 128px,#00089e 136px,#00079e 144px,#00069e 152px,#00059e 160px,#00049e 168px,#01039e 176px,#03029e 184px,#05019e 192px,#07019e 200px,#0a009e 208px,#0c009e 216px,#0f009e 224px,#12009e 232px,#14009e 240px,#17009e 248px,#1a009e 256px,#1d009e 264px,#20009e 272px,#24009e 280px,#27009e 288px,#2a009e 296px,#2e009e 304px,#31009e 312px,#35009e 320px,#38009e 328px,#3c009e 336px,#40009e 344px,#44009e 352px,#47009e 360px,#4b009e 368px,#4f009e 376px,#53009e 384px,#57009e 392px,#5b009e 400px,#60009e 408px,#64009e 416px);"></div>
<div class="b" style="left:0;top:321px;width:618px;height:3px;background:linear-gradient(90deg,#000a9e 114px,#00099e 122px,#00089e 130px,#00079e 138px,#00069e 146px,#00059e 154px,#00049e 162px,#00049e 170px,#01039e 178px,#03029e 186px,#05019e 194px,#07009e 202px,#0a009e 210px,#0c009e 218px,#0f009e 226px,#12009e 234px,#14009e 242px,#17009e 250px,#1a009e 258px,#1d009e 266px,#20009e 274px,#24009e 282px,#27009e 290px,#2a009e 298px,#2e009e 306px,#31009e 314px,#35009e 322px,#38009e 330px,#3c009e 338px,#3f009e 346px,#43009e 354px,#47009e 362px,#4b009e 370px,#4f009e 378px,#53009e 386px,#57009e 394px,#5b009e 402px,#5f009e 410px);"></div>
<div class="b" style="left:0;top:324px;width:618px;height:3px;background:linear-gradient(90deg,#000a9e 116px,#00099e 124px,#00089e 132px,#00079e 140px,#00069e 148px,#00059e 156px,#00049e 164px,#00039e 172px,#01029e 180px,#03019e 188px,#05019e 196px,#08009e 204px,#0a009e 212px,#0d009e 220px,#0f009e 228px,#12009e 236px,#15009e 244px,#17009e 252px,#1a009e 260px,#1d009e 268px,#20009e 276px,#24009e 284px,#27009e 292px,#2a009e 300px,#2d009e 308px,#31009e 316px,#34009e 324px,#38009e 332px,#3b009e 340px,#3f009e 348px,#43009e 356px,#47009e 364px,#4a009e 372px,#4e009e 380px,#52009e 388px,#56009e 396px,#5a009e 404px,#5e009e 412px);"></div>
<div class="b" style="left:0;top:327px;width:618px;height:3px;background:linear-gradient(90deg,#00099e 118px,#00089e 126px,#00079e 134px,#00069e 142px,#00059e 150px,#00049e 158px,#00039e 166px,#00029e 174px,#02029e 182px,#04019e 190px,#06009e 198px,#08009e 206px,#0a009e 214px,#0d009e 222px,#0f009e 230px,#12009e 238px,#15009e 246px,#18009e 254px,#1a009e 262px,#1d009e 270px,#21009e 278px,#24009e 286px,#27009e 294px,#2a009e 302px,#2d009e 310px,#31009e 318px,#34009e 326px,#38009e 334px,#3b009e 342px,#3f009e 350px,#42009e 358px,#46009e 366px,#4a009e 374px,#4e009e 382px,#52009e 390px,#56009e 398px,#5a009e 406px);"></div>
<div class="b" style="left:0;top:330px;width:618px;height:3px;background:linear-gradient(90deg,#00089e 120px,#00079e 128px,#00069e 136px,#00059e 144px,#00049e 152px,#00039e 160px,#00039e 168px,#00029e 176px,#02019e 184px,#04009e 192px,#06009e 200px,#08009e 208px,#0a009e 216px,#0d009e 224px,#0f009e 232px,#12009e 240px,#15009e 248px,#18009e 256px,#1b009e 264px,#1e009e 272px,#21009e 280px,#24009e 288px,#27009e 296px,#2a009e 304px,#2d009e 312px,#31009e 320px,#34009e 328px,#37009e 336px,#3b009e 344px,#3f009e 352px,#42009e 360px,#46009e 368px,#4a009e 376px,#4d009e 384px,#51009e 392px,#55009e 400px,#59009e 408px);"></div>
<div class="b" style="left:0;top:333px;width:618px;height:3px;background:linear-gradient(90deg,#00079e 123px,#00069e 131px,#00059e 139px,#00059e 147px,#00049e 155px,#00039e 163px,#00029e 171px,#01019e 179px,#02019e 187px,#04009e 195px,#06009e 203px,#09009e 211px,#0b009e 219px,#0d009e 227px,#10009e 235px,#13009e 243px,#15009e 251px,#18009e 259px,#1b009e 267px,#1e009e 275px,#21009e 283px,#24009e 291px,#27009e 299px,#2a009e 307px,#2e009e 315px,#31009e 323px,#34009e 331px,#38009e 339px,#3b009e 347px,#3f009e 355px,#42009e 363px,#46009e 371px,#4a009e 379px,#4d009e 387px,#51009e 395px,#55009e 403px);"></div>
<div class="b" style="left:0;top:336px;width:618px;height:3px;background:linear-gradient(90deg,#00079e 125px,#00069e 133px,#00059e 141px,#00049e 149px,#00039e 157px,#00029e 165px,#00019e 173px,#01019e 181px,#03009e 189px,#04009e 197px,#07009e 205px,#09009e 213px,#0b009e 221px,#0e009e 229px,#10009e 237px,#13009e 245px,#15009e 253px,#18009e 261px,#1b009e 269px,#1e009e 277px,#21009e 285px,#24009e 293px,#27009e 301px,#2a009e 309px,#2d009e 317px,#31009e 325px,#34009e 333px,#37009e 341px,#3b009e 349px,#3e009e 357px,#42009e 365px,#46009e 373px,#49009e 381px,#4d009e 389px,#51009e 397px);"></div>
<div class="b" style="left:0;top:339px;width:618px;height:3px;background:linear-gradient(90deg,#00069e 127px,#00059e 135px,#00049e 143px,#00039e 151px,#00039e 159px,#00029e 167px,#00019e 175px,#01009e 183px,#03009e 191px,#05009e 199px,#07009e 207px,#09009e 215px,#0b009e 223px,#0e009e 231px,#10009e 239px,#13009e 247px,#16009e 255px,#18009e 263px,#1b009e 271px,#1e009e 279px,#21009e 287px,#24009e 295px,#27009e 303px,#2a009e 311px,#2d009e 319px,#31009e 327px,#34009e 335px,#37009e 343px,#3b009e 351px,#3e009e 359px,#42009e 367px,#45009e 375px,#49009e 383px,#4d009e 391px,#50009e 399px);"></div>
<div class="b" style="left:0;top:342px;width:618px;height:3px;background:linear-gradient(90deg,#00059e 129px,#00059e 137px,#00049e 145px,#00039e 153px,#00029e 161px,#00019e 169px,#00019e 177px,#01009e 185px,#03009e 193px,#05009e 201px,#07009e 209px,#09009e 217px,#0c009e 225px,#0e009e 233px,#10009e 241px,#13009e 249px,#16009e 257px,#18009e 265px,#1b009e 273px,#1e009e 281px,#21009e 289px,#24009e 297px,#27009e 305px,#2a009e 313px,#2d009e 321px,#30009e 329px,#34009e 337px,#37009e 345px,#3a009e 353px,#3e009e 361px,#41009e 369px,#45009e 377px,#48009e 385px,#4c009e 393px);"></div>
<div class="b" style="left:0;top:345px;width:618px;height:3px;background:linear-gradient(90deg,#00059e 132px,#00049e 140px,#00039e 148px,#00029e 156px,#00019e 164px,#00019e 172px,#00009e 180px,#02009e 188px,#03009e 196px,#05009e 204px,#07009e 212px,#0a009e 220px,#0c009e 228px,#0e009e 236px,#11009e 244px,#13009e 252px,#16009e 260px,#19009e 268px,#1c009e 276px,#1e009e 284px,#21009e 292px,#24009e 300px,#27009e 308px,#2a009e 316px,#2e009e 324px,#31009e 332px,#34009e 340px,#37009e 348px,#3b009e 356px,#3e009e 364px,#41009e 372px,#45009e 380px,#49009e 388px);"></div>
<div class="b" style="left:0;top:348px;width:618px;height:3px;background:linear-gradient(90deg,#00049e 134px,#00039e 142px,#00029e 150px,#00029e 158px,#00019e 166px,#00009e 174px,#00009e 182px,#02009e 190px,#04009e 198px,#06009e 206px,#08009e 214px,#0a009e 222px,#0c009e 230px,#0f009e 238px,#11009e 246px,#14009e 254px,#16009e 262px,#19009e 270px,#1c009e 278px,#1f009e 286px,#21009e 294px,#24009e 302px,#27009e 310px,#2a009e 318px,#2d009e 326px,#31009e 334px,#34009e 342px,#37009e 350px,#3a009e 358px,#3e009e 366px,#41009e 374px,#45009e 382px,#48009e 390px);"></div>
<div class="b" style="left:0;top:351px;width:618px;height:3px;background:linear-gradient(90deg,#00049e 136px,#00039e 144px,#00029e 152px,#00019e 160px,#00019e 168px,#00009e 176px,#01009e 184px,#02009e 192px,#04009e 200px,#06009e 208px,#08009e 216px,#0a009e 224px,#0c009e 232px,#0f009e 240px,#11009e 248px,#14009e 256px,#16009e 264px,#19009e 272px,#1c009e 280px,#1f009e 288px,#21009e 296px,#24009e 304px,#27009e 312px,#2a009e 320px,#2d009e 328px,#30009e 336px,#34009e 344px,#37009e 352px,#3a009e 360px,#3e009e 368px,#41009e 376px,#44009e 384px);"></div>
<div class="b" style="left:0;top:354px;width:618px;height:3px;background:linear-gradient(90deg,#00039e 138px,#00029e 146px,#00029e 154px,#00019e 162px,#00009e 170px,#00009e 178px,#01009e 186px,#02009e 194px,#04009e 202px,#06009e 210px,#08009e 218px,#0a009e 226px,#0d009e 234px,#0f009e 242px,#11009e 250px,#14009e 258px,#16009e 266px,#19009e 274px,#1c009e 282px,#1f009e 290px,#21009e 298px,#24009e 306px,#27009e 314px,#2a009e 322px,#2d009e 330px,#30009e 338px,#34009e 346px,#37009e 354px,#3a009e 362px,#3d009e 370px,#41009e 378px);"></div>
<div class="b" style="left:0;top:357px;width:618px;height:3px;background:linear-gradient(90deg,#00029e 141px,#00029e 149px,#00019e 157px,#00009e 165px,#00009e 173px,#00009e 181px,#01009e 189px,#03009e 197px,#05009e 205px,#06009e 213px,#09009e 221px,#0b009e 229px,#0d009e 237px,#0f009e 245px,#12009e 253px,#14009e 261px,#17009e 269px,#1a009e 277px,#1c009e 285px,#1f009e 293px,#22009e 301px,#25009e 309px,#28009e 317px,#2b009e 325px,#2e009e 333px,#31009e 341px,#34009e 349px,#37009e 357px,#3a009e 365px,#3d009e 373px,#41009e 381px);"></div>
<div class="b" style="left:0;top:360px;width:618px;height:3px;background:linear-gradient(90deg,#00029e 143px,#00019e 151px,#00019e 159px,#00009e 167px,#00009e 175px,#00009e 183px,#01009e 191px,#03009e 199px,#05009e 207px,#07009e 215px,#09009e 223px,#0b009e 231px,#0d009e 239px,#10009e 247px,#12009e 255px,#14009e 263px,#17009e 271px,#1a009e 279px,#1c009e 287px,#1f009e 295px,#22009e 303px,#25009e 311px,#28009e 319px,#2a009e 327px,#2d009e 335px,#31009e 343px,#34009e 351px,#37009e 359px,#3a009e 367px,#3d009e 375px);"></div>
<div class="b" style="left:0;top:363px;width:618px;height:3px;background:linear-gradient(90deg,#00019e 145px,#00019e 153px,#00009e 161px,#00009e 169px,#00009e 177px,#00009e 185px,#01009e 193px,#03009e 201px,#05009e 209px,#07009e 217px,#09009e 225px,#0b009e 233px,#0d009e 241px,#10009e 249px,#12009e 257px,#15009e 265px,#17009e 273px,#1a009e 281px,#1c009e 289px,#1f009e 297px,#22009e 305px,#25009e 313px,#27009e 321px,#2a009e 329px,#2d009e 337px,#30009e 345px,#33009e 353px,#37009e 361px,#3a009e 369px);"></div>
<div class="b" style="left:0;top:366px;width:618px;height:3px;background:linear-gradient(90deg,#00019e 148px,#00009e 156px,#00009e 164px,#00009e 172px,#00009e 180px,#00009e 188px,#02009e 196px,#04009e 204px,#05009e 212px,#07009e 220px,#09009e 228px,#0c009e 236px,#0e009e 244px,#10009e 252px,#13009e 260px,#15009e 268px,#17009e 276px,#1a009e 284px,#1d009e 292px,#1f009e 300px,#22009e 308px,#25009e 316px,#28009e 324px,#2b009e 332px,#2e009e 340px,#31009e 348px,#34009e 356px,#37009e 364px,#3a009e 372px);"></div>
<div class="b" style="left:0;top:369px;width:618px;height:3px;background:linear-gradient(90deg,#00019e 150px,#00009e 158px,#00009e 166px,#00009e 174px,#00009e 182px,#01009e 190px,#02009e 198px,#04009e 206px,#06009e 214px,#08009e 222px,#0a009e 230px,#0c009e 238px,#0e009e 246px,#10009e 254px,#13009e 262px,#15009e 270px,#18009e 278px,#1a009e 286px,#1d009e 294px,#1f009e 302px,#22009e 310px,#25009e 318px,#28009e 326px,#2b009e 334px,#2e009e 342px,#31009e 350px,#34009e 358px,#37009e 366px);"></div>
<div class="b" style="left:0;top:372px;width:618px;height:3px;background:linear-gradient(90deg,#00009e 152px,#00009e 160px,#00009e 168px,#00009e 176px,#00009e 184px,#01009e 192px,#02009e 200px,#04009e 208px,#06009e 216px,#08009e 224px,#0a009e 232px,#0c009e 240px,#0e009e 248px,#10009e 256px,#13009e 264px,#15009e 272px,#18009e 280px,#1a009e 288px,#1d009e 296px,#1f009e 304px,#22009e 312px,#25009e 320px,#28009e 328px,#2b009e 336px,#2d009e 344px,#30009e 352px,#33009e 360px);"></div>
<div class="b" style="left:0;top:375px;width:618px;height:3px;background:linear-gradient(90deg,#00009e 155px,#00009e 163px,#00009e 171px,#00009e 179px,#00009e 187px,#01009e 195px,#03009e 203px,#04009e 211px,#06009e 219px,#08009e 227px,#0a009e 235px,#0c009e 243px,#0f009e 251px,#11009e 259px,#13009e 267px,#16009e 275px,#18009e 283px,#1b009e 291px,#1d009e 299px,#20009e 307px,#23009e 315px,#25009e 323px,#28009e 331px,#2b009e 339px,#2e009e 347px,#31009e 355px,#34009e 363px);"></div>
<div class="b" style="left:0;top:378px;width:618px;height:3px;background:linear-gradient(90deg,#00009e 157px,#00009e 165px,#00009e 173px,#00009e 181px,#00009e 189px,#01009e 197px,#03009e 205px,#05009e 213px,#06009e 221px,#08009e 229px,#0a009e 237px,#0d009e 245px,#0f009e 253px,#11009e 261px,#13009e 269px,#16009e 277px,#18009e 285px,#1b009e 293px,#1d009e 301px,#20009e 309px,#23009e 317px,#25009e 325px,#28009e 333px,#2b009e 341px,#2e009e 349px,#31009e 357px);"></div>
<div class="b" style="left:0;top:381px;width:618px;height:3px;background:linear-gradient(90deg,#00009e 160px,#00009e 168px,#00009e 176px,#00009e 184px,#00009e 192px,#02009e 200px,#03009e 208px,#05009e 216px,#07009e 224px,#09009e 232px,#0b009e 240px,#0d009e 248px,#0f009e 256px,#11009e 264px,#14009e 272px,#16009e 280px,#19009e 288px,#1b009e 296px,#1e009e 304px,#20009e 312px,#23009e 320px,#26009e 328px,#28009e 336px,#2b009e 344px,#2e009e 352px);"></div>
<div class="b" style="left:0;top:384px;width:618px;height:3px;background:linear-gradient(90deg,#00009e 163px,#00009e 171px,#00009e 179px,#00009e 187px,#01009e 195px,#02009e 203px,#04009e 211px,#05009e 219px,#07009e 227px,#09009e 235px,#0b009e 243px,#0d009e 251px,#10009e 259px,#12009e 267px,#14009e 275px,#17009e 283px,#19009e 291px,#1b009e 299px,#1e009e 307px,#21009e 315px,#23009e 323px,#26009e 331px,#29009e 339px,#2b009e 347px,#2e009e 355px);"></div>
<div class="b" style="left:0;top:387px;width:618px;height:3px;background:linear-gradient(90deg,#00009e 165px,#00009e 173px,#00009e 181px,#00009e 189px,#01009e 197px,#02009e 205px,#04009e 213px,#06009e 221px,#07009e 229px,#09009e 237px,#0b009e 245px,#0e009e 253px,#10009e 261px,#12009e 269px,#14009e 277px,#17009e 285px,#19009e 293px,#1b009e 301px,#1e009e 309px,#21009e 317px,#23009e 325px,#26009e 333px,#29009e 341px,#2b009e 349px);"></div>
<div class="b" style="left:0;top:390px;width:618px;height:3px;background:linear-gradient(90deg,#00009e 168px,#00009e 176px,#00009e 184px,#00009e 192px,#01009e 200px,#03009e 208px,#04009e 216px,#06009e 224px,#08009e 232px,#0a009e 240px,#0c009e 248px,#0e009e 256px,#10009e 264px,#12009e 272px,#15009e 280px,#17009e 288px,#19009e 296px,#1c009e 304px,#1e009e 312px,#21009e 320px,#23009e 328px,#26009e 336px,#29009e 344px);"></div>
<div class="b" style="left:0;top:393px;width:618px;height:3px;background:linear-gradient(90deg,#00009e 171px,#00009e 179px,#00009e 187px,#00009e 195px,#01009e 203px,#03009e 211px,#05009e 219px,#06009e 227px,#08009e 235px,#0a009e 243px,#0c009e 251px,#0e009e 259px,#11009e 267px,#13009e 275px,#15009e 283px,#17009e 291px,#1a009e 299px,#1c009e 307px,#1f009e 315px,#21009e 323px,#24009e 331px,#26009e 339px,#29009e 347px);"></div>
<div class="b" style="left:0;top:396px;width:618px;height:3px;background:linear-gradient(90deg,#00009e 174px,#00009e 182px,#00009e 190px,#00009e 198px,#02009e 206px,#03009e 214px,#05009e 222px,#07009e 230px,#09009e 238px,#0b009e 246px,#0d009e 254px,#0f009e 262px,#11009e 270px,#13009e 278px,#15009e 286px,#18009e 294px,#1a009e 302px,#1d009e 310px,#1f009e 318px,#22009e 326px,#24009e 334px,#27009e 342px);"></div>
<div class="b" style="left:0;top:399px;width:618px;height:3px;background:linear-gradient(90deg,#00009e 177px,#00009e 185px,#00009e 193px,#01009e 201px,#02009e 209px,#04009e 217px,#05009e 225px,#07009e 233px,#09009e 241px,#0b009e 249px,#0d009e 257px,#0f009e 265px,#11009e 273px,#14009e 281px,#16009e 289px,#18009e 297px,#1b009e 305px,#1d009e 313px,#1f009e 321px,#22009e 329px,#24009e 337px);"></div>
<div class="b" style="left:0;top:402px;width:618px;height:3px;background:linear-gradient(90deg,#00009e 179px,#00009e 187px,#00009e 195px,#01009e 203px,#02009e 211px,#04009e 219px,#06009e 227px,#07009e 235px,#09009e 243px,#0b009e 251px,#0d009e 259px,#0f009e 267px,#11009e 275px,#14009e 283px,#16009e 291px,#18009e 299px,#1b009e 307px,#1d009e 315px,#1f009e 323px,#22009e 331px);"></div>
<div class="b" style="left:0;top:405px;width:618px;height:3px;background:linear-gradient(90deg,#00009e 183px,#00009e 191px,#00009e 199px,#01009e 207px,#03009e 215px,#04009e 223px,#06009e 231px,#08009e 239px,#0a009e 247px,#0c009e 255px,#0e009e 263px,#10009e 271px,#12009e 279px,#14009e 287px,#17009e 295px,#19009e 303px,#1b009e 311px,#1e009e 319px,#20009e 327px,#23009e 335px);"></div>
<div class="b" style="left:0;top:408px;width:618px;height:3px;background:linear-gradient(90deg,#00009e 186px,#00009e 194px,#00009e 202px,#02009e 210px,#03009e 218px,#05009e 226px,#07009e 234px,#08009e 242px,#0a009e 250px,#0c009e 258px,#0e009e 266px,#10009e 274px,#13009e 282px,#15009e 290px,#17009e 298px,#19009e 306px,#1c009e 314px,#1e009e 322px,#20009e 330px);"></div>
<div class="b" style="left:0;top:411px;width:618px;height:3px;background:linear-gradient(90deg,#00009e 189px,#00009e 197px,#01009e 205px,#02009e 213px,#04009e 221px,#05009e 229px,#07009e 237px,#09009e 245px,#0b009e 253px,#0d009e 261px,#0f009e 269px,#11009e 277px,#13009e 285px,#15009e 293px,#17009e 301px,#1a009e 309px,#1c009e 317px,#1e009e 325px);"></div>
<div class="b" style="left:0;top:414px;width:618px;height:3px;background:linear-gradient(90deg,#00009e 192px,#00009e 200px,#01009e 208px,#02009e 216px,#04009e 224px,#06009e 232px,#07009e 240px,#09009e 248px,#0b009e 256px,#0d009e 264px,#0f009e 272px,#11009e 280px,#13009e 288px,#15009e 296px,#18009e 304px,#1a009e 312px,#1c009e 320px);"></div>
<div class="b" style="left:0;top:417px;width:618px;height:3px;background:linear-gradient(90deg,#00009e 196px,#00009e 204px,#02009e 212px,#03009e 220px,#05009e 228px,#06009e 236px,#08009e 244px,#0a009e 252px,#0c009e 260px,#0e009e 268px,#10009e 276px,#12009e 284px,#14009e 292px,#16009e 300px,#18009e 308px,#1b009e 316px,#1d009e 324px);"></div>
<div class="b" style="left:0;top:420px;width:618px;height:3px;background:linear-gradient(90deg,#00009e 200px,#01009e 208px,#02009e 216px,#04009e 224px,#05009e 232px,#07009e 240px,#09009e 248px,#0a009e 256px,#0c009e 264px,#0e009e 272px,#10009e 280px,#12009e 288px,#15009e 296px,#17009e 304px,#19009e 312px,#1b009e 320px);"></div>
<div class="b" style="left:0;top:423px;width:618px;height:3px;background:linear-gradient(90deg,#00009e 203px,#01009e 211px,#02009e 219px,#04009e 227px,#06009e 235px,#07009e 243px,#09009e 251px,#0b009e 259px,#0d009e 267px,#0f009e 275px,#11009e 283px,#13009e 291px,#15009e 299px,#17009e 307px,#19009e 315px);"></div>
<div class="b" style="left:0;top:426px;width:618px;height:3px;background:linear-gradient(90deg,#00009e 207px,#02009e 215px,#03009e 223px,#05009e 231px,#06009e 239px,#08009e 247px,#0a009e 255px,#0b009e 263px,#0d009e 271px,#0f009e 279px,#11009e 287px,#13009e 295px,#16009e 303px,#18009e 311px);"></div>
<div class="b" style="left:0;top:429px;width:618px;height:3px;background:linear-gradient(90deg,#01009e 210px,#02009e 218px,#03009e 226px,#05009e 234px,#07009e 242px,#08009e 250px,#0a009e 258px,#0c009e 266px,#0e009e 274px,#10009e 282px,#12009e 290px,#14009e 298px,#16009e 306px);"></div>
<div class="b" style="left:0;top:432px;width:618px;height:3px;background:linear-gradient(90deg,#01009e 214px,#02009e 222px,#04009e 230px,#05009e 238px,#07009e 246px,#09009e 254px,#0b009e 262px,#0c009e 270px,#0e009e 278px,#10009e 286px,#12009e 294px,#14009e 302px);"></div>
<div class="b" style="left:0;top:435px;width:618px;height:3px;background:linear-gradient(90deg,#01009e 217px,#03009e 225px,#04009e 233px,#06009e 241px,#07009e 249px,#09009e 257px,#0b009e 265px,#0d009e 273px,#0f009e 281px,#11009e 289px,#13009e 297px,#15009e 305px);"></div>
<div class="b" style="left:0;top:438px;width:618px;height:3px;background:linear-gradient(90deg,#02009e 221px,#03009e 229px,#05009e 237px,#06009e 245px,#08009e 253px,#0a009e 261px,#0c009e 269px,#0d009e 277px,#0f009e 285px,#11009e 293px,#13009e 301px);"></div>
<div class="b" style="left:0;top:441px;width:618px;height:3px;background:linear-gradient(90deg,#02009e 225px,#04009e 233px,#05009e 241px,#07009e 249px,#09009e 257px,#0a009e 265px,#0c009e 273px,#0e009e 281px,#10009e 289px,#12009e 297px);"></div>
<div class="b" style="left:0;top:444px;width:618px;height:3px;background:linear-gradient(90deg,#03009e 228px,#04009e 236px,#06009e 244px,#07009e 252px,#09009e 260px,#0b009e 268px,#0d009e 276px,#0e009e 284px,#10009e 292px);"></div>
<div class="b" style="left:0;top:447px;width:618px;height:3px;background:linear-gradient(90deg,#03009e 231px,#05009e 239px,#06009e 247px,#08009e 255px,#09009e 263px,#0b009e 271px,#0d009e 279px,#0f009e 287px,#11009e 295px);"></div>
<div class="b" style="left:0;top:450px;width:618px;height:3px;background:linear-gradient(90deg,#04009e 235px,#05009e 243px,#07009e 251px,#08009e 259px,#0a009e 267px,#0c009e 275px,#0e009e 283px,#0f009e 291px);"></div>
<div class="b" style="left:0;top:453px;width:618px;height:3px;background:linear-gradient(90deg,#04009e 238px,#05009e 246px,#07009e 254px,#09009e 262px,#0a009e 270px,#0c009e 278px,#0e009e 286px);"></div>
<div class="b" style="left:0;top:456px;width:618px;height:3px;background:linear-gradient(90deg,#04009e 242px,#06009e 250px,#08009e 258px,#09009e 266px,#0b009e 274px,#0d009e 282px);"></div>
<div class="b" style="left:0;top:459px;width:618px;height:3px;background:linear-gradient(90deg,#05009e 246px,#07009e 254px,#08009e 262px,#0a009e 270px,#0b009e 278px);"></div>
<div class="b" style="left:0;top:462px;width:618px;height:3px;background:linear-gradient(90deg,#06009e 250px,#07009e 258px,#09009e 266px,#0a009e 274px);"></div>
</div>
<div class="b" style="left:0;top:0;width:618px;height:476px;clip-path:polygon(463.0px 60.0px,78.0px 19.0px,180.0px 350.0px);">
<div class="b" style="left:0;top:18px;width:618px;height:2px;background:linear-gradient(90deg,#00ff00 70px,#00ff00 78px,#06ff00 86px);"></div>
<div class="b" style="left:0;top:20px;width:618px;height:2px;background:linear-gradient(90deg,#00ff02 70px,#00ff01 78px,#06ff01 86px,#0dff00 94px,#16ff00 102px,#20ff00 110px);"></div>
<div class="b" style="left:0;top:22px;width:618px;height:2px;background:linear-gradient(90deg,#00ff04 71px,#00ff03 79px,#06ff03 87px,#0eff02 95px,#17ff01 103px,#21ff00 111px,#2cff00 119px,#38ff00 127px);"></div>
<div class="b" style="left:0;top:24px;width:618px;height:2px;background:linear-gradient(90deg,#00ff06 72px,#00ff05 80px,#06ff05 88px,#0eff04 96px,#17ff03 104px,#22ff02 112px,#2dff01 120px,#39ff00 128px,#46ff00 136px,#54ff00 144px);"></div>
<div class="b" style="left:0;top:26px;width:618px;height:2px;background:linear-gradient(90deg,#00ff09 72px,#00ff08 80px,#06ff07 88px,#0eff06 96px,#17ff05 104px,#21ff04 112px,#2cff03 120px,#38ff02 128px,#46ff02 136px,#54ff01 144px,#64ff00 152px,#74ff00 160px,#86ff00 168px);"></div>
<div class="b" style="left:0;top:28px;width:618px;height:2px;background:linear-gradient(90deg,#00ff0b 73px,#00ff0a 81px,#06ff09 89px,#0eff09 97px,#17ff08 105px,#22ff07 113px,#2dff06 121px,#3aff05 129px,#47ff04 137px,#56ff03 145px,#65ff02 153px,#76ff01 161px,#88ff00 169px,#9cff00 177px,#b1ff00 185px);"></div>
<div class="b" style="left:0;top:30px;width:618px;height:2px;background:linear-gradient(90deg,#00ff0e 73px,#00ff0d 81px,#06ff0c 89px,#0eff0b 97px,#17ff0a 105px,#21ff09 113px,#2dff09 121px,#39ff08 129px,#47ff07 137px,#55ff06 145px,#65ff05 153px,#76ff03 161px,#88ff02 169px,#9cff01 177px,#b1ff00 185px,#c8ff00 193px,#e0ff00 201px);"></div>
<div class="b" style="left:0;top:32px;width:618px;height:2px;background:linear-gradient(90deg,#00ff11 74px,#00ff10 82px,#06ff0f 90px,#0eff0e 98px,#18ff0d 106px,#22ff0c 114px,#2eff0b 122px,#3aff0a 130px,#48ff09 138px,#57ff08 146px,#67ff07 154px,#78ff06 162px,#8aff05 170px,#9eff04 178px,#b4ff03 186px,#cbff02 194px,#e4ff01 202px,#ffff00 210px,#ffe500 218px);"></div>
<div class="b" style="left:0;top:34px;width:618px;height:2px;background:linear-gradient(90deg,#00ff13 75px,#00ff13 83px,#07ff12 91px,#0fff11 99px,#18ff10 107px,#23ff0f 115px,#2eff0e 123px,#3bff0d 131px,#49ff0c 139px,#58ff0b 147px,#68ff0a 155px,#7aff09 163px,#8dff08 171px,#a1ff07 179px,#b7ff06 187px,#ceff05 195px,#e7ff03 203px,#fffb02 211px,#ffe201 219px,#ffcb00 227px,#ffb700 235px,#ffa600 243px);"></div>
<div class="b" style="left:0;top:36px;width:618px;height:2px;background:linear-gradient(90deg,#00ff16 75px,#00ff16 83px,#06ff15 91px,#0eff14 99px,#18ff13 107px,#22ff12 115px,#2eff12 123px,#3bff11 131px,#49ff10 139px,#58ff0f 147px,#68ff0e 155px,#7aff0d 163px,#8cff0c 171px,#a1ff0a 179px,#b7ff09 187px,#ceff08 195px,#e8ff07 203px,#fffb05 211px,#ffe104 219px,#ffca02 227px,#ffb701 235px,#ffa500 243px,#ff9600 251px,#ff8800 259px);"></div>
<div class="b" style="left:0;top:38px;width:618px;height:2px;background:linear-gradient(90deg,#00ff19 76px,#00ff19 84px,#06ff18 92px,#0fff17 100px,#18ff16 108px,#23ff16 116px,#2fff15 124px,#3cff14 132px,#4aff13 140px,#59ff12 148px,#6aff11 156px,#7cff10 164px,#8fff0f 172px,#a4ff0e 180px,#baff0d 188px,#d2ff0c 196px,#ecff0a 204px,#fff709 212px,#ffdd07 220px,#ffc705 228px,#ffb403 236px,#ffa202 244px,#ff9301 252px,#ff8500 260px,#ff7900 268px,#ff6e00 276px);"></div>
<div class="b" style="left:0;top:40px;width:618px;height:2px;background:linear-gradient(90deg,#00ff1d 76px,#00ff1c 84px,#06ff1b 92px,#0eff1b 100px,#18ff1a 108px,#22ff19 116px,#2eff18 124px,#3bff18 132px,#4aff17 140px,#59ff16 148px,#69ff15 156px,#7bff14 164px,#8fff13 172px,#a4ff12 180px,#baff11 188px,#d2ff10 196px,#ecff0e 204px,#fff60d 212px,#ffdc0a 220px,#ffc608 228px,#ffb306 236px,#ffa105 244px,#ff9203 252px,#ff8402 260px,#ff7801 268px,#ff6d01 276px,#ff6300 284px,#ff5a00 292px,#ff5100 300px);"></div>
<div class="b" style="left:0;top:42px;width:618px;height:2px;background:linear-gradient(90deg,#00ff20 77px,#00ff1f 85px,#06ff1f 93px,#0fff1e 101px,#18ff1d 109px,#23ff1d 117px,#2fff1c 125px,#3dff1b 133px,#4bff1a 141px,#5bff1a 149px,#6bff19 157px,#7eff18 165px,#91ff17 173px,#a6ff16 181px,#bdff15 189px,#d6ff14 197px,#f0ff13 205px,#fff210 213px,#ffd90e 221px,#ffc30b 229px,#ffb009 237px,#ff9f07 245px,#ff8f06 253px,#ff8204 261px,#ff7603 269px,#ff6b02 277px,#ff6101 285px,#ff5801 293px,#ff5000 301px,#ff4800 309px,#ff4100 317px);"></div>
<div class="b" style="left:0;top:44px;width:618px;height:2px;background:linear-gradient(90deg,#00ff23 78px,#00ff23 86px,#07ff22 94px,#0fff22 102px,#19ff21 110px,#24ff20 118px,#30ff20 126px,#3eff1f 134px,#4cff1e 142px,#5cff1d 150px,#6dff1d 158px,#80ff1c 166px,#94ff1b 174px,#a9ff1a 182px,#c0ff19 190px,#d9ff18 198px,#f4ff17 206px,#ffee14 214px,#ffd511 222px,#ffbf0f 230px,#ffad0c 238px,#ff9c0a 246px,#ff8d08 254px,#ff7f07 262px,#ff7405 270px,#ff6904 278px,#ff5f03 286px,#ff5602 294px,#ff4e01 302px,#ff4701 310px,#ff4000 318px,#ff3a00 326px,#ff3400 334px);"></div>
<div class="b" style="left:0;top:46px;width:618px;height:2px;background:linear-gradient(90deg,#00ff27 78px,#00ff26 86px,#06ff26 94px,#0fff25 102px,#19ff25 110px,#24ff24 118px,#30ff24 126px,#3dff23 134px,#4cff22 142px,#5cff22 150px,#6dff21 158px,#7fff20 166px,#93ff1f 174px,#a9ff1e 182px,#c0ff1e 190px,#daff1d 198px,#f5ff1c 206px,#ffed19 214px,#ffd415 222px,#ffbf12 230px,#ffac10 238px,#ff9b0d 246px,#ff8c0b 254px,#ff7f0a 262px,#ff7308 270px,#ff6807 278px,#ff5e05 286px,#ff5504 294px,#ff4d03 302px,#ff4602 310px,#ff3f02 318px,#ff3901 326px,#ff3300 334px,#ff2e00 342px,#ff2900 350px);"></div>
<div class="b" style="left:0;top:48px;width:618px;height:2px;background:linear-gradient(90deg,#00ff2a 79px,#00ff2a 87px,#07ff29 95px,#0fff29 103px,#19ff29 111px,#24ff28 119px,#31ff28 127px,#3fff27 135px,#4dff26 143px,#5dff26 151px,#6fff25 159px,#82ff24 167px,#96ff24 175px,#acff23 183px,#c4ff22 191px,#ddff21 199px,#f9ff21 207px,#ffe91d 215px,#ffd019 223px,#ffbb16 231px,#ffa913 239px,#ff9810 247px,#ff890e 255px,#ff7c0c 263px,#ff700a 271px,#ff6609 279px,#ff5c07 287px,#ff5306 295px,#ff4b05 303px,#ff4404 311px,#ff3e03 319px,#ff3702 327px,#ff3202 335px,#ff2d01 343px,#ff2800 351px,#ff2300 359px,#ff1f00 367px,#ff1c00 375px);"></div>
<div class="b" style="left:0;top:50px;width:618px;height:2px;background:linear-gradient(90deg,#00ff2e 80px,#00ff2e 88px,#07ff2d 96px,#10ff2d 104px,#1aff2c 112px,#25ff2c 120px,#32ff2c 128px,#40ff2b 136px,#4fff2b 144px,#5fff2a 152px,#71ff2a 160px,#84ff29 168px,#99ff28 176px,#afff28 184px,#c7ff27 192px,#e1ff26 200px,#feff26 208px,#ffe521 216px,#ffcd1d 224px,#ffb819 232px,#ffa616 240px,#ff9514 248px,#ff8711 256px,#ff7a0f 264px,#ff6e0d 272px,#ff640b 280px,#ff5a0a 288px,#ff5208 296px,#ff4a07 304px,#ff4306 312px,#ff3c05 320px,#ff3604 328px,#ff3003 336px,#ff2b02 344px,#ff2702 352px,#ff2201 360px,#ff1e00 368px,#ff1b00 376px,#ff1700 384px,#ff1400 392px);"></div>
<div class="b" style="left:0;top:52px;width:618px;height:2px;background:linear-gradient(90deg,#00ff32 80px,#00ff32 88px,#06ff31 96px,#0fff31 104px,#19ff31 112px,#25ff30 120px,#31ff30 128px,#3fff30 136px,#4eff2f 144px,#5fff2f 152px,#71ff2e 160px,#84ff2e 168px,#99ff2d 176px,#afff2d 184px,#c7ff2c 192px,#e2ff2c 200px,#feff2b 208px,#ffe426 216px,#ffcc22 224px,#ffb71e 232px,#ffa51a 240px,#ff9417 248px,#ff8614 256px,#ff7912 264px,#ff6d10 272px,#ff630e 280px,#ff590c 288px,#ff510b 296px,#ff4909 304px,#ff4208 312px,#ff3b07 320px,#ff3506 328px,#ff3005 336px,#ff2b04 344px,#ff2603 352px,#ff2202 360px,#ff1e02 368px,#ff1a01 376px,#ff1701 384px,#ff1300 392px,#ff1100 400px,#ff0e00 408px);"></div>
<div class="b" style="left:0;top:54px;width:618px;height:2px;background:linear-gradient(90deg,#00ff36 81px,#00ff35 89px,#07ff35 97px,#10ff35 105px,#1aff35 113px,#26ff35 121px,#32ff34 129px,#41ff34 137px,#50ff34 145px,#61ff33 153px,#73ff33 161px,#86ff33 169px,#9bff32 177px,#b2ff32 185px,#cbff32 193px,#e6ff31 201px,#fffb30 209px,#ffe02a 217px,#ffc826 225px,#ffb421 233px,#ffa21e 241px,#ff921a 249px,#ff8317 257px,#ff7715 265px,#ff6b12 273px,#ff6110 281px,#ff570e 289px,#ff4f0d 297px,#ff470b 305px,#ff400a 313px,#ff3a09 321px,#ff3407 329px,#ff2e06 337px,#ff2905 345px,#ff2504 353px,#ff2104 361px,#ff1d03 369px,#ff1902 377px,#ff1602 385px,#ff1301 393px,#ff1001 401px,#ff0d00 409px,#ff0b00 417px,#ff0800 425px);"></div>
<div class="b" style="left:0;top:56px;width:618px;height:2px;background:linear-gradient(90deg,#00ff3a 81px,#00ff3a 89px,#06ff39 97px,#0fff39 105px,#19ff39 113px,#25ff39 121px,#32ff39 129px,#40ff39 137px,#4fff38 145px,#60ff38 153px,#72ff38 161px,#86ff38 169px,#9bff38 177px,#b2ff37 185px,#cbff37 193px,#e6ff37 201px,#fffb36 209px,#ffdf30 217px,#ffc82a 225px,#ffb326 233px,#ffa122 241px,#ff911e 249px,#ff821b 257px,#ff7618 265px,#ff6a16 273px,#ff6013 281px,#ff5711 289px,#ff4e0f 297px,#ff460e 305px,#ff3f0c 313px,#ff390b 321px,#ff3309 329px,#ff2e08 337px,#ff2907 345px,#ff2406 353px,#ff2005 361px,#ff1c04 369px,#ff1804 377px,#ff1503 385px,#ff1202 393px,#ff0f02 401px,#ff0d01 409px,#ff0a01 417px,#ff0800 425px,#ff0600 433px,#ff0400 441px,#ff0200 449px);"></div>
<div class="b" style="left:0;top:58px;width:618px;height:2px;background:linear-gradient(90deg,#00ff3e 82px,#00ff3e 90px,#07ff3e 98px,#10ff3e 106px,#1aff3e 114px,#26ff3d 122px,#33ff3d 130px,#41ff3d 138px,#51ff3d 146px,#62ff3d 154px,#74ff3d 162px,#88ff3d 170px,#9eff3d 178px,#b5ff3d 186px,#cfff3d 194px,#eaff3d 202px,#fff63b 210px,#ffdb34 218px,#ffc42e 226px,#ffb02a 234px,#ff9e25 242px,#ff8e21 250px,#ff801e 258px,#ff731b 266px,#ff6818 274px,#ff5e16 282px,#ff5514 290px,#ff4c12 298px,#ff4510 306px,#ff3e0e 314px,#ff370d 322px,#ff320b 330px,#ff2c0a 338px,#ff2709 346px,#ff2308 354px,#ff1f07 362px,#ff1b06 370px,#ff1705 378px,#ff1404 386px,#ff1104 394px,#ff0e03 402px,#ff0c02 410px,#ff0902 418px,#ff0701 426px,#ff0501 434px,#ff0400 442px,#ff0200 450px,#ff0100 458px,#ff0000 466px);"></div>
<div class="b" style="left:0;top:60px;width:618px;height:2px;background:linear-gradient(90deg,#00ff42 83px,#00ff42 91px,#07ff42 99px,#10ff42 107px,#1bff42 115px,#27ff42 123px,#34ff42 131px,#43ff42 139px,#53ff42 147px,#64ff42 155px,#76ff42 163px,#8bff43 171px,#a1ff43 179px,#b9ff43 187px,#d2ff43 195px,#eeff43 203px,#fff240 211px,#ffd739 219px,#ffc033 227px,#ffac2e 235px,#ff9b29 243px,#ff8b25 251px,#ff7d21 259px,#ff711e 267px,#ff661b 275px,#ff5c19 283px,#ff5316 291px,#ff4b14 299px,#ff4312 307px,#ff3c10 315px,#ff360f 323px,#ff300d 331px,#ff2b0c 339px,#ff260b 347px,#ff2209 355px,#ff1e08 363px,#ff1a07 371px,#ff1606 379px,#ff1306 387px,#ff1005 395px,#ff0d04 403px,#ff0b03 411px,#ff0903 419px,#ff0702 427px,#ff0502 435px,#ff0301 443px,#ff0101 451px,#ff0000 459px,#ff0000 467px,#ff0000 475px);"></div>
<div class="b" style="left:0;top:62px;width:618px;height:2px;background:linear-gradient(90deg,#00ff46 83px,#00ff46 91px,#07ff46 99px,#10ff47 107px,#1aff47 115px,#26ff47 123px,#34ff47 131px,#42ff47 139px,#52ff47 147px,#63ff48 155px,#76ff48 163px,#8bff48 171px,#a1ff48 179px,#b9ff49 187px,#d3ff49 195px,#efff49 203px,#fff145 211px,#ffd63e 219px,#ffbf38 227px,#ffab32 235px,#ff9a2d 243px,#ff8a29 251px,#ff7c25 259px,#ff7022 267px,#ff651e 275px,#ff5b1c 283px,#ff5219 291px,#ff4a17 299px,#ff4215 307px,#ff3b13 315px,#ff3511 323px,#ff300f 331px,#ff2a0e 339px,#ff260d 347px,#ff210b 355px,#ff1d0a 363px,#ff1909 371px,#ff1608 379px,#ff1307 387px,#ff1006 395px,#ff0d05 403px,#ff0a05 411px,#ff0804 419px,#ff0603 427px,#ff0403 435px,#ff0302 443px,#ff0102 451px,#ff0001 459px,#ff0001 467px,#ff0001 475px);"></div>
<div class="b" style="left:0;top:64px;width:618px;height:2px;background:linear-gradient(90deg,#00ff4b 84px,#00ff4b 92px,#07ff4b 100px,#10ff4b 108px,#1bff4c 116px,#27ff4c 124px,#35ff4c 132px,#44ff4c 140px,#54ff4d 148px,#65ff4d 156px,#78ff4e 164px,#8dff4e 172px,#a4ff4e 180px,#bcff4f 188px,#d7ff4f 196px,#f3ff50 204px,#ffed4b 212px,#ffd343 220px,#ffbc3c 228px,#ffa836 236px,#ff9731 244px,#ff882c 252px,#ff7a28 260px,#ff6e25 268px,#ff6321 276px,#ff591e 284px,#ff501c 292px,#ff4819 300px,#ff4117 308px,#ff3a15 316px,#ff3413 324px,#ff2e11 332px,#ff2910 340px,#ff240e 348px,#ff200d 356px,#ff1c0c 364px,#ff180b 372px,#ff150a 380px,#ff1209 388px,#ff0f08 396px,#ff0c07 404px,#ff0a06 412px,#ff0705 420px,#ff0505 428px,#ff0404 436px,#ff0203 444px,#ff0103 452px,#ff0002 460px,#ff0002 468px);"></div>
<div class="b" style="left:0;top:66px;width:618px;height:2px;background:linear-gradient(90deg,#00ff4f 84px,#00ff4f 92px,#07ff50 100px,#10ff50 108px,#1bff50 116px,#27ff51 124px,#34ff51 132px,#43ff52 140px,#53ff52 148px,#65ff53 156px,#78ff53 164px,#8dff54 172px,#a4ff54 180px,#bcff55 188px,#d7ff56 196px,#f4ff56 204px,#ffec51 212px,#ffd248 220px,#ffbb41 228px,#ffa73b 236px,#ff9635 244px,#ff8731 252px,#ff792c 260px,#ff6d28 268px,#ff6225 276px,#ff5822 284px,#ff4f1f 292px,#ff471c 300px,#ff401a 308px,#ff3918 316px,#ff3316 324px,#ff2d14 332px,#ff2812 340px,#ff2411 348px,#ff1f0f 356px,#ff1b0e 364px,#ff180d 372px,#ff140b 380px,#ff110a 388px,#ff0e09 396px,#ff0c08 404px,#ff0907 412px,#ff0707 420px,#ff0506 428px,#ff0305 436px,#ff0205 444px,#ff0004 452px,#ff0003 460px,#ff0003 468px);"></div>
<div class="b" style="left:0;top:68px;width:618px;height:2px;background:linear-gradient(90deg,#00ff54 85px,#00ff54 93px,#07ff55 101px,#10ff55 109px,#1bff56 117px,#28ff56 125px,#35ff57 133px,#44ff57 141px,#55ff58 149px,#67ff59 157px,#7aff59 165px,#90ff5a 173px,#a7ff5b 181px,#c0ff5c 189px,#dbff5d 197px,#f9ff5e 205px,#ffe856 213px,#ffce4d 221px,#ffb846 229px,#ffa43f 237px,#ff9339 245px,#ff8434 253px,#ff7630 261px,#ff6a2c 269px,#ff6028 277px,#ff5625 285px,#ff4d21 293px,#ff451f 301px,#ff3e1c 309px,#ff381a 317px,#ff3218 325px,#ff2c16 333px,#ff2714 341px,#ff2212 349px,#ff1e11 357px,#ff1a10 365px,#ff170e 373px,#ff130d 381px,#ff100c 389px,#ff0d0b 397px,#ff0b0a 405px,#ff0809 413px,#ff0608 421px,#ff0407 429px,#ff0306 437px,#ff0106 445px,#ff0005 453px,#ff0004 461px,#ff0004 469px);"></div>
<div class="b" style="left:0;top:70px;width:618px;height:2px;background:linear-gradient(90deg,#00ff58 86px,#00ff59 94px,#07ff5a 102px,#11ff5a 110px,#1cff5b 118px,#29ff5b 126px,#37ff5c 134px,#46ff5d 142px,#57ff5e 150px,#69ff5f 158px,#7dff5f 166px,#92ff60 174px,#aaff61 182px,#c3ff62 190px,#dfff64 198px,#fdff65 206px,#ffe35b 214px,#ffca52 222px,#ffb44a 230px,#ffa143 238px,#ff903d 246px,#ff8138 254px,#ff7433 262px,#ff682f 270px,#ff5e2b 278px,#ff5427 286px,#ff4b24 294px,#ff4421 302px,#ff3c1f 310px,#ff361c 318px,#ff301a 326px,#ff2b18 334px,#ff2616 342px,#ff2114 350px,#ff1d13 358px,#ff1911 366px,#ff1610 374px,#ff120f 382px,#ff0f0d 390px,#ff0d0c 398px,#ff0a0b 406px,#ff080a 414px,#ff0609 422px,#ff0408 430px,#ff0208 438px,#ff0107 446px,#ff0006 454px,#ff0005 462px);"></div>
<div class="b" style="left:0;top:72px;width:618px;height:2px;background:linear-gradient(90deg,#00ff5d 86px,#00ff5e 94px,#07ff5f 102px,#10ff5f 110px,#1bff60 118px,#28ff61 126px,#36ff62 134px,#45ff63 142px,#56ff64 150px,#68ff65 158px,#7cff66 166px,#92ff67 174px,#aaff68 182px,#c3ff69 190px,#dfff6b 198px,#feff6c 206px,#ffe261 214px,#ffc958 222px,#ffb350 230px,#ffa048 238px,#ff8f42 246px,#ff803c 254px,#ff7337 262px,#ff6733 270px,#ff5d2e 278px,#ff532b 286px,#ff4b27 294px,#ff4324 302px,#ff3c22 310px,#ff351f 318px,#ff2f1d 326px,#ff2a1b 334px,#ff2519 342px,#ff2017 350px,#ff1c15 358px,#ff1813 366px,#ff1512 374px,#ff1211 382px,#ff0f0f 390px,#ff0c0e 398px,#ff0a0d 406px,#ff070c 414px,#ff050b 422px,#ff030a 430px,#ff0209 438px,#ff0008 446px,#ff0007 454px,#ff0007 462px);"></div>
<div class="b" style="left:0;top:74px;width:618px;height:2px;background:linear-gradient(90deg,#00ff62 87px,#00ff63 95px,#07ff64 103px,#11ff65 111px,#1cff66 119px,#29ff67 127px,#37ff68 135px,#47ff69 143px,#58ff6a 151px,#6aff6b 159px,#7fff6c 167px,#95ff6e 175px,#adff6f 183px,#c7ff71 191px,#e4ff72 199px,#fffb72 207px,#ffde67 215px,#ffc55d 223px,#ffb054 231px,#ff9d4c 239px,#ff8c46 247px,#ff7e40 255px,#ff713b 263px,#ff6536 271px,#ff5b32 279px,#ff512e 287px,#ff492a 295px,#ff4127 303px,#ff3a24 311px,#ff3421 319px,#ff2e1f 327px,#ff291d 335px,#ff241b 343px,#ff1f19 351px,#ff1b17 359px,#ff1715 367px,#ff1414 375px,#ff1112 383px,#ff0e11 391px,#ff0b10 399px,#ff090e 407px,#ff070d 415px,#ff050c 423px,#ff030b 431px,#ff010a 439px,#ff0009 447px,#ff0009 455px,#ff0008 463px);"></div>
<div class="b" style="left:0;top:76px;width:618px;height:2px;background:linear-gradient(90deg,#00ff67 88px,#00ff68 96px,#08ff69 104px,#12ff6a 112px,#1dff6b 120px,#2aff6c 128px,#38ff6e 136px,#48ff6f 144px,#5aff70 152px,#6dff72 160px,#81ff73 168px,#98ff75 176px,#b0ff76 184px,#cbff78 192px,#e8ff7a 200px,#fff778 208px,#ffda6c 216px,#ffc162 224px,#ffac59 232px,#ff9a51 240px,#ff894a 248px,#ff7b44 256px,#ff6e3e 264px,#ff6339 272px,#ff5835 280px,#ff4f31 288px,#ff472d 296px,#ff3f2a 304px,#ff3827 312px,#ff3224 320px,#ff2c21 328px,#ff271f 336px,#ff221d 344px,#ff1e1b 352px,#ff1a19 360px,#ff1617 368px,#ff1315 376px,#ff1014 384px,#ff0d13 392px,#ff0a11 400px,#ff0810 408px,#ff060f 416px,#ff040e 424px,#ff020d 432px,#ff010c 440px,#ff000b 448px,#ff000a 456px);"></div>
<div class="b" style="left:0;top:78px;width:618px;height:2px;background:linear-gradient(90deg,#00ff6c 88px,#00ff6d 96px,#07ff6e 104px,#11ff70 112px,#1cff71 120px,#29ff72 128px,#38ff73 136px,#48ff75 144px,#59ff76 152px,#6cff78 160px,#81ff7a 168px,#98ff7c 176px,#b0ff7e 184px,#cbff80 192px,#e9ff82 200px,#fff67f 208px,#ffd973 216px,#ffc068 224px,#ffab5e 232px,#ff9956 240px,#ff884f 248px,#ff7a48 256px,#ff6d42 264px,#ff623d 272px,#ff5838 280px,#ff4e34 288px,#ff4630 296px,#ff3e2d 304px,#ff382a 312px,#ff3127 320px,#ff2c24 328px,#ff2722 336px,#ff221f 344px,#ff1d1d 352px,#ff191b 360px,#ff1619 368px,#ff1218 376px,#ff0f16 384px,#ff0c14 392px,#ff0a13 400px,#ff0812 408px,#ff0510 416px,#ff030f 424px,#ff020e 432px,#ff000d 440px,#ff000c 448px,#ff000b 456px);"></div>
<div class="b" style="left:0;top:80px;width:618px;height:2px;background:linear-gradient(90deg,#00ff72 89px,#00ff73 97px,#08ff74 105px,#12ff75 113px,#1dff77 121px,#2bff78 129px,#39ff7a 137px,#49ff7b 145px,#5bff7d 153px,#6eff7f 161px,#84ff81 169px,#9bff83 177px,#b4ff85 185px,#cfff88 193px,#edff8a 201px,#fff185 209px,#ffd578 217px,#ffbd6d 225px,#ffa863 233px,#ff965a 241px,#ff8553 249px,#ff774c 257px,#ff6b46 265px,#ff6041 273px,#ff553c 281px,#ff4c37 289px,#ff4433 297px,#ff3d30 305px,#ff362c 313px,#ff3029 321px,#ff2a26 329px,#ff2524 337px,#ff2121 345px,#ff1c1f 353px,#ff181d 361px,#ff151b 369px,#ff1119 377px,#ff0e18 385px,#ff0c16 393px,#ff0915 401px,#ff0713 409px,#ff0512 417px,#ff0311 425px,#ff0110 433px,#ff000f 441px,#ff000e 449px,#ff000d 457px);"></div>
<div class="b" style="left:0;top:82px;width:618px;height:2px;background:linear-gradient(90deg,#00ff77 89px,#00ff78 97px,#07ff7a 105px,#11ff7b 113px,#1dff7d 121px,#2aff7e 129px,#39ff80 137px,#49ff82 145px,#5bff84 153px,#6eff86 161px,#83ff88 169px,#9bff8a 177px,#b4ff8d 185px,#cfff90 193px,#eeff92 201px,#fff08d 209px,#ffd47f 217px,#ffbc73 225px,#ffa769 233px,#ff9560 241px,#ff8558 249px,#ff7651 257px,#ff6a4a 265px,#ff5f45 273px,#ff553f 281px,#ff4b3b 289px,#ff4337 297px,#ff3c33 305px,#ff352f 313px,#ff2f2c 321px,#ff2a29 329px,#ff2426 337px,#ff2024 345px,#ff1c22 353px,#ff181f 361px,#ff141d 369px,#ff111c 377px,#ff0e1a 385px,#ff0b18 393px,#ff0917 401px,#ff0615 409px,#ff0414 417px,#ff0212 425px,#ff0111 433px,#ff0010 441px,#ff000f 449px,#ff000e 457px);"></div>
<div class="b" style="left:0;top:84px;width:618px;height:2px;background:linear-gradient(90deg,#00ff7c 90px,#00ff7e 98px,#08ff7f 106px,#12ff81 114px,#1eff83 122px,#2bff85 130px,#3aff87 138px,#4aff89 146px,#5cff8b 154px,#70ff8d 162px,#86ff90 170px,#9eff92 178px,#b7ff95 186px,#d3ff98 194px,#f2ff9b 202px,#ffec93 210px,#ffd084 218px,#ffb878 226px,#ffa36d 234px,#ff9164 242px,#ff825c 250px,#ff7454 258px,#ff674e 266px,#ff5c48 274px,#ff5243 282px,#ff4a3e 290px,#ff423a 298px,#ff3a36 306px,#ff3432 314px,#ff2e2f 322px,#ff282c 330px,#ff2329 338px,#ff1f26 346px,#ff1a24 354px,#ff1721 362px,#ff131f 370px,#ff101d 378px,#ff0d1c 386px,#ff0a1a 394px,#ff0818 402px,#ff0617 410px,#ff0415 418px,#ff0214 426px,#ff0113 434px,#ff0012 442px,#ff0010 450px);"></div>
<div class="b" style="left:0;top:86px;width:618px;height:2px;background:linear-gradient(90deg,#00ff82 91px,#00ff84 99px,#08ff86 107px,#12ff87 115px,#1eff89 123px,#2cff8b 131px,#3bff8d 139px,#4cff90 147px,#5eff92 155px,#73ff95 163px,#89ff97 171px,#a1ff9a 179px,#bbff9e 187px,#d8ffa1 195px,#f7ffa4 203px,#ffe798 211px,#ffcc8a 219px,#ffb47d 227px,#ffa072 235px,#ff8e68 243px,#ff7f60 251px,#ff7158 259px,#ff6552 267px,#ff5a4b 275px,#ff5046 283px,#ff4841 291px,#ff403d 299px,#ff3938 307px,#ff3235 315px,#ff2c31 323px,#ff272e 331px,#ff222b 339px,#ff1d28 347px,#ff1926 355px,#ff1524 363px,#ff1221 371px,#ff0f1f 379px,#ff0c1d 387px,#ff091c 395px,#ff071a 403px,#ff0518 411px,#ff0317 419px,#ff0116 427px,#ff0014 435px,#ff0013 443px,#ff0012 451px);"></div>
<div class="b" style="left:0;top:88px;width:618px;height:2px;background:linear-gradient(90deg,#00ff88 91px,#00ff8a 99px,#07ff8b 107px,#12ff8d 115px,#1eff90 123px,#2bff92 131px,#3bff94 139px,#4bff97 147px,#5eff99 155px,#72ff9c 163px,#88ff9f 171px,#a1ffa2 179px,#bbffa6 187px,#d8ffa9 195px,#f8ffad 203px,#ffe6a0 211px,#ffcb91 219px,#ffb384 227px,#ff9f78 235px,#ff8d6e 243px,#ff7e65 251px,#ff705d 259px,#ff6456 267px,#ff5950 275px,#ff4f4a 283px,#ff4745 291px,#ff3f40 299px,#ff383c 307px,#ff3138 315px,#ff2b34 323px,#ff2631 331px,#ff212e 339px,#ff1d2b 347px,#ff1928 355px,#ff1526 363px,#ff1124 371px,#ff0e22 379px,#ff0b20 387px,#ff091e 395px,#ff071c 403px,#ff041a 411px,#ff0319 419px,#ff0117 427px,#ff0016 435px,#ff0015 443px,#ff0013 451px);"></div>
<div class="b" style="left:0;top:90px;width:618px;height:2px;background:linear-gradient(90deg,#00ff8e 92px,#00ff90 100px,#08ff92 108px,#12ff94 116px,#1fff96 124px,#2dff99 132px,#3cff9b 140px,#4dff9e 148px,#60ffa1 156px,#75ffa4 164px,#8bffa7 172px,#a4ffab 180px,#bfffaf 188px,#dcffb3 196px,#fdffb7 204px,#ffe2a6 212px,#ffc796 220px,#ffb089 228px,#ff9c7d 236px,#ff8a72 244px,#ff7b69 252px,#ff6e61 260px,#ff625a 268px,#ff5753 276px,#ff4d4d 284px,#ff4548 292px,#ff3d43 300px,#ff363f 308px,#ff303b 316px,#ff2a37 324px,#ff2533 332px,#ff2030 340px,#ff1b2d 348px,#ff172b 356px,#ff1428 364px,#ff1026 372px,#ff0d24 380px,#ff0b21 388px,#ff0820 396px,#ff061e 404px,#ff041c 412px,#ff021a 420px,#ff0119 428px,#ff0017 436px,#ff0016 444px);"></div>
<div class="b" style="left:0;top:92px;width:618px;height:2px;background:linear-gradient(90deg,#00ff94 92px,#00ff96 100px,#07ff98 108px,#12ff9a 116px,#1eff9d 124px,#2cffa0 132px,#3bffa2 140px,#4dffa5 148px,#5fffa9 156px,#74ffac 164px,#8bffb0 172px,#a4ffb3 180px,#bfffb8 188px,#ddffbc 196px,#feffc1 204px,#ffe1ae 212px,#ffc69e 220px,#ffaf8f 228px,#ff9b83 236px,#ff8978 244px,#ff7a6e 252px,#ff6d66 260px,#ff615e 268px,#ff5657 276px,#ff4d51 284px,#ff444c 292px,#ff3c47 300px,#ff3542 308px,#ff2f3e 316px,#ff293a 324px,#ff2436 332px,#ff1f33 340px,#ff1b30 348px,#ff172d 356px,#ff132b 364px,#ff1028 372px,#ff0d26 380px,#ff0a24 388px,#ff0822 396px,#ff0520 404px,#ff031e 412px,#ff021c 420px,#ff001b 428px,#ff0019 436px,#ff0018 444px);"></div>
<div class="b" style="left:0;top:94px;width:618px;height:2px;background:linear-gradient(90deg,#00ff9a 93px,#00ff9c 101px,#08ff9f 109px,#12ffa1 117px,#1fffa4 125px,#2dffa7 133px,#3dffaa 141px,#4effad 149px,#62ffb1 157px,#77ffb4 165px,#8effb8 173px,#a7ffbd 181px,#c3ffc1 189px,#e1ffc6 197px,#fffbc8 205px,#ffdcb4 213px,#ffc2a3 221px,#ffab94 229px,#ff9788 237px,#ff867c 245px,#ff7773 253px,#ff6a6a 261px,#ff5e62 269px,#ff545b 277px,#ff4a55 285px,#ff424f 293px,#ff3a4a 301px,#ff3445 309px,#ff2d41 317px,#ff283d 325px,#ff2339 333px,#ff1e35 341px,#ff1a32 349px,#ff162f 357px,#ff122d 365px,#ff0f2a 373px,#ff0c28 381px,#ff0926 389px,#ff0723 397px,#ff0522 405px,#ff0320 413px,#ff011e 421px,#ff001c 429px,#ff001b 437px,#ff0019 445px);"></div>
<div class="b" style="left:0;top:96px;width:618px;height:2px;background:linear-gradient(90deg,#00ffa0 94px,#00ffa3 102px,#08ffa5 110px,#13ffa8 118px,#20ffab 126px,#2effae 134px,#3effb2 142px,#50ffb5 150px,#64ffb9 158px,#79ffbd 166px,#91ffc1 174px,#abffc6 182px,#c7ffcb 190px,#e6ffd0 198px,#fff6cf 206px,#ffd8ba 214px,#ffbea9 222px,#ffa79a 230px,#ff948c 238px,#ff8381 246px,#ff7577 254px,#ff676e 262px,#ff5c66 270px,#ff525f 278px,#ff4858 286px,#ff4052 294px,#ff394d 302px,#ff3248 310px,#ff2c43 318px,#ff263f 326px,#ff213b 334px,#ff1d38 342px,#ff1835 350px,#ff1532 358px,#ff112f 366px,#ff0e2c 374px,#ff0b2a 382px,#ff0827 390px,#ff0625 398px,#ff0423 406px,#ff0221 414px,#ff0120 422px,#ff001e 430px,#ff001c 438px);"></div>
<div class="b" style="left:0;top:98px;width:618px;height:2px;background:linear-gradient(90deg,#00ffa6 94px,#00ffa9 102px,#08ffac 110px,#12ffaf 118px,#1fffb2 126px,#2effb6 134px,#3effb9 142px,#50ffbd 150px,#63ffc1 158px,#79ffc6 166px,#91ffca 174px,#abffcf 182px,#c7ffd4 190px,#e7ffda 198px,#fff5d8 206px,#ffd7c2 214px,#ffbdb0 222px,#ffa6a0 230px,#ff9393 238px,#ff8287 246px,#ff737c 254px,#ff6673 262px,#ff5b6b 270px,#ff5163 278px,#ff485c 286px,#ff3f56 294px,#ff3850 302px,#ff314b 310px,#ff2b47 318px,#ff2642 326px,#ff203e 334px,#ff1c3b 342px,#ff1837 350px,#ff1434 358px,#ff1031 366px,#ff0d2f 374px,#ff0a2c 382px,#ff082a 390px,#ff0627 398px,#ff0325 406px,#ff0223 414px,#ff0022 422px,#ff0020 430px,#ff001e 438px);"></div>
<div class="b" style="left:0;top:100px;width:618px;height:2px;background:linear-gradient(90deg,#00ffad 95px,#00ffb0 103px,#08ffb3 111px,#13ffb6 119px,#20ffba 127px,#2fffbe 135px,#3fffc1 143px,#51ffc6 151px,#65ffca 159px,#7bffcf 167px,#94ffd4 175px,#aeffd9 183px,#cbffdf 191px,#ebffe5 199px,#fff0de 207px,#ffd2c8 215px,#ffb9b6 223px,#ffa3a6 231px,#ff9098 239px,#ff7f8b 247px,#ff7180 255px,#ff6477 263px,#ff596e 271px,#ff4f67 279px,#ff4660 287px,#ff3d59 295px,#ff3654 303px,#ff304e 311px,#ff2a4a 319px,#ff2445 327px,#ff1f41 335px,#ff1b3d 343px,#ff173a 351px,#ff1337 359px,#ff0f34 367px,#ff0c31 375px,#ff0a2e 383px,#ff072c 391px,#ff0529 399px,#ff0327 407px,#ff0125 415px,#ff0023 423px,#ff0021 431px,#ff0020 439px);"></div>
<div class="b" style="left:0;top:102px;width:618px;height:2px;background:linear-gradient(90deg,#00ffb4 96px,#00ffb7 104px,#09ffbb 112px,#14ffbe 120px,#21ffc2 128px,#30ffc6 136px,#41ffca 144px,#53ffce 152px,#68ffd3 160px,#7effd8 168px,#97ffde 176px,#b2ffe3 184px,#d0ffea 192px,#f0fff0 200px,#ffebe5 208px,#ffcece 216px,#ffb5bb 224px,#ff9fab 232px,#ff8c9c 240px,#ff7c90 248px,#ff6e85 256px,#ff617b 264px,#ff5672 272px,#ff4c6a 280px,#ff4463 288px,#ff3c5d 296px,#ff3457 304px,#ff2e51 312px,#ff284c 320px,#ff2348 328px,#ff1e44 336px,#ff1940 344px,#ff153c 352px,#ff1239 360px,#ff0e36 368px,#ff0b33 376px,#ff0930 384px,#ff062e 392px,#ff042b 400px,#ff0229 408px,#ff0127 416px,#ff0025 424px,#ff0023 432px);"></div>
<div class="b" style="left:0;top:104px;width:618px;height:2px;background:linear-gradient(90deg,#00ffbb 96px,#00ffbe 104px,#08ffc2 112px,#13ffc5 120px,#20ffc9 128px,#2fffce 136px,#40ffd2 144px,#53ffd7 152px,#67ffdc 160px,#7effe1 168px,#97ffe7 176px,#b2ffed 184px,#d0fff4 192px,#f1fffb 200px,#ffeaee 208px,#ffcdd7 216px,#ffb4c3 224px,#ff9eb2 232px,#ff8ba3 240px,#ff7b96 248px,#ff6d8a 256px,#ff6080 264px,#ff5577 272px,#ff4b6f 280px,#ff4367 288px,#ff3b61 296px,#ff345a 304px,#ff2d55 312px,#ff2750 320px,#ff224b 328px,#ff1d47 336px,#ff1943 344px,#ff153f 352px,#ff113c 360px,#ff0e38 368px,#ff0b35 376px,#ff0833 384px,#ff0630 392px,#ff042e 400px,#ff022b 408px,#ff0029 416px,#ff0027 424px,#ff0025 432px);"></div>
<div class="b" style="left:0;top:106px;width:618px;height:2px;background:linear-gradient(90deg,#00ffc2 97px,#00ffc5 105px,#09ffc9 113px,#14ffcd 121px,#21ffd2 129px,#31ffd6 137px,#42ffdb 145px,#55ffe0 153px,#69ffe6 161px,#80ffeb 169px,#9afff2 177px,#b6fff8 185px,#d4feff 193px,#eef7ff 201px,#ffe5f5 209px,#ffc8dd 217px,#ffb0c8 225px,#ff9ab7 233px,#ff88a8 241px,#ff789a 249px,#ff6a8f 257px,#ff5e84 265px,#ff537b 273px,#ff4972 281px,#ff416b 289px,#ff3964 297px,#ff325e 305px,#ff2b58 313px,#ff2653 321px,#ff214e 329px,#ff1c49 337px,#ff1845 345px,#ff1441 353px,#ff103e 361px,#ff0d3b 369px,#ff0a38 377px,#ff0735 385px,#ff0532 393px,#ff032f 401px,#ff012d 409px,#ff002b 417px,#ff0029 425px,#ff0027 433px);"></div>
<div class="b" style="left:0;top:108px;width:618px;height:2px;background:linear-gradient(90deg,#00ffc9 97px,#00ffcd 105px,#08ffd1 113px,#13ffd5 121px,#21ffd9 129px,#30ffde 137px,#41ffe3 145px,#54ffe9 153px,#69ffef 161px,#80fff5 169px,#9afffc 177px,#b3fbff 185px,#ccf4ff 193px,#e5edff 201px,#ffe4fe 209px,#ffc7e6 217px,#ffafd0 225px,#ff99be 233px,#ff87ae 241px,#ff77a1 249px,#ff6994 257px,#ff5d89 265px,#ff5280 273px,#ff4877 281px,#ff406f 289px,#ff3868 297px,#ff3161 305px,#ff2b5c 313px,#ff2556 321px,#ff2051 329px,#ff1b4d 337px,#ff1748 345px,#ff1344 353px,#ff0f41 361px,#ff0c3d 369px,#ff093a 377px,#ff0737 385px,#ff0534 393px,#ff0332 401px,#ff012f 409px,#ff002d 417px,#ff002b 425px);"></div>
<div class="b" style="left:0;top:110px;width:618px;height:2px;background:linear-gradient(90deg,#00ffd0 98px,#00ffd4 106px,#09ffd9 114px,#14ffdd 122px,#22ffe2 130px,#31ffe7 138px,#43ffed 146px,#56fff3 154px,#6bfff9 162px,#83feff 170px,#98f8ff 178px,#aff0ff 186px,#c7e9ff 194px,#e0e2ff 202px,#f9dbff 210px,#ffc3ec 218px,#ffabd6 226px,#ff96c3 234px,#ff84b3 242px,#ff74a5 250px,#ff6799 258px,#ff5b8d 266px,#ff5084 274px,#ff467b 282px,#ff3e73 290px,#ff366b 298px,#ff2f65 306px,#ff295f 314px,#ff2359 322px,#ff1e54 330px,#ff1a4f 338px,#ff164b 346px,#ff1247 354px,#ff0e43 362px,#ff0b3f 370px,#ff083c 378px,#ff0639 386px,#ff0436 394px,#ff0234 402px,#ff0031 410px,#ff002f 418px,#ff002d 426px);"></div>
<div class="b" style="left:0;top:112px;width:618px;height:2px;background:linear-gradient(90deg,#00ffd8 99px,#00ffdc 107px,#09ffe1 115px,#15ffe6 123px,#23ffeb 131px,#33fff1 139px,#44fff6 147px,#58fffd 155px,#6cfbff 163px,#80f4ff 171px,#95edff 179px,#abe6ff 187px,#c2dfff 195px,#dad8ff 203px,#f3d1ff 211px,#ffbff2 219px,#ffa7dc 227px,#ff92c9 235px,#ff81b8 243px,#ff71aa 251px,#ff649d 259px,#ff5892 267px,#ff4e87 275px,#ff447e 283px,#ff3c76 291px,#ff346f 299px,#ff2e68 307px,#ff2862 315px,#ff225c 323px,#ff1d57 331px,#ff1952 339px,#ff144d 347px,#ff1149 355px,#ff0d45 363px,#ff0a42 371px,#ff083e 379px,#ff053b 387px,#ff0338 395px,#ff0136 403px,#ff0033 411px,#ff0031 419px,#ff002e 427px);"></div>
<div class="b" style="left:0;top:114px;width:618px;height:2px;background:linear-gradient(90deg,#00ffdf 99px,#00ffe4 107px,#08ffe9 115px,#14ffee 123px,#22fff3 131px,#32fff9 139px,#44ffff 147px,#55f8ff 155px,#68f2ff 163px,#7bebff 171px,#90e4ff 179px,#a5ddff 187px,#bbd6ff 195px,#d2cfff 203px,#eac8ff 211px,#ffbefb 219px,#ffa6e4 227px,#ff91d0 235px,#ff80bf 243px,#ff70b0 251px,#ff63a3 259px,#ff5797 267px,#ff4d8c 275px,#ff4383 283px,#ff3b7b 291px,#ff3373 299px,#ff2d6c 307px,#ff2765 315px,#ff215f 323px,#ff1c5a 331px,#ff1855 339px,#ff1450 347px,#ff104c 355px,#ff0d48 363px,#ff0a44 371px,#ff0741 379px,#ff053e 387px,#ff033b 395px,#ff0138 403px,#ff0035 411px,#ff0033 419px);"></div>
<div class="b" style="left:0;top:116px;width:618px;height:2px;background:linear-gradient(90deg,#00ffe7 100px,#00ffec 108px,#09fff1 116px,#15fff7 124px,#23fffd 132px,#33fbff 140px,#43f5ff 148px,#54eeff 156px,#66e8ff 164px,#79e1ff 172px,#8ddbff 180px,#a1d4ff 188px,#b7cdff 196px,#cec6ff 204px,#e5bfff 212px,#fdb8ff 220px,#ffa2e9 228px,#ff8ed5 236px,#ff7cc4 244px,#ff6db5 252px,#ff60a7 260px,#ff559b 268px,#ff4a90 276px,#ff4187 284px,#ff397e 292px,#ff3276 300px,#ff2b6f 308px,#ff2568 316px,#ff2062 324px,#ff1b5d 332px,#ff1758 340px,#ff1353 348px,#ff0f4f 356px,#ff0c4b 364px,#ff0947 372px,#ff0643 380px,#ff0440 388px,#ff023d 396px,#ff003a 404px,#ff0037 412px,#ff0035 420px);"></div>
<div class="b" style="left:0;top:118px;width:618px;height:2px;background:linear-gradient(90deg,#00fff0 101px,#00fff5 109px,#0afffa 117px,#16feff 125px,#23f8ff 133px,#32f2ff 141px,#42ecff 149px,#52e5ff 157px,#64dfff 165px,#77d8ff 173px,#8ad2ff 181px,#9ecbff 189px,#b3c5ff 197px,#c9beff 205px,#e0b7ff 213px,#f8b0ff 221px,#ff9eef 229px,#ff8ada 237px,#ff79c9 245px,#ff6bb9 253px,#ff5eab 261px,#ff529f 269px,#ff4894 277px,#ff3f8a 285px,#ff3781 293px,#ff3079 301px,#ff2972 309px,#ff246b 317px,#ff1e65 325px,#ff1a60 333px,#ff155a 341px,#ff1156 349px,#ff0e51 357px,#ff0b4d 365px,#ff0849 373px,#ff0545 381px,#ff0342 389px,#ff013f 397px,#ff003c 405px,#ff0039 413px,#ff0036 421px);"></div>
<div class="b" style="left:0;top:120px;width:618px;height:2px;background:linear-gradient(90deg,#00fff7 101px,#00fffd 109px,#09fbff 117px,#14f5ff 125px,#21f0ff 133px,#30eaff 141px,#3fe3ff 149px,#4fddff 157px,#60d7ff 165px,#72d1ff 173px,#85caff 181px,#99c4ff 189px,#adbdff 197px,#c2b6ff 205px,#d8b0ff 213px,#efa9ff 221px,#ff9df7 229px,#ff89e2 237px,#ff78d0 245px,#ff69c0 253px,#ff5db1 261px,#ff51a5 269px,#ff4799 277px,#ff3e8f 285px,#ff3686 293px,#ff2f7e 301px,#ff2976 309px,#ff236f 317px,#ff1e69 325px,#ff1963 333px,#ff155e 341px,#ff1159 349px,#ff0d54 357px,#ff0a50 365px,#ff074c 373px,#ff0548 381px,#ff0345 389px,#ff0141 397px,#ff003e 405px,#ff003b 413px);"></div>
<div class="b" style="left:0;top:122px;width:618px;height:2px;background:linear-gradient(90deg,#00feff 102px,#00f8ff 110px,#09f3ff 118px,#14edff 126px,#21e7ff 134px,#2fe1ff 142px,#3edbff 150px,#4ed5ff 158px,#5fcfff 166px,#70c8ff 174px,#83c2ff 182px,#96bcff 190px,#aab5ff 198px,#beafff 206px,#d4a8ff 214px,#eaa1ff 222px,#ff99fd 230px,#ff86e7 238px,#ff75d5 246px,#ff67c4 254px,#ff5ab6 262px,#ff4fa9 270px,#ff459d 278px,#ff3c93 286px,#ff348a 294px,#ff2d81 302px,#ff2779 310px,#ff2172 318px,#ff1c6c 326px,#ff1866 334px,#ff1360 342px,#ff105b 350px,#ff0c57 358px,#ff0952 366px,#ff074e 374px,#ff044a 382px,#ff0247 390px,#ff0043 398px,#ff0040 406px,#ff003d 414px);"></div>
<div class="b" style="left:0;top:124px;width:618px;height:2px;background:linear-gradient(90deg,#00f6ff 102px,#00f1ff 110px,#08ebff 118px,#13e5ff 126px,#1fdfff 134px,#2ddaff 142px,#3cd4ff 150px,#4bceff 158px,#5bc8ff 166px,#6cc1ff 174px,#7ebbff 182px,#91b5ff 190px,#a4afff 198px,#b8a8ff 206px,#cda2ff 214px,#e29bff 222px,#f994ff 230px,#ff85ef 238px,#ff74dc 246px,#ff66cb 254px,#ff59bc 262px,#ff4eae 270px,#ff44a3 278px,#ff3b98 286px,#ff338e 294px,#ff2c86 302px,#ff267e 310px,#ff2076 318px,#ff1b70 326px,#ff1769 334px,#ff1364 342px,#ff0f5f 350px,#ff0c5a 358px,#ff0955 366px,#ff0651 374px,#ff044d 382px,#ff0249 390px,#ff0046 398px,#ff0043 406px,#ff0040 414px);"></div>
<div class="b" style="left:0;top:126px;width:618px;height:2px;background:linear-gradient(90deg,#00eeff 103px,#00e8ff 111px,#08e3ff 119px,#13ddff 127px,#1fd8ff 135px,#2dd2ff 143px,#3bccff 151px,#4ac6ff 159px,#5ac0ff 167px,#6abaff 175px,#7cb4ff 183px,#8eaeff 191px,#a1a7ff 199px,#b4a1ff 207px,#c99bff 215px,#de94ff 223px,#f48eff 231px,#ff81f4 239px,#ff71e1 247px,#ff63cf 255px,#ff56c0 263px,#ff4bb3 271px,#ff42a7 279px,#ff399c 287px,#ff3292 295px,#ff2b89 303px,#ff2581 311px,#ff1f79 319px,#ff1a73 327px,#ff166c 335px,#ff1266 343px,#ff0e61 351px,#ff0b5c 359px,#ff0858 367px,#ff0553 375px,#ff034f 383px,#ff014c 391px,#ff0048 399px,#ff0045 407px);"></div>
<div class="b" style="left:0;top:128px;width:618px;height:2px;background:linear-gradient(90deg,#00e6ff 104px,#00e1ff 112px,#09dbff 120px,#13d6ff 128px,#1fd0ff 136px,#2ccaff 144px,#3ac5ff 152px,#49bfff 160px,#58b9ff 168px,#69b3ff 176px,#7aadff 184px,#8ba7ff 192px,#9ea1ff 200px,#b19aff 208px,#c594ff 216px,#d98eff 224px,#ef87ff 232px,#ff7efa 240px,#ff6ee6 248px,#ff60d4 256px,#ff54c5 264px,#ff49b7 272px,#ff40aa 280px,#ff379f 288px,#ff3095 296px,#ff298c 304px,#ff2384 312px,#ff1e7c 320px,#ff1975 328px,#ff146f 336px,#ff1069 344px,#ff0d64 352px,#ff0a5f 360px,#ff075a 368px,#ff0456 376px,#ff0252 384px,#ff004e 392px,#ff004a 400px,#ff0047 408px);"></div>
<div class="b" style="left:0;top:130px;width:618px;height:2px;background:linear-gradient(90deg,#00dfff 104px,#00daff 112px,#08d4ff 120px,#12cfff 128px,#1ec9ff 136px,#2ac4ff 144px,#38beff 152px,#46b8ff 160px,#55b3ff 168px,#65adff 176px,#76a7ff 184px,#87a1ff 192px,#999bff 200px,#ab95ff 208px,#bf8eff 216px,#d388ff 224px,#e782ff 232px,#fc7cff 240px,#ff6ded 248px,#ff5fdb 256px,#ff53cb 264px,#ff48bd 272px,#ff3fb0 280px,#ff36a4 288px,#ff2f9a 296px,#ff2891 304px,#ff2288 312px,#ff1d80 320px,#ff1879 328px,#ff1473 336px,#ff106d 344px,#ff0c67 352px,#ff0962 360px,#ff065d 368px,#ff0459 376px,#ff0254 384px,#ff0050 392px,#ff004d 400px,#ff0049 408px);"></div>
<div class="b" style="left:0;top:132px;width:618px;height:2px;background:linear-gradient(90deg,#00d8ff 105px,#00d3ff 113px,#08cdff 121px,#12c8ff 129px,#1ec2ff 137px,#2abdff 145px,#37b7ff 153px,#45b2ff 161px,#54acff 169px,#64a6ff 177px,#74a0ff 185px,#859aff 193px,#9695ff 201px,#a88fff 209px,#bb88ff 217px,#cf82ff 225px,#e37cff 233px,#f776ff 241px,#ff6af2 249px,#ff5cdf 257px,#ff50cf 265px,#ff46c1 273px,#ff3cb4 281px,#ff34a8 289px,#ff2d9e 297px,#ff2694 305px,#ff218b 313px,#ff1b84 321px,#ff177c 329px,#ff1276 337px,#ff0e6f 345px,#ff0b6a 353px,#ff0864 361px,#ff055f 369px,#ff035b 377px,#ff0157 385px,#ff0053 393px,#ff004f 401px);"></div>
<div class="b" style="left:0;top:134px;width:618px;height:2px;background:linear-gradient(90deg,#00d2ff 105px,#00ccff 113px,#07c7ff 121px,#11c2ff 129px,#1cbcff 137px,#28b7ff 145px,#35b2ff 153px,#43acff 161px,#51a6ff 169px,#60a1ff 177px,#709bff 185px,#8095ff 193px,#918fff 201px,#a389ff 209px,#b583ff 217px,#c87dff 225px,#dc77ff 233px,#f071ff 241px,#ff69f9 249px,#ff5be6 257px,#ff4fd5 265px,#ff45c7 273px,#ff3bb9 281px,#ff33ad 289px,#ff2ca2 297px,#ff2699 305px,#ff2090 313px,#ff1a88 321px,#ff1680 329px,#ff1279 337px,#ff0e73 345px,#ff0a6d 353px,#ff0768 361px,#ff0563 369px,#ff035e 377px,#ff0159 385px,#ff0055 393px,#ff0051 401px);"></div>
<div class="b" style="left:0;top:136px;width:618px;height:2px;background:linear-gradient(90deg,#00cbff 106px,#00c6ff 114px,#07c1ff 122px,#11bbff 130px,#1cb6ff 138px,#28b1ff 146px,#35abff 154px,#42a6ff 162px,#50a0ff 170px,#5f9bff 178px,#6e95ff 186px,#7e8fff 194px,#8f8aff 202px,#a084ff 210px,#b27eff 218px,#c578ff 226px,#d872ff 234px,#eb6cff 242px,#ff66fe 250px,#ff58eb 258px,#ff4dda 266px,#ff42cb 274px,#ff39bd 282px,#ff31b1 290px,#ff2aa6 298px,#ff249c 306px,#ff1e93 314px,#ff198b 322px,#ff1483 330px,#ff107c 338px,#ff0d76 346px,#ff0970 354px,#ff076a 362px,#ff0465 370px,#ff0260 378px,#ff005c 386px,#ff0057 394px,#ff0054 402px);"></div>
<div class="b" style="left:0;top:138px;width:618px;height:2px;background:linear-gradient(90deg,#00c5ff 107px,#00bfff 115px,#08baff 123px,#11b5ff 131px,#1cb0ff 139px,#28abff 147px,#34a5ff 155px,#41a0ff 163px,#4f9aff 171px,#5e95ff 179px,#6d8fff 187px,#7c8aff 195px,#8d84ff 203px,#9e7eff 211px,#af79ff 219px,#c173ff 227px,#d46dff 235px,#e767ff 243px,#fb61ff 251px,#ff56f0 259px,#ff4ade 267px,#ff40cf 275px,#ff37c1 283px,#ff2fb5 291px,#ff28aa 299px,#ff22a0 307px,#ff1d96 315px,#ff188e 323px,#ff1386 331px,#ff0f7f 339px,#ff0c78 347px,#ff0872 355px,#ff066d 363px,#ff0367 371px,#ff0163 379px,#ff005e 387px,#ff005a 395px);"></div>
<div class="b" style="left:0;top:140px;width:618px;height:2px;background:linear-gradient(90deg,#00bfff 107px,#00baff 115px,#07b5ff 123px,#10b0ff 131px,#1babff 139px,#26a5ff 147px,#32a0ff 155px,#3f9bff 163px,#4c95ff 171px,#5a90ff 179px,#698bff 187px,#7985ff 195px,#887fff 203px,#997aff 211px,#aa74ff 219px,#bc6fff 227px,#ce69ff 235px,#e063ff 243px,#f45dff 251px,#ff54f7 259px,#ff49e5 267px,#ff3fd5 275px,#ff36c7 283px,#ff2eba 291px,#ff28af 299px,#ff21a4 307px,#ff1c9b 315px,#ff1792 323px,#ff128a 331px,#ff0e83 339px,#ff0b7c 347px,#ff0876 355px,#ff0570 363px,#ff036b 371px,#ff0166 379px,#ff0061 387px,#ff005c 395px);"></div>
<div class="b" style="left:0;top:142px;width:618px;height:2px;background:linear-gradient(90deg,#00b9ff 108px,#00b4ff 116px,#07afff 124px,#10aaff 132px,#1ba5ff 140px,#26a0ff 148px,#329bff 156px,#3e95ff 164px,#4b90ff 172px,#598bff 180px,#6885ff 188px,#7780ff 196px,#867aff 204px,#9675ff 212px,#a76fff 220px,#b86aff 228px,#ca64ff 236px,#dc5eff 244px,#ef59ff 252px,#ff52fb 260px,#ff47e9 268px,#ff3dd9 276px,#ff34cb 284px,#ff2dbe 292px,#ff26b2 300px,#ff20a8 308px,#ff1a9e 316px,#ff1595 324px,#ff118d 332px,#ff0d86 340px,#ff0a7f 348px,#ff0778 356px,#ff0473 364px,#ff026d 372px,#ff0068 380px,#ff0063 388px,#ff005f 396px);"></div>
<div class="b" style="left:0;top:144px;width:618px;height:2px;background:linear-gradient(90deg,#00b3ff 109px,#00aeff 117px,#07a9ff 125px,#10a4ff 133px,#1b9fff 141px,#269aff 149px,#3195ff 157px,#3e90ff 165px,#4b8bff 173px,#5886ff 181px,#6680ff 189px,#757bff 197px,#8476ff 205px,#9470ff 213px,#a46bff 221px,#b565ff 229px,#c760ff 237px,#d95aff 245px,#eb55ff 253px,#fe4fff 261px,#ff44ee 269px,#ff3bdd 277px,#ff32cf 285px,#ff2bc2 293px,#ff24b6 301px,#ff1eab 309px,#ff19a1 317px,#ff1498 325px,#ff1090 333px,#ff0c88 341px,#ff0982 349px,#ff067b 357px,#ff0375 365px,#ff016f 373px,#ff006a 381px,#ff0065 389px);"></div>
<div class="b" style="left:0;top:146px;width:618px;height:2px;background:linear-gradient(90deg,#00aeff 109px,#00a9ff 117px,#07a5ff 125px,#0fa0ff 133px,#199bff 141px,#2496ff 149px,#2f91ff 157px,#3b8cff 165px,#4886ff 173px,#5581ff 181px,#637cff 189px,#7277ff 197px,#8072ff 205px,#906cff 213px,#a067ff 221px,#b061ff 229px,#c15cff 237px,#d357ff 245px,#e551ff 253px,#f74cff 261px,#ff43f4 269px,#ff3ae3 277px,#ff31d4 285px,#ff2ac7 293px,#ff23bb 301px,#ff1db0 309px,#ff18a6 317px,#ff139c 325px,#ff0f94 333px,#ff0b8c 341px,#ff0885 349px,#ff057f 357px,#ff0378 365px,#ff0173 373px,#ff006d 381px,#ff0068 389px);"></div>
<div class="b" style="left:0;top:148px;width:618px;height:2px;background:linear-gradient(90deg,#00a9ff 110px,#00a4ff 118px,#079fff 126px,#109aff 134px,#1996ff 142px,#2491ff 150px,#2f8cff 158px,#3b87ff 166px,#4782ff 174px,#547dff 182px,#6277ff 190px,#7072ff 198px,#7f6dff 206px,#8e68ff 214px,#9d63ff 222px,#ad5dff 230px,#be58ff 238px,#cf53ff 246px,#e14dff 254px,#f348ff 262px,#ff41f9 270px,#ff37e8 278px,#ff2fd8 286px,#ff28cb 294px,#ff21be 302px,#ff1cb3 310px,#ff17a9 318px,#ff12a0 326px,#ff0e97 334px,#ff0a8f 342px,#ff0788 350px,#ff0481 358px,#ff027b 366px,#ff0075 374px,#ff0070 382px,#ff006b 390px);"></div>
<div class="b" style="left:0;top:150px;width:618px;height:2px;background:linear-gradient(90deg,#00a4ff 110px,#00a0ff 118px,#069bff 126px,#0f96ff 134px,#1891ff 142px,#228cff 150px,#2d87ff 158px,#3983ff 166px,#457eff 174px,#5279ff 182px,#5f74ff 190px,#6d6eff 198px,#7b69ff 206px,#8a64ff 214px,#995fff 222px,#a95aff 230px,#b955ff 238px,#ca4fff 246px,#db4aff 254px,#ed45ff 262px,#ff40ff 270px,#ff36ee 278px,#ff2ede 286px,#ff27d0 294px,#ff20c3 302px,#ff1bb8 310px,#ff16ae 318px,#ff11a4 326px,#ff0d9b 334px,#ff0a93 342px,#ff078c 350px,#ff0485 358px,#ff027e 366px,#ff0078 374px,#ff0073 382px,#ff006e 390px);"></div>
<div class="b" style="left:0;top:152px;width:618px;height:2px;background:linear-gradient(90deg,#009fff 111px,#009bff 119px,#0696ff 127px,#0f91ff 135px,#188cff 143px,#2288ff 151px,#2d83ff 159px,#387eff 167px,#4479ff 175px,#5174ff 183px,#5e6fff 191px,#6b6aff 199px,#7965ff 207px,#8860ff 215px,#975bff 223px,#a656ff 231px,#b651ff 239px,#c64cff 247px,#d747ff 255px,#e941ff 263px,#fa3cff 271px,#ff34f2 279px,#ff2ce2 287px,#ff25d4 295px,#ff1fc7 303px,#ff19bb 311px,#ff14b1 319px,#ff10a7 327px,#ff0c9e 335px,#ff0996 343px,#ff068e 351px,#ff0387 359px,#ff0181 367px,#ff007b 375px,#ff0075 383px);"></div>
<div class="b" style="left:0;top:154px;width:618px;height:2px;background:linear-gradient(90deg,#009aff 112px,#0096ff 120px,#0791ff 128px,#0f8dff 136px,#1888ff 144px,#2283ff 152px,#2d7eff 160px,#387aff 168px,#4475ff 176px,#5070ff 184px,#5d6bff 192px,#6a66ff 200px,#7861ff 208px,#865cff 216px,#9557ff 224px,#a452ff 232px,#b34dff 240px,#c348ff 248px,#d443ff 256px,#e53eff 264px,#f639ff 272px,#ff32f6 280px,#ff2ae6 288px,#ff23d8 296px,#ff1dcb 304px,#ff18bf 312px,#ff13b4 320px,#ff0faa 328px,#ff0ba1 336px,#ff0799 344px,#ff0591 352px,#ff028a 360px,#ff0084 368px,#ff007d 376px,#ff0078 384px);"></div>
<div class="b" style="left:0;top:156px;width:618px;height:2px;background:linear-gradient(90deg,#0096ff 112px,#0092ff 120px,#068dff 128px,#0e89ff 136px,#1784ff 144px,#217fff 152px,#2b7bff 160px,#3676ff 168px,#4171ff 176px,#4d6cff 184px,#5a68ff 192px,#6763ff 200px,#745eff 208px,#8259ff 216px,#9154ff 224px,#9f4fff 232px,#af4aff 240px,#be45ff 248px,#ce40ff 256px,#df3bff 264px,#f036ff 272px,#ff31fd 280px,#ff29ec 288px,#ff22dd 296px,#ff1cd0 304px,#ff17c4 312px,#ff12b9 320px,#ff0eaf 328px,#ff0aa5 336px,#ff079d 344px,#ff0495 352px,#ff028e 360px,#ff0087 368px,#ff0081 376px,#ff007b 384px);"></div>
<div class="b" style="left:0;top:158px;width:618px;height:2px;background:linear-gradient(90deg,#0092ff 113px,#008dff 121px,#0689ff 129px,#0e84ff 137px,#1780ff 145px,#217bff 153px,#2b76ff 161px,#3672ff 169px,#416dff 177px,#4d68ff 185px,#5964ff 193px,#665fff 201px,#735aff 209px,#8155ff 217px,#8f51ff 225px,#9d4cff 233px,#ac47ff 241px,#bb42ff 249px,#cb3dff 257px,#db38ff 265px,#ec33ff 273px,#fd2fff 281px,#ff27f0 289px,#ff21e1 297px,#ff1bd4 305px,#ff15c7 313px,#ff11bc 321px,#ff0db2 329px,#ff09a8 337px,#ff06a0 345px,#ff0398 353px,#ff0190 361px,#ff008a 369px,#ff0083 377px);"></div>
<div class="b" style="left:0;top:160px;width:618px;height:2px;background:linear-gradient(90deg,#008eff 113px,#0089ff 121px,#0685ff 129px,#0d81ff 137px,#167cff 145px,#1f78ff 153px,#2973ff 161px,#346eff 169px,#3f6aff 177px,#4a65ff 185px,#5661ff 193px,#635cff 201px,#7057ff 209px,#7d52ff 217px,#8b4eff 225px,#9949ff 233px,#a844ff 241px,#b73fff 249px,#c63bff 257px,#d636ff 265px,#e631ff 273px,#f72cff 281px,#ff26f6 289px,#ff20e7 297px,#ff1ad9 305px,#ff14cc 313px,#ff10c1 321px,#ff0cb6 329px,#ff08ad 337px,#ff05a4 345px,#ff039c 353px,#ff0194 361px,#ff008d 369px,#ff0086 377px);"></div>
<div class="b" style="left:0;top:162px;width:618px;height:2px;background:linear-gradient(90deg,#008aff 114px,#0085ff 122px,#0681ff 130px,#0d7cff 138px,#1678ff 146px,#1f74ff 154px,#296fff 162px,#336bff 170px,#3e66ff 178px,#4a62ff 186px,#555dff 194px,#6258ff 202px,#6e54ff 210px,#7c4fff 218px,#894aff 226px,#9746ff 234px,#a541ff 242px,#b43cff 250px,#c338ff 258px,#d333ff 266px,#e32eff 274px,#f32aff 282px,#ff24fa 290px,#ff1eea 298px,#ff18dc 306px,#ff13d0 314px,#ff0fc4 322px,#ff0bb9 330px,#ff07b0 338px,#ff04a7 346px,#ff029e 354px,#ff0097 362px,#ff0090 370px,#ff0089 378px);"></div>
<div class="b" style="left:0;top:164px;width:618px;height:2px;background:linear-gradient(90deg,#0085ff 115px,#0081ff 123px,#067dff 131px,#0e79ff 139px,#1674ff 147px,#1f70ff 155px,#296bff 163px,#3367ff 171px,#3e62ff 179px,#495eff 187px,#5559ff 195px,#6155ff 203px,#6d50ff 211px,#7a4cff 219px,#8747ff 227px,#9543ff 235px,#a33eff 243px,#b239ff 251px,#c035ff 259px,#d030ff 267px,#df2cff 275px,#ef27ff 283px,#ff22fe 291px,#ff1cee 299px,#ff17e0 307px,#ff12d3 315px,#ff0dc7 323px,#ff09bd 331px,#ff06b3 339px,#ff03aa 347px,#ff01a1 355px,#ff0099 363px,#ff0092 371px);"></div>
<div class="b" style="left:0;top:166px;width:618px;height:2px;background:linear-gradient(90deg,#0082ff 115px,#007eff 123px,#0579ff 131px,#0d75ff 139px,#1571ff 147px,#1e6dff 155px,#2768ff 163px,#3164ff 171px,#3c5fff 179px,#475bff 187px,#5257ff 195px,#5e52ff 203px,#6a4eff 211px,#7749ff 219px,#8445ff 227px,#9140ff 235px,#9f3cff 243px,#ad37ff 251px,#bc33ff 259px,#cb2eff 267px,#da2aff 275px,#ea25ff 283px,#fa21ff 291px,#ff1bf4 299px,#ff16e5 307px,#ff11d8 315px,#ff0ccc 323px,#ff09c1 331px,#ff05b7 339px,#ff03ae 347px,#ff01a5 355px,#ff009d 363px,#ff0096 371px);"></div>
<div class="b" style="left:0;top:168px;width:618px;height:2px;background:linear-gradient(90deg,#007eff 116px,#007aff 124px,#0676ff 132px,#0d72ff 140px,#156dff 148px,#1e69ff 156px,#2765ff 164px,#3160ff 172px,#3b5cff 180px,#4658ff 188px,#5153ff 196px,#5d4fff 204px,#694bff 212px,#7546ff 220px,#8242ff 228px,#8f3dff 236px,#9d39ff 244px,#ab34ff 252px,#b930ff 260px,#c82cff 268px,#d727ff 276px,#e623ff 284px,#f61eff 292px,#ff19f8 300px,#ff14e9 308px,#ff0fdc 316px,#ff0bcf 324px,#ff08c4 332px,#ff04ba 340px,#ff02b1 348px,#ff00a8 356px,#ff00a0 364px,#ff0098 372px);"></div>
<div class="b" style="left:0;top:170px;width:618px;height:2px;background:linear-gradient(90deg,#007aff 117px,#0076ff 125px,#0672ff 133px,#0d6eff 141px,#156aff 149px,#1e66ff 157px,#2761ff 165px,#315dff 173px,#3b59ff 181px,#4654ff 189px,#5150ff 197px,#5c4cff 205px,#6848ff 213px,#7443ff 221px,#813fff 229px,#8e3bff 237px,#9b36ff 245px,#a932ff 253px,#b72dff 261px,#c529ff 269px,#d425ff 277px,#e321ff 285px,#f31cff 293px,#ff18fc 301px,#ff13ed 309px,#ff0edf 317px,#ff0ad3 325px,#ff06c7 333px,#ff03bd 341px,#ff01b4 349px,#ff00ab 357px,#ff00a3 365px);"></div>
<div class="b" style="left:0;top:172px;width:618px;height:2px;background:linear-gradient(90deg,#0077ff 117px,#0073ff 125px,#056fff 133px,#0c6bff 141px,#1467ff 149px,#1d63ff 157px,#265eff 165px,#2f5aff 173px,#3956ff 181px,#4452ff 189px,#4e4eff 197px,#5a49ff 205px,#6545ff 213px,#7141ff 221px,#7d3dff 229px,#8a38ff 237px,#9734ff 245px,#a530ff 253px,#b22cff 261px,#c127ff 269px,#cf23ff 277px,#de1fff 285px,#ed1bff 293px,#fd17ff 301px,#ff12f2 309px,#ff0de4 317px,#ff09d8 325px,#ff06cc 333px,#ff03c1 341px,#ff01b8 349px,#ff00af 357px,#ff00a6 365px);"></div>
<div class="b" style="left:0;top:174px;width:618px;height:2px;background:linear-gradient(90deg,#0074ff 118px,#0070ff 126px,#066cff 134px,#0c68ff 142px,#1463ff 150px,#1d5fff 158px,#255bff 166px,#2f57ff 174px,#3953ff 182px,#434fff 190px,#4e4bff 198px,#5946ff 206px,#6442ff 214px,#703eff 222px,#7c3aff 230px,#8836ff 238px,#9532ff 246px,#a22dff 254px,#b029ff 262px,#be25ff 270px,#cc21ff 278px,#db1dff 286px,#ea19ff 294px,#f915ff 302px,#ff10f6 310px,#ff0ce8 318px,#ff08db 326px,#ff05cf 334px,#ff02c5 342px,#ff00bb 350px,#ff00b2 358px,#ff00a9 366px);"></div>
<div class="b" style="left:0;top:176px;width:618px;height:2px;background:linear-gradient(90deg,#0071ff 118px,#006dff 126px,#0569ff 134px,#0c65ff 142px,#1361ff 150px,#1b5dff 158px,#2459ff 166px,#2d55ff 174px,#3751ff 182px,#414cff 190px,#4c48ff 198px,#5644ff 206px,#6240ff 214px,#6d3cff 222px,#7938ff 230px,#8534ff 238px,#9230ff 246px,#9f2bff 254px,#ac27ff 262px,#ba23ff 270px,#c81fff 278px,#d61bff 286px,#e417ff 294px,#f313ff 302px,#ff0ffb 310px,#ff0bed 318px,#ff07e0 326px,#ff04d4 334px,#ff01c9 342px,#ff00bf 350px,#ff00b5 358px);"></div>
<div class="b" style="left:0;top:178px;width:618px;height:2px;background:linear-gradient(90deg,#006dff 119px,#0069ff 127px,#0565ff 135px,#0c62ff 143px,#135eff 151px,#1b5aff 159px,#2456ff 167px,#2d52ff 175px,#374eff 183px,#414aff 191px,#4b46ff 199px,#5641ff 207px,#613dff 215px,#6c39ff 223px,#7835ff 231px,#8431ff 239px,#902dff 247px,#9d29ff 255px,#aa25ff 263px,#b721ff 271px,#c51dff 279px,#d319ff 287px,#e115ff 295px,#f012ff 303px,#ff0eff 311px,#ff0af0 319px,#ff06e3 327px,#ff03d7 335px,#ff01cc 343px,#ff00c2 351px,#ff00b8 359px);"></div>
<div class="b" style="left:0;top:180px;width:618px;height:2px;background:linear-gradient(90deg,#006aff 120px,#0066ff 128px,#0562ff 136px,#0c5eff 144px,#135bff 152px,#1b57ff 160px,#2453ff 168px,#2d4fff 176px,#364bff 184px,#4047ff 192px,#4a43ff 200px,#553fff 208px,#603bff 216px,#6b37ff 224px,#7633ff 232px,#822fff 240px,#8e2bff 248px,#9b27ff 256px,#a823ff 264px,#b51fff 272px,#c21bff 280px,#d017ff 288px,#de14ff 296px,#ed10ff 304px,#fb0cff 312px,#ff08f4 320px,#ff05e7 328px,#ff02da 336px,#ff00cf 344px,#ff00c5 352px,#ff00bb 360px);"></div>
<div class="b" style="left:0;top:182px;width:618px;height:2px;background:linear-gradient(90deg,#0067ff 120px,#0064ff 128px,#0560ff 136px,#0b5cff 144px,#1358ff 152px,#1a54ff 160px,#2350ff 168px,#2c4cff 176px,#3549ff 184px,#3e45ff 192px,#4841ff 200px,#533dff 208px,#5d39ff 216px,#6835ff 224px,#7431ff 232px,#7f2dff 240px,#8b29ff 248px,#9725ff 256px,#a421ff 264px,#b11eff 272px,#be1aff 280px,#cc16ff 288px,#d912ff 296px,#e80fff 304px,#f60bff 312px,#ff08f9 320px,#ff04ec 328px,#ff02df 336px,#ff00d4 344px,#ff00c9 352px);"></div>
<div class="b" style="left:0;top:184px;width:618px;height:2px;background:linear-gradient(90deg,#0064ff 121px,#0061ff 129px,#055dff 137px,#0b59ff 145px,#1355ff 153px,#1a51ff 161px,#234eff 169px,#2b4aff 177px,#3446ff 185px,#3e42ff 193px,#483eff 201px,#523aff 209px,#5c36ff 217px,#6733ff 225px,#722fff 233px,#7e2bff 241px,#8a27ff 249px,#9623ff 257px,#a21fff 265px,#af1cff 273px,#bc18ff 281px,#c914ff 289px,#d711ff 297px,#e50dff 305px,#f30aff 313px,#ff06fd 321px,#ff03ef 329px,#ff01e2 337px,#ff00d7 345px,#ff00cc 353px);"></div>
<div class="b" style="left:0;top:186px;width:618px;height:2px;background:linear-gradient(90deg,#0062ff 121px,#005eff 129px,#055aff 137px,#0b57ff 145px,#1253ff 153px,#194fff 161px,#214bff 169px,#2a48ff 177px,#3344ff 185px,#3c40ff 193px,#463cff 201px,#5038ff 209px,#5a35ff 217px,#6531ff 225px,#702dff 233px,#7b29ff 241px,#8625ff 249px,#9222ff 257px,#9e1eff 265px,#ab1aff 273px,#b817ff 281px,#c513ff 289px,#d210ff 297px,#e00cff 305px,#ee09ff 313px,#fc06ff 321px,#ff03f4 329px,#ff00e7 337px,#ff00db 345px,#ff00d0 353px);"></div>
<div class="b" style="left:0;top:188px;width:618px;height:2px;background:linear-gradient(90deg,#005fff 122px,#005bff 130px,#0558ff 138px,#0b54ff 146px,#1250ff 154px,#194cff 162px,#2149ff 170px,#2a45ff 178px,#3341ff 186px,#3c3eff 194px,#453aff 202px,#4f36ff 210px,#5932ff 218px,#642fff 226px,#6f2bff 234px,#7a27ff 242px,#8523ff 250px,#9120ff 258px,#9d1cff 266px,#a918ff 274px,#b515ff 282px,#c211ff 290px,#cf0eff 298px,#dd0bff 306px,#eb07ff 314px,#f904ff 322px,#ff02f7 330px,#ff00ea 338px,#ff00de 346px);"></div>
<div class="b" style="left:0;top:190px;width:618px;height:2px;background:linear-gradient(90deg,#005cff 123px,#0058ff 131px,#0555ff 139px,#0b51ff 147px,#124eff 155px,#194aff 163px,#2146ff 171px,#2a42ff 179px,#323fff 187px,#3b3bff 195px,#4537ff 203px,#4e34ff 211px,#5830ff 219px,#632cff 227px,#6d29ff 235px,#7825ff 243px,#8421ff 251px,#8f1eff 259px,#9b1aff 267px,#a717ff 275px,#b313ff 283px,#c010ff 291px,#cd0dff 299px,#da09ff 307px,#e806ff 315px,#f503ff 323px,#ff01fb 331px,#ff00ed 339px,#ff00e1 347px);"></div>
<div class="b" style="left:0;top:192px;width:618px;height:2px;background:linear-gradient(90deg,#005aff 123px,#0056ff 131px,#0453ff 139px,#0a4fff 147px,#114bff 155px,#1848ff 163px,#2044ff 171px,#2841ff 179px,#313dff 187px,#3a39ff 195px,#4336ff 203px,#4d32ff 211px,#562eff 219px,#612bff 227px,#6b27ff 235px,#7624ff 243px,#8120ff 251px,#8c1cff 259px,#9819ff 267px,#a316ff 275px,#b012ff 283px,#bc0fff 291px,#c90cff 299px,#d608ff 307px,#e305ff 315px,#f003ff 323px,#fe00ff 331px,#ff00f2 339px,#ff00e6 347px);"></div>
<div class="b" style="left:0;top:194px;width:618px;height:2px;background:linear-gradient(90deg,#0057ff 124px,#0054ff 132px,#0550ff 140px,#0b4cff 148px,#1149ff 156px,#1845ff 164px,#2042ff 172px,#283eff 180px,#313bff 188px,#3937ff 196px,#4333ff 204px,#4c30ff 212px,#562cff 220px,#6029ff 228px,#6a25ff 236px,#7422ff 244px,#7f1eff 252px,#8a1bff 260px,#9617ff 268px,#a214ff 276px,#ae11ff 284px,#ba0dff 292px,#c60aff 300px,#d307ff 308px,#e004ff 316px,#ed02ff 324px,#fb00ff 332px,#ff00f5 340px);"></div>
<div class="b" style="left:0;top:196px;width:618px;height:2px;background:linear-gradient(90deg,#0054ff 125px,#0051ff 133px,#054dff 141px,#0b4aff 149px,#1146ff 157px,#1943ff 165px,#203fff 173px,#283cff 181px,#3038ff 189px,#3935ff 197px,#4231ff 205px,#4b2eff 213px,#552aff 221px,#5f27ff 229px,#6923ff 237px,#7320ff 245px,#7e1cff 253px,#8919ff 261px,#9416ff 269px,#a012ff 277px,#ab0fff 285px,#b80cff 293px,#c409ff 301px,#d006ff 309px,#dd03ff 317px,#ea01ff 325px,#f800ff 333px,#ff00f9 341px);"></div>
<div class="b" style="left:0;top:198px;width:618px;height:2px;background:linear-gradient(90deg,#0052ff 125px,#004fff 133px,#044bff 141px,#0a48ff 149px,#1145ff 157px,#1841ff 165px,#1f3eff 173px,#273aff 181px,#2f37ff 189px,#3833ff 197px,#4030ff 205px,#4a2cff 213px,#5329ff 221px,#5d25ff 229px,#6722ff 237px,#711fff 245px,#7b1bff 253px,#8618ff 261px,#9115ff 269px,#9d11ff 277px,#a80eff 285px,#b40bff 293px,#c008ff 301px,#cc05ff 309px,#d903ff 317px,#e600ff 325px,#f300ff 333px,#ff00fe 341px);"></div>
<div class="b" style="left:0;top:200px;width:618px;height:2px;background:linear-gradient(90deg,#0050ff 126px,#004cff 134px,#0549ff 142px,#0a46ff 150px,#1142ff 158px,#183fff 166px,#1f3bff 174px,#2738ff 182px,#2f35ff 190px,#3731ff 198px,#402eff 206px,#492aff 214px,#5227ff 222px,#5c24ff 230px,#6620ff 238px,#701dff 246px,#7a19ff 254px,#8516ff 262px,#9013ff 270px,#9b10ff 278px,#a60dff 286px,#b20aff 294px,#be07ff 302px,#ca04ff 310px,#d602ff 318px,#e300ff 326px,#f000ff 334px);"></div>
<div class="b" style="left:0;top:202px;width:618px;height:2px;background:linear-gradient(90deg,#004eff 126px,#004bff 134px,#0447ff 142px,#0a44ff 150px,#1040ff 158px,#173dff 166px,#1e3aff 174px,#2636ff 182px,#2e33ff 190px,#3630ff 198px,#3e2cff 206px,#4729ff 214px,#5025ff 222px,#5a22ff 230px,#631fff 238px,#6d1cff 246px,#7818ff 254px,#8215ff 262px,#8d12ff 270px,#980fff 278px,#a30cff 286px,#ae09ff 294px,#ba06ff 302px,#c603ff 310px,#d201ff 318px,#df00ff 326px,#eb00ff 334px);"></div>
<div class="b" style="left:0;top:204px;width:618px;height:2px;background:linear-gradient(90deg,#004bff 127px,#0048ff 135px,#0445ff 143px,#0a42ff 151px,#103eff 159px,#173bff 167px,#1e38ff 175px,#2534ff 183px,#2d31ff 191px,#352eff 199px,#3e2aff 207px,#4727ff 215px,#5024ff 223px,#5920ff 231px,#631dff 239px,#6c1aff 247px,#7617ff 255px,#8114ff 263px,#8b11ff 271px,#960dff 279px,#a10bff 287px,#ac08ff 295px,#b805ff 303px,#c402ff 311px,#d000ff 319px,#dc00ff 327px,#e900ff 335px);"></div>
<div class="b" style="left:0;top:206px;width:618px;height:2px;background:linear-gradient(90deg,#0049ff 128px,#0046ff 136px,#0543ff 144px,#0a3fff 152px,#103cff 160px,#1739ff 168px,#1e36ff 176px,#2532ff 184px,#2d2fff 192px,#352cff 200px,#3e28ff 208px,#4625ff 216px,#4f22ff 224px,#581fff 232px,#621cff 240px,#6b18ff 248px,#7515ff 256px,#7f12ff 264px,#8a0fff 272px,#950cff 280px,#9f09ff 288px,#ab07ff 296px,#b604ff 304px,#c202ff 312px,#cd00ff 320px,#da00ff 328px,#e600ff 336px);"></div>
<div class="b" style="left:0;top:208px;width:618px;height:2px;background:linear-gradient(90deg,#0047ff 128px,#0044ff 136px,#0441ff 144px,#093eff 152px,#103aff 160px,#1637ff 168px,#1d34ff 176px,#2431ff 184px,#2c2dff 192px,#342aff 200px,#3c27ff 208px,#4524ff 216px,#4d21ff 224px,#561dff 232px,#601aff 240px,#6917ff 248px,#7314ff 256px,#7d11ff 264px,#870eff 272px,#920bff 280px,#9c08ff 288px,#a706ff 296px,#b303ff 304px,#be01ff 312px,#ca00ff 320px,#d600ff 328px);"></div>
<div class="b" style="left:0;top:210px;width:618px;height:2px;background:linear-gradient(90deg,#0045ff 129px,#0042ff 137px,#043fff 145px,#0a3cff 153px,#1038ff 161px,#1635ff 169px,#1d32ff 177px,#242fff 185px,#2c2cff 193px,#3428ff 201px,#3c25ff 209px,#4422ff 217px,#4d1fff 225px,#561cff 233px,#5f19ff 241px,#6816ff 249px,#7213ff 257px,#7c10ff 265px,#860dff 273px,#900aff 281px,#9b07ff 289px,#a605ff 297px,#b102ff 305px,#bc00ff 313px,#c700ff 321px,#d300ff 329px);"></div>
<div class="b" style="left:0;top:212px;width:618px;height:2px;background:linear-gradient(90deg,#0043ff 129px,#0040ff 137px,#043dff 145px,#093aff 153px,#0f37ff 161px,#1534ff 169px,#1c31ff 177px,#232dff 185px,#2b2aff 193px,#3227ff 201px,#3a24ff 209px,#4321ff 217px,#4b1eff 225px,#541bff 233px,#5d18ff 241px,#6615ff 249px,#7012ff 257px,#790fff 265px,#830cff 273px,#8d09ff 281px,#9807ff 289px,#a204ff 297px,#ad02ff 305px,#b800ff 313px,#c400ff 321px,#cf00ff 329px);"></div>
<div class="b" style="left:0;top:214px;width:618px;height:2px;background:linear-gradient(90deg,#0041ff 130px,#003eff 138px,#043bff 146px,#0938ff 154px,#0f35ff 162px,#1532ff 170px,#1c2fff 178px,#232cff 186px,#2a28ff 194px,#3225ff 202px,#3a22ff 210px,#421fff 218px,#4b1cff 226px,#5319ff 234px,#5c16ff 242px,#6513ff 250px,#6f10ff 258px,#780eff 266px,#820bff 274px,#8c08ff 282px,#9606ff 290px,#a103ff 298px,#ac01ff 306px,#b600ff 314px,#c200ff 322px);"></div>
<div class="b" style="left:0;top:216px;width:618px;height:2px;background:linear-gradient(90deg,#003fff 131px,#003cff 139px,#0439ff 147px,#0936ff 155px,#0f33ff 163px,#1530ff 171px,#1c2dff 179px,#232aff 187px,#2a27ff 195px,#3224ff 203px,#3a21ff 211px,#421eff 219px,#4a1bff 227px,#5318ff 235px,#5b15ff 243px,#6412ff 251px,#6e0fff 259px,#770cff 267px,#810aff 275px,#8b07ff 283px,#9505ff 291px,#9f02ff 299px,#aa00ff 307px,#b500ff 315px,#c000ff 323px);"></div>
<div class="b" style="left:0;top:218px;width:618px;height:2px;background:linear-gradient(90deg,#003eff 131px,#003bff 139px,#0438ff 147px,#0935ff 155px,#0f32ff 163px,#152fff 171px,#1b2cff 179px,#2229ff 187px,#2926ff 195px,#3123ff 203px,#3820ff 211px,#401dff 219px,#481aff 227px,#5117ff 235px,#5a14ff 243px,#6211ff 251px,#6c0eff 259px,#750cff 267px,#7e09ff 275px,#8806ff 283px,#9204ff 291px,#9c02ff 299px,#a700ff 307px,#b100ff 315px,#bc00ff 323px);"></div>
<div class="b" style="left:0;top:220px;width:618px;height:2px;background:linear-gradient(90deg,#003cff 132px,#0039ff 140px,#0436ff 148px,#0933ff 156px,#0f30ff 164px,#152dff 172px,#1b2aff 180px,#2227ff 188px,#2924ff 196px,#3021ff 204px,#381eff 212px,#401bff 220px,#4818ff 228px,#5015ff 236px,#5913ff 244px,#6210ff 252px,#6b0dff 260px,#740aff 268px,#7d08ff 276px,#8705ff 284px,#9103ff 292px,#9b01ff 300px,#a500ff 308px,#af00ff 316px);"></div>
<div class="b" style="left:0;top:222px;width:618px;height:2px;background:linear-gradient(90deg,#003aff 133px,#0037ff 141px,#0434ff 149px,#0931ff 157px,#0f2eff 165px,#152bff 173px,#1b28ff 181px,#2225ff 189px,#2922ff 197px,#301fff 205px,#381dff 213px,#3f1aff 221px,#4717ff 229px,#5014ff 237px,#5811ff 245px,#610fff 253px,#6a0cff 261px,#7309ff 269px,#7c07ff 277px,#8604ff 285px,#8f02ff 293px,#9900ff 301px,#a300ff 309px,#ae00ff 317px);"></div>
<div class="b" style="left:0;top:224px;width:618px;height:2px;background:linear-gradient(90deg,#0038ff 133px,#0035ff 141px,#0433ff 149px,#0930ff 157px,#0e2dff 165px,#142aff 173px,#1a27ff 181px,#2124ff 189px,#2821ff 197px,#2f1eff 205px,#361bff 213px,#3e19ff 221px,#4616ff 229px,#4e13ff 237px,#5610ff 245px,#5f0eff 253px,#680bff 261px,#7109ff 269px,#7a06ff 277px,#8304ff 285px,#8d02ff 293px,#9700ff 301px,#a000ff 309px,#ab00ff 317px);"></div>
<div class="b" style="left:0;top:226px;width:618px;height:2px;background:linear-gradient(90deg,#0037ff 134px,#0034ff 142px,#0431ff 150px,#092eff 158px,#0e2bff 166px,#1428ff 174px,#1a25ff 182px,#2122ff 190px,#2820ff 198px,#2f1dff 206px,#361aff 214px,#3e17ff 222px,#4515ff 230px,#4d12ff 238px,#560fff 246px,#5e0dff 254px,#670aff 262px,#7008ff 270px,#7905ff 278px,#8203ff 286px,#8b01ff 294px,#9500ff 302px,#9f00ff 310px);"></div>
<div class="b" style="left:0;top:228px;width:618px;height:2px;background:linear-gradient(90deg,#0035ff 134px,#0032ff 142px,#0430ff 150px,#082dff 158px,#0e2aff 166px,#1327ff 174px,#1a24ff 182px,#2021ff 190px,#271fff 198px,#2e1cff 206px,#3519ff 214px,#3c16ff 222px,#4414ff 230px,#4c11ff 238px,#540eff 246px,#5c0cff 254px,#6509ff 262px,#6e07ff 270px,#7705ff 278px,#8002ff 286px,#8901ff 294px,#9200ff 302px,#9c00ff 310px);"></div>
<div class="b" style="left:0;top:230px;width:618px;height:2px;background:linear-gradient(90deg,#0033ff 135px,#0031ff 143px,#042eff 151px,#082bff 159px,#0e28ff 167px,#1325ff 175px,#1a23ff 183px,#2020ff 191px,#271dff 199px,#2d1aff 207px,#3518ff 215px,#3c15ff 223px,#4412ff 231px,#4b10ff 239px,#530dff 247px,#5c0bff 255px,#6408ff 263px,#6d06ff 271px,#7604ff 279px,#7f02ff 287px,#8800ff 295px,#9100ff 303px,#9b00ff 311px);"></div>
<div class="b" style="left:0;top:232px;width:618px;height:2px;background:linear-gradient(90deg,#0032ff 136px,#002fff 144px,#042cff 152px,#0929ff 160px,#0e27ff 168px,#1424ff 176px,#1a21ff 184px,#201eff 192px,#261cff 200px,#2d19ff 208px,#3416ff 216px,#3c14ff 224px,#4311ff 232px,#4b0fff 240px,#530cff 248px,#5b0aff 256px,#6307ff 264px,#6c05ff 272px,#7503ff 280px,#7d01ff 288px,#8700ff 296px,#9000ff 304px);"></div>
<div class="b" style="left:0;top:234px;width:618px;height:2px;background:linear-gradient(90deg,#0031ff 136px,#002eff 144px,#032bff 152px,#0828ff 160px,#0d26ff 168px,#1323ff 176px,#1920ff 184px,#1f1dff 192px,#251bff 200px,#2c18ff 208px,#3315ff 216px,#3a13ff 224px,#4210ff 232px,#490eff 240px,#510bff 248px,#5909ff 256px,#6107ff 264px,#6a04ff 272px,#7202ff 280px,#7b01ff 288px,#8400ff 296px,#8d00ff 304px);"></div>
<div class="b" style="left:0;top:236px;width:618px;height:2px;background:linear-gradient(90deg,#002fff 137px,#002cff 145px,#0429ff 153px,#0827ff 161px,#0d24ff 169px,#1321ff 177px,#191fff 185px,#1f1cff 193px,#2519ff 201px,#2c17ff 209px,#3314ff 217px,#3a12ff 225px,#410fff 233px,#490dff 241px,#510aff 249px,#5908ff 257px,#6106ff 265px,#6904ff 273px,#7202ff 281px,#7a00ff 289px,#8300ff 297px,#8c00ff 305px);"></div>
<div class="b" style="left:0;top:238px;width:618px;height:2px;background:linear-gradient(90deg,#002eff 137px,#002bff 145px,#0328ff 153px,#0826ff 161px,#0d23ff 169px,#1220ff 177px,#181eff 185px,#1e1bff 193px,#2418ff 201px,#2b16ff 209px,#3213ff 217px,#3911ff 225px,#400eff 233px,#480cff 241px,#4f0aff 249px,#5707ff 257px,#5f05ff 265px,#6703ff 273px,#7001ff 281px,#7800ff 289px,#8100ff 297px);"></div>
<div class="b" style="left:0;top:240px;width:618px;height:2px;background:linear-gradient(90deg,#002cff 138px,#0029ff 146px,#0327ff 154px,#0824ff 162px,#0d22ff 170px,#121fff 178px,#181cff 186px,#1e1aff 194px,#2417ff 202px,#2b15ff 210px,#3212ff 218px,#3910ff 226px,#400dff 234px,#470bff 242px,#4f09ff 250px,#5606ff 258px,#5e04ff 266px,#6602ff 274px,#6f01ff 282px,#7700ff 290px,#8000ff 298px);"></div>
<div class="b" style="left:0;top:242px;width:618px;height:2px;background:linear-gradient(90deg,#002bff 139px,#0028ff 147px,#0425ff 155px,#0823ff 163px,#0d20ff 171px,#121eff 179px,#181bff 187px,#1e19ff 195px,#2416ff 203px,#2b14ff 211px,#3111ff 219px,#380fff 227px,#3f0cff 235px,#470aff 243px,#4e08ff 251px,#5606ff 259px,#5e03ff 267px,#6602ff 275px,#6e00ff 283px,#7600ff 291px,#7f00ff 299px);"></div>
<div class="b" style="left:0;top:244px;width:618px;height:2px;background:linear-gradient(90deg,#0029ff 139px,#0027ff 147px,#0324ff 155px,#0822ff 163px,#0d1fff 171px,#121dff 179px,#171aff 187px,#1d18ff 195px,#2315ff 203px,#2a13ff 211px,#3010ff 219px,#370eff 227px,#3e0cff 235px,#4509ff 243px,#4d07ff 251px,#5405ff 259px,#5c03ff 267px,#6401ff 275px,#6c00ff 283px,#7400ff 291px);"></div>
<div class="b" style="left:0;top:246px;width:618px;height:2px;background:linear-gradient(90deg,#0028ff 140px,#0025ff 148px,#0323ff 156px,#0820ff 164px,#0d1eff 172px,#121bff 180px,#1719ff 188px,#1d16ff 196px,#2314ff 204px,#2a12ff 212px,#300fff 220px,#370dff 228px,#3e0bff 236px,#4508ff 244px,#4c06ff 252px,#5404ff 260px,#5b02ff 268px,#6301ff 276px,#6b00ff 284px,#7300ff 292px);"></div>
<div class="b" style="left:0;top:248px;width:618px;height:2px;background:linear-gradient(90deg,#0027ff 141px,#0024ff 149px,#0422ff 157px,#081fff 165px,#0d1dff 173px,#121aff 181px,#1718ff 189px,#1d15ff 197px,#2313ff 205px,#2910ff 213px,#300eff 221px,#370cff 229px,#3d0aff 237px,#4407ff 245px,#4c05ff 253px,#5303ff 261px,#5b02ff 269px,#6200ff 277px,#6a00ff 285px,#7200ff 293px);"></div>
<div class="b" style="left:0;top:250px;width:618px;height:2px;background:linear-gradient(90deg,#0026ff 141px,#0023ff 149px,#0321ff 157px,#071eff 165px,#0c1cff 173px,#1119ff 181px,#1717ff 189px,#1c14ff 197px,#2212ff 205px,#2910ff 213px,#2f0dff 221px,#350bff 229px,#3c09ff 237px,#4307ff 245px,#4a05ff 253px,#5203ff 261px,#5901ff 269px,#6100ff 277px,#6800ff 285px,#7000ff 293px);"></div>
<div class="b" style="left:0;top:252px;width:618px;height:2px;background:linear-gradient(90deg,#0024ff 142px,#0022ff 150px,#031fff 158px,#081dff 166px,#0c1aff 174px,#1118ff 182px,#1716ff 190px,#1c13ff 198px,#2211ff 206px,#280fff 214px,#2f0cff 222px,#350aff 230px,#3c08ff 238px,#4306ff 246px,#4a04ff 254px,#5102ff 262px,#5801ff 270px,#6000ff 278px,#6800ff 286px);"></div>
<div class="b" style="left:0;top:254px;width:618px;height:2px;background:linear-gradient(90deg,#0023ff 142px,#0021ff 150px,#031eff 158px,#071cff 166px,#0c1aff 174px,#1117ff 182px,#1615ff 190px,#1c13ff 198px,#2110ff 206px,#270eff 214px,#2e0cff 222px,#340aff 230px,#3b07ff 238px,#4205ff 246px,#4804ff 254px,#5002ff 262px,#5700ff 270px,#5e00ff 278px,#6600ff 286px);"></div>
<div class="b" style="left:0;top:256px;width:618px;height:2px;background:linear-gradient(90deg,#0022ff 143px,#0020ff 151px,#031dff 159px,#071bff 167px,#0c18ff 175px,#1116ff 183px,#1614ff 191px,#1c11ff 199px,#210fff 207px,#270dff 215px,#2e0bff 223px,#3409ff 231px,#3a07ff 239px,#4105ff 247px,#4803ff 255px,#4f01ff 263px,#5600ff 271px,#5e00ff 279px,#6500ff 287px);"></div>
<div class="b" style="left:0;top:258px;width:618px;height:2px;background:linear-gradient(90deg,#0021ff 144px,#001eff 152px,#031cff 160px,#071aff 168px,#0c17ff 176px,#1115ff 184px,#1613ff 192px,#1c10ff 200px,#210eff 208px,#270cff 216px,#2d0aff 224px,#3408ff 232px,#3a06ff 240px,#4104ff 248px,#4802ff 256px,#4f01ff 264px,#5600ff 272px,#5d00ff 280px);"></div>
<div class="b" style="left:0;top:260px;width:618px;height:2px;background:linear-gradient(90deg,#0020ff 144px,#001dff 152px,#031bff 160px,#0719ff 168px,#0c16ff 176px,#1014ff 184px,#1612ff 192px,#1b10ff 200px,#210eff 208px,#260bff 216px,#2c09ff 224px,#3307ff 232px,#3905ff 240px,#4003ff 248px,#4602ff 256px,#4d00ff 264px,#5400ff 272px,#5c00ff 280px);"></div>
<div class="b" style="left:0;top:262px;width:618px;height:2px;background:linear-gradient(90deg,#001eff 145px,#001cff 153px,#031aff 161px,#0718ff 169px,#0c15ff 177px,#1013ff 185px,#1611ff 193px,#1b0fff 201px,#200dff 209px,#260aff 217px,#2c08ff 225px,#3206ff 233px,#3905ff 241px,#3f03ff 249px,#4601ff 257px,#4d00ff 265px,#5400ff 273px,#5b00ff 281px);"></div>
<div class="b" style="left:0;top:264px;width:618px;height:2px;background:linear-gradient(90deg,#001eff 145px,#001bff 153px,#0319ff 161px,#0717ff 169px,#0b15ff 177px,#1012ff 185px,#1510ff 193px,#1a0eff 201px,#200cff 209px,#250aff 217px,#2b08ff 225px,#3106ff 233px,#3804ff 241px,#3e02ff 249px,#4501ff 257px,#4b00ff 265px,#5200ff 273px);"></div>
<div class="b" style="left:0;top:266px;width:618px;height:2px;background:linear-gradient(90deg,#001cff 146px,#001aff 154px,#0318ff 162px,#0716ff 170px,#0b14ff 178px,#1011ff 186px,#150fff 194px,#1a0dff 202px,#200bff 210px,#2509ff 218px,#2b07ff 226px,#3105ff 234px,#3703ff 242px,#3e02ff 250px,#4400ff 258px,#4b00ff 266px,#5200ff 274px);"></div>
<div class="b" style="left:0;top:268px;width:618px;height:2px;background:linear-gradient(90deg,#001bff 147px,#0019ff 155px,#0317ff 163px,#0715ff 171px,#0b13ff 179px,#1010ff 187px,#150eff 195px,#1a0cff 203px,#200aff 211px,#2508ff 219px,#2b06ff 227px,#3104ff 235px,#3703ff 243px,#3e01ff 251px,#4400ff 259px,#4b00ff 267px,#5100ff 275px);"></div>
<div class="b" style="left:0;top:270px;width:618px;height:2px;background:linear-gradient(90deg,#001aff 147px,#0018ff 155px,#0316ff 163px,#0714ff 171px,#0b12ff 179px,#1010ff 187px,#140eff 195px,#1a0cff 203px,#1f0aff 211px,#2408ff 219px,#2a06ff 227px,#3004ff 235px,#3602ff 243px,#3c01ff 251px,#4300ff 259px,#4900ff 267px);"></div>
<div class="b" style="left:0;top:272px;width:618px;height:2px;background:linear-gradient(90deg,#0019ff 148px,#0017ff 156px,#0315ff 164px,#0713ff 172px,#0b11ff 180px,#100fff 188px,#140dff 196px,#1a0bff 204px,#1f09ff 212px,#2407ff 220px,#2a05ff 228px,#3003ff 236px,#3602ff 244px,#3c00ff 252px,#4200ff 260px,#4900ff 268px);"></div>
<div class="b" style="left:0;top:274px;width:618px;height:2px;background:linear-gradient(90deg,#0018ff 149px,#0016ff 157px,#0314ff 165px,#0712ff 173px,#0b10ff 181px,#100eff 189px,#150cff 197px,#1a0aff 205px,#1f08ff 213px,#2406ff 221px,#2a04ff 229px,#3003ff 237px,#3601ff 245px,#3c00ff 253px,#4200ff 261px,#4900ff 269px);"></div>
<div class="b" style="left:0;top:276px;width:618px;height:2px;background:linear-gradient(90deg,#0018ff 149px,#0015ff 157px,#0313ff 165px,#0711ff 173px,#0b0fff 181px,#0f0dff 189px,#140bff 197px,#1909ff 205px,#1e07ff 213px,#2406ff 221px,#2904ff 229px,#2f02ff 237px,#3501ff 245px,#3b00ff 253px,#4100ff 261px);"></div>
<div class="b" style="left:0;top:278px;width:618px;height:2px;background:linear-gradient(90deg,#0017ff 150px,#0014ff 158px,#0312ff 166px,#0710ff 174px,#0b0eff 182px,#0f0cff 190px,#140aff 198px,#1908ff 206px,#1e07ff 214px,#2305ff 222px,#2903ff 230px,#2f02ff 238px,#3500ff 246px,#3b00ff 254px,#4100ff 262px);"></div>
<div class="b" style="left:0;top:280px;width:618px;height:2px;background:linear-gradient(90deg,#0016ff 150px,#0014ff 158px,#0312ff 166px,#0610ff 174px,#0a0eff 182px,#0f0cff 190px,#130aff 198px,#1808ff 206px,#1d06ff 214px,#2304ff 222px,#2803ff 230px,#2e01ff 238px,#3400ff 246px,#3900ff 254px,#4000ff 262px);"></div>
<div class="b" style="left:0;top:282px;width:618px;height:2px;background:linear-gradient(90deg,#0015ff 151px,#0013ff 159px,#0311ff 167px,#060fff 175px,#0b0dff 183px,#0f0bff 191px,#1309ff 199px,#1807ff 207px,#1d05ff 215px,#2304ff 223px,#2802ff 231px,#2e01ff 239px,#3300ff 247px,#3900ff 255px);"></div>
<div class="b" style="left:0;top:284px;width:618px;height:2px;background:linear-gradient(90deg,#0014ff 152px,#0012ff 160px,#0310ff 168px,#070eff 176px,#0b0cff 184px,#0f0aff 192px,#1408ff 200px,#1806ff 208px,#1d05ff 216px,#2303ff 224px,#2802ff 232px,#2d00ff 240px,#3300ff 248px,#3900ff 256px);"></div>
<div class="b" style="left:0;top:286px;width:618px;height:2px;background:linear-gradient(90deg,#0013ff 152px,#0011ff 160px,#030fff 168px,#060dff 176px,#0a0bff 184px,#0e0aff 192px,#1308ff 200px,#1806ff 208px,#1d04ff 216px,#2203ff 224px,#2701ff 232px,#2d00ff 240px,#3200ff 248px,#3800ff 256px);"></div>
<div class="b" style="left:0;top:288px;width:618px;height:2px;background:linear-gradient(90deg,#0012ff 153px,#0010ff 161px,#030eff 169px,#060cff 177px,#0a0bff 185px,#0f09ff 193px,#1307ff 201px,#1805ff 209px,#1d04ff 217px,#2202ff 225px,#2701ff 233px,#2c00ff 241px,#3200ff 249px);"></div>
<div class="b" style="left:0;top:290px;width:618px;height:2px;background:linear-gradient(90deg,#0011ff 154px,#000fff 162px,#030eff 170px,#060cff 178px,#0a0aff 186px,#0f08ff 194px,#1306ff 202px,#1805ff 210px,#1d03ff 218px,#2202ff 226px,#2700ff 234px,#2c00ff 242px,#3200ff 250px);"></div>
<div class="b" style="left:0;top:292px;width:618px;height:2px;background:linear-gradient(90deg,#0011ff 154px,#000fff 162px,#030dff 170px,#060bff 178px,#0a09ff 186px,#0e08ff 194px,#1306ff 202px,#1704ff 210px,#1c03ff 218px,#2101ff 226px,#2600ff 234px,#2c00ff 242px,#3100ff 250px);"></div>
<div class="b" style="left:0;top:294px;width:618px;height:2px;background:linear-gradient(90deg,#0010ff 155px,#000eff 163px,#030cff 171px,#060aff 179px,#0a09ff 187px,#0e07ff 195px,#1305ff 203px,#1704ff 211px,#1c02ff 219px,#2101ff 227px,#2600ff 235px,#2b00ff 243px);"></div>
<div class="b" style="left:0;top:296px;width:618px;height:2px;background:linear-gradient(90deg,#000fff 155px,#000dff 163px,#030cff 171px,#060aff 179px,#0a08ff 187px,#0e06ff 195px,#1205ff 203px,#1703ff 211px,#1b02ff 219px,#2000ff 227px,#2500ff 235px,#2b00ff 243px);"></div>
<div class="b" style="left:0;top:298px;width:618px;height:2px;background:linear-gradient(90deg,#000eff 156px,#000dff 164px,#030bff 172px,#0609ff 180px,#0a07ff 188px,#0e06ff 196px,#1204ff 204px,#1703ff 212px,#1b01ff 220px,#2000ff 228px,#2500ff 236px,#2a00ff 244px);"></div>
<div class="b" style="left:0;top:300px;width:618px;height:2px;background:linear-gradient(90deg,#000eff 157px,#000cff 165px,#030aff 173px,#0608ff 181px,#0a07ff 189px,#0e05ff 197px,#1204ff 205px,#1702ff 213px,#1b01ff 221px,#2000ff 229px,#2500ff 237px);"></div>
<div class="b" style="left:0;top:302px;width:618px;height:2px;background:linear-gradient(90deg,#000dff 157px,#000bff 165px,#030aff 173px,#0608ff 181px,#0a06ff 189px,#0e05ff 197px,#1203ff 205px,#1602ff 213px,#1b00ff 221px,#2000ff 229px,#2400ff 237px);"></div>
<div class="b" style="left:0;top:304px;width:618px;height:2px;background:linear-gradient(90deg,#000cff 158px,#000bff 166px,#0309ff 174px,#0607ff 182px,#0a06ff 190px,#0e04ff 198px,#1203ff 206px,#1601ff 214px,#1b00ff 222px,#2000ff 230px,#2400ff 238px);"></div>
<div class="b" style="left:0;top:306px;width:618px;height:2px;background:linear-gradient(90deg,#000cff 158px,#000aff 166px,#0208ff 174px,#0607ff 182px,#0905ff 190px,#0d04ff 198px,#1102ff 206px,#1601ff 214px,#1a00ff 222px,#1f00ff 230px,#2400ff 238px);"></div>
<div class="b" style="left:0;top:308px;width:618px;height:2px;background:linear-gradient(90deg,#000bff 159px,#0009ff 167px,#0308ff 175px,#0606ff 183px,#0905ff 191px,#0d03ff 199px,#1102ff 207px,#1600ff 215px,#1a00ff 223px,#1f00ff 231px);"></div>
<div class="b" style="left:0;top:310px;width:618px;height:2px;background:linear-gradient(90deg,#000aff 160px,#0009ff 168px,#0307ff 176px,#0605ff 184px,#0904ff 192px,#0d03ff 200px,#1101ff 208px,#1600ff 216px,#1a00ff 224px,#1f00ff 232px);"></div>
<div class="b" style="left:0;top:312px;width:618px;height:2px;background:linear-gradient(90deg,#000aff 160px,#0008ff 168px,#0207ff 176px,#0605ff 184px,#0904ff 192px,#0d02ff 200px,#1101ff 208px,#1500ff 216px,#1a00ff 224px,#1e00ff 232px);"></div>
<div class="b" style="left:0;top:314px;width:618px;height:2px;background:linear-gradient(90deg,#0009ff 161px,#0007ff 169px,#0306ff 177px,#0604ff 185px,#0903ff 193px,#0d02ff 201px,#1101ff 209px,#1500ff 217px,#1a00ff 225px);"></div>
<div class="b" style="left:0;top:316px;width:618px;height:2px;background:linear-gradient(90deg,#0008ff 162px,#0007ff 170px,#0305ff 178px,#0604ff 186px,#0902ff 194px,#0d01ff 202px,#1100ff 210px,#1500ff 218px,#1a00ff 226px);"></div>
<div class="b" style="left:0;top:318px;width:618px;height:2px;background:linear-gradient(90deg,#0008ff 162px,#0006ff 170px,#0205ff 178px,#0503ff 186px,#0902ff 194px,#0d01ff 202px,#1100ff 210px,#1500ff 218px,#1900ff 226px);"></div>
<div class="b" style="left:0;top:320px;width:618px;height:2px;background:linear-gradient(90deg,#0007ff 163px,#0006ff 171px,#0304ff 179px,#0603ff 187px,#0902ff 195px,#0d01ff 203px,#1100ff 211px,#1500ff 219px);"></div>
<div class="b" style="left:0;top:322px;width:618px;height:2px;background:linear-gradient(90deg,#0007ff 163px,#0005ff 171px,#0204ff 179px,#0503ff 187px,#0901ff 195px,#0c00ff 203px,#1000ff 211px,#1400ff 219px);"></div>
<div class="b" style="left:0;top:324px;width:618px;height:2px;background:linear-gradient(90deg,#0006ff 164px,#0005ff 172px,#0203ff 180px,#0502ff 188px,#0901ff 196px,#0c00ff 204px,#1000ff 212px,#1400ff 220px);"></div>
<div class="b" style="left:0;top:326px;width:618px;height:2px;background:linear-gradient(90deg,#0006ff 165px,#0004ff 173px,#0303ff 181px,#0602ff 189px,#0901ff 197px,#0d00ff 205px,#1000ff 213px);"></div>
<div class="b" style="left:0;top:328px;width:618px;height:2px;background:linear-gradient(90deg,#0005ff 165px,#0004ff 173px,#0203ff 181px,#0501ff 189px,#0900ff 197px,#0c00ff 205px,#1000ff 213px);"></div>
<div class="b" style="left:0;top:330px;width:618px;height:2px;background:linear-gradient(90deg,#0005ff 166px,#0003ff 174px,#0202ff 182px,#0501ff 190px,#0900ff 198px,#0c00ff 206px,#1000ff 214px);"></div>
<div class="b" style="left:0;top:332px;width:618px;height:2px;background:linear-gradient(90deg,#0004ff 166px,#0003ff 174px,#0202ff 182px,#0501ff 190px,#0800ff 198px,#0c00ff 206px);"></div>
<div class="b" style="left:0;top:334px;width:618px;height:2px;background:linear-gradient(90deg,#0004ff 167px,#0002ff 175px,#0201ff 183px,#0500ff 191px,#0800ff 199px,#0c00ff 207px);"></div>
<div class="b" style="left:0;top:336px;width:618px;height:2px;background:linear-gradient(90deg,#0003ff 168px,#0002ff 176px,#0201ff 184px,#0500ff 192px,#0900ff 200px,#0c00ff 208px);"></div>
<div class="b" style="left:0;top:338px;width:618px;height:2px;background:linear-gradient(90deg,#0003ff 168px,#0002ff 176px,#0201ff 184px,#0500ff 192px,#0800ff 200px);"></div>
<div class="b" style="left:0;top:340px;width:618px;height:2px;background:linear-gradient(90deg,#0002ff 169px,#0001ff 177px,#0200ff 185px,#0500ff 193px,#0800ff 201px);"></div>
<div class="b" style="left:0;top:342px;width:618px;height:2px;background:linear-gradient(90deg,#0002ff 170px,#0001ff 178px,#0200ff 186px,#0500ff 194px,#0800ff 202px);"></div>
<div class="b" style="left:0;top:344px;width:618px;height:2px;background:linear-gradient(90deg,#0002ff 170px,#0001ff 178px,#0200ff 186px,#0500ff 194px);"></div>
<div class="b" style="left:0;top:346px;width:618px;height:2px;background:linear-gradient(90deg,#0001ff 171px,#0000ff 179px,#0200ff 187px,#0500ff 195px);"></div>
<div class="b" style="left:0;top:348px;width:618px;height:2px;background:linear-gradient(90deg,#0001ff 171px,#0000ff 179px,#0200ff 187px,#0500ff 195px);"></div>
<div class="b" style="left:0;top:350px;width:618px;height:2px;background:linear-gradient(90deg,#0001ff 172px,#0000ff 180px,#0200ff 188px);"></div>
</div>
</div>
<div class="b" style="left:1095px;top:92px;width:14px;height:14px;border:1.5px solid #f0f0f0;background:transparent;"></div>
<div class="b" style="left:1227px;top:107px;width:14px;height:14px;border:1.5px solid #f0f0f0;background:transparent;"></div>
<div class="b" style="left:1480px;top:134px;width:14px;height:14px;border:1.5px solid #f0f0f0;background:transparent;"></div>
<div class="b" style="left:1127px;top:194px;width:14px;height:14px;border:1.5px solid #f0f0f0;background:transparent;"></div>
<div class="b" style="left:1351px;top:266px;width:14px;height:14px;border:1.5px solid #f0f0f0;background:transparent;"></div>
<div class="b" style="left:1197px;top:424px;width:14px;height:14px;border:1.5px solid #f0f0f0;background:transparent;"></div>
<div class="b" style="left:1150.9px;top:107.0px;width:9px;height:9px;border-radius:50%;background:#20a020;border:1px solid #000;"></div>
<div class="b" style="left:1222.0px;top:113.0px;width:9px;height:9px;border-radius:50%;background:#c8b818;border:1px solid #000;"></div>
<div class="b" style="left:1461.5px;top:133.5px;width:9px;height:9px;border-radius:50%;background:#b01010;border:1px solid #000;"></div>
<div class="b" style="left:1166.1px;top:194.9px;width:9px;height:9px;border-radius:50%;background:#20b8b8;border:1px solid #000;"></div>
<div class="b" style="left:1324.5px;top:278.5px;width:9px;height:9px;border-radius:50%;background:#b020b0;border:1px solid #000;"></div>
<div class="b" style="left:1197.5px;top:413.5px;width:9px;height:9px;border-radius:50%;background:#1818b0;border:1px solid #000;"></div>
<div class="b" style="left:1220px;top:178px;width:14px;height:14px;border:2px solid #000;background:transparent;"></div>
<div class="b" style="left:1224.1px;top:179.1px;width:9px;height:9px;border-radius:50%;background:#ffffff;border:1px solid #000;"></div>
<div class="b" style="left:1396px;top:526px;width:244px;height:26px;background:#383838;"></div>
<div class="t" style="left:1395.0px;top:527.3px;font-size:20.7px;line-height:23.12px;color:#f8f8f8;transform:scaleX(0.925);transform-origin:left;">Gamut Coverage:&nbsp; 68,1%</div>
<div class="t" style="left:52.0px;top:629.9px;font-size:27.3px;line-height:30.49px;color:#f2f2f2;transform:scaleX(1.069);transform-origin:left;">Current Reading</div>
<div class="t" style="left:52.5px;top:701.1px;font-size:23.8px;line-height:26.58px;color:#f2f2f2;transform:scaleX(1.023);transform-origin:left;">x: 0,3152</div>
<div class="t" style="left:204.3px;top:701.1px;font-size:23.8px;line-height:26.58px;color:#f2f2f2;transform:scaleX(1.023);transform-origin:left;">y: 0,3316</div>
<div class="t" style="left:52.5px;top:740.4px;font-size:23.8px;line-height:26.58px;color:#f2f2f2;transform:scaleX(1.023);transform-origin:left;">fL: 120,51</div>
<div class="t" style="left:52.5px;top:780.1px;font-size:23.8px;line-height:26.58px;color:#f2f2f2;transform:scaleX(1.023);transform-origin:left;">cd/m&sup2;: 412,89</div>
<div class="t" style="left:448.9px;top:611.4px;font-size:14.1px;line-height:15.75px;color:#dcdcdc;transform:scaleX(0.956);transform-origin:left;">RGB Balance</div>
<div class="b" style="left:372px;top:629px;width:255px;height:175px;background:#232323;border:1px solid #a0a0a0;border-top:2px solid #a0a0a0;border-bottom:2px solid #a0a0a0;"></div>
<div class="b" style="left:367px;top:629px;width:5px;height:1px;background:#e0e0e0;"></div>
<div class="t" style="left:367.5px;top:622.5px;font-size:14px;line-height:15.64px;color:#dcdcdc;transform:translateX(-100%);transform-origin:right;">4</div>
<div class="b" style="left:373px;top:673px;width:253px;height:1px;background:#8c8c8c;"></div>
<div class="b" style="left:367px;top:673px;width:5px;height:1px;background:#e0e0e0;"></div>
<div class="t" style="left:367.5px;top:666.5px;font-size:14px;line-height:15.64px;color:#dcdcdc;transform:translateX(-100%);transform-origin:right;">2</div>
<div class="b" style="left:373px;top:716px;width:253px;height:1px;background:#8c8c8c;"></div>
<div class="b" style="left:367px;top:716px;width:5px;height:1px;background:#e0e0e0;"></div>
<div class="t" style="left:367.5px;top:709.5px;font-size:14px;line-height:15.64px;color:#dcdcdc;transform:translateX(-100%);transform-origin:right;">0</div>
<div class="b" style="left:373px;top:760px;width:253px;height:1px;background:#8c8c8c;"></div>
<div class="b" style="left:367px;top:760px;width:5px;height:1px;background:#e0e0e0;"></div>
<div class="t" style="left:367.5px;top:753.5px;font-size:14px;line-height:15.64px;color:#dcdcdc;transform:translateX(-100%);transform-origin:right;">-2</div>
<div class="b" style="left:367px;top:803px;width:5px;height:1px;background:#e0e0e0;"></div>
<div class="t" style="left:367.5px;top:796.5px;font-size:14px;line-height:15.64px;color:#dcdcdc;transform:translateX(-100%);transform-origin:right;">-4</div>
<div class="b" style="left:372px;top:803px;width:1px;height:6px;background:#a0a0a0;"></div>
<div class="b" style="left:626px;top:803px;width:1px;height:6px;background:#a0a0a0;"></div>
<div class="t" style="left:499.0px;top:806.3px;font-size:14px;line-height:15.64px;color:#dcdcdc;transform:translateX(-50%);transform-origin:center;">100W</div>
<div class="b" style="left:397px;top:695px;width:68px;height:22px;background:linear-gradient(#ff1010,#e00000 60%,#900000);border:1px solid #000;"></div>
<div class="b" style="left:464px;top:716px;width:67px;height:3px;background:#2a6a2a;border:1px solid #0a1a0a;"></div>
<div class="b" style="left:532px;top:716px;width:67px;height:63px;background:linear-gradient(#1818ff,#0808e8 50%,#0000a0);border:1px solid #000;"></div>
<div class="t" style="left:782.5px;top:603.8px;font-size:13.6px;line-height:15.19px;color:#dcdcdc;transform:scaleX(0.99);transform-origin:left;">CIE 1931 xy</div>
<div class="b" style="left:654px;top:620px;width:331px;height:193px;border:1px solid #9a9a9a;overflow:hidden;">
<div class="b" style="left:0;top:0px;width:331px;height:3px;background:linear-gradient(90deg,#4affc8 0px,#5dffc8 16px,#6dffc7 32px,#7bffc6 48px,#87ffc5 64px,#92ffc5 80px,#9dffc4 96px,#a7ffc3 112px,#b0ffc2 128px,#b9ffc1 144px,#c2ffc0 160px,#cbffbf 176px,#d3ffbe 192px,#dbffbd 208px,#e3ffbc 224px,#ebffbb 240px,#f3ffba 256px,#fbffb9 272px,#fffbb5 288px,#fff4af 304px,#ffeea9 320px,#ffe9a5 331px);"></div>
<div class="b" style="left:0;top:3px;width:331px;height:3px;background:linear-gradient(90deg,#4dffca 0px,#5fffc9 16px,#6fffc9 32px,#7cffc8 48px,#89ffc7 64px,#94ffc6 80px,#9effc5 96px,#a8ffc5 112px,#b2ffc4 128px,#bbffc3 144px,#c4ffc2 160px,#ccffc1 176px,#d5ffc0 192px,#ddffbf 208px,#e5ffbe 224px,#edffbd 240px,#f5ffbc 256px,#fdffbb 272px,#fffab6 288px,#fff3af 304px,#ffeca9 320px,#ffe8a5 331px);"></div>
<div class="b" style="left:0;top:6px;width:331px;height:3px;background:linear-gradient(90deg,#4fffcb 0px,#61ffcb 16px,#71ffca 32px,#7effc9 48px,#8affc9 64px,#95ffc8 80px,#a0ffc7 96px,#aaffc6 112px,#b3ffc5 128px,#bdffc5 144px,#c5ffc4 160px,#ceffc3 176px,#d6ffc2 192px,#dfffc1 208px,#e7ffc0 224px,#efffbf 240px,#f7ffbe 256px,#feffbd 272px,#fff8b6 288px,#fff1b0 304px,#ffeaaa 320px,#ffe6a6 331px);"></div>
<div class="b" style="left:0;top:9px;width:331px;height:3px;background:linear-gradient(90deg,#51ffcd 0px,#63ffcc 16px,#73ffcc 32px,#80ffcb 48px,#8cffca 64px,#97ffca 80px,#a2ffc9 96px,#abffc8 112px,#b5ffc7 128px,#beffc6 144px,#c7ffc5 160px,#d0ffc5 176px,#d8ffc4 192px,#e0ffc3 208px,#e8ffc2 224px,#f0ffc1 240px,#f8ffc0 256px,#fffebe 272px,#fff6b7 288px,#ffefb1 304px,#ffe9ab 320px,#ffe5a7 331px);"></div>
<div class="b" style="left:0;top:12px;width:331px;height:3px;background:linear-gradient(90deg,#54ffcf 0px,#65ffce 16px,#74ffcd 32px,#82ffcd 48px,#8effcc 64px,#99ffcb 80px,#a3ffca 96px,#adffca 112px,#b7ffc9 128px,#c0ffc8 144px,#c9ffc7 160px,#d1ffc6 176px,#daffc5 192px,#e2ffc5 208px,#eaffc4 224px,#f2ffc3 240px,#faffc2 256px,#fffcbe 272px,#fff5b8 288px,#ffeeb1 304px,#ffe7ab 320px,#ffe3a8 331px);"></div>
<div class="b" style="left:0;top:15px;width:331px;height:3px;background:linear-gradient(90deg,#56ffd0 0px,#67ffd0 16px,#76ffcf 32px,#83ffce 48px,#8fffce 64px,#9affcd 80px,#a5ffcc 96px,#afffcb 112px,#b8ffcb 128px,#c1ffca 144px,#caffc9 160px,#d3ffc8 176px,#dbffc7 192px,#e4ffc6 208px,#ecffc5 224px,#f4ffc5 240px,#fcffc4 256px,#fffabf 272px,#fff3b8 288px,#ffecb2 304px,#ffe6ac 320px,#ffe1a8 331px);"></div>
<div class="b" style="left:0;top:18px;width:331px;height:3px;background:linear-gradient(90deg,#58ffd2 0px,#69ffd1 16px,#78ffd0 32px,#85ffd0 48px,#91ffcf 64px,#9cffcf 80px,#a6ffce 96px,#b0ffcd 112px,#baffcc 128px,#c3ffcc 144px,#ccffcb 160px,#d4ffca 176px,#ddffc9 192px,#e5ffc8 208px,#eeffc7 224px,#f6ffc6 240px,#feffc5 256px,#fff9c0 272px,#fff1b9 288px,#ffebb3 304px,#ffe4ad 320px,#ffe0a9 331px);"></div>
<div class="b" style="left:0;top:21px;width:331px;height:3px;background:linear-gradient(90deg,#5bffd3 0px,#6bffd3 16px,#7affd2 32px,#87ffd1 48px,#93ffd1 64px,#9effd0 80px,#a8ffd0 96px,#b2ffcf 112px,#bbffce 128px,#c5ffcd 144px,#cdffcd 160px,#d6ffcc 176px,#dfffcb 192px,#e7ffca 208px,#efffc9 224px,#f7ffc8 240px,#ffffc7 256px,#fff7c0 272px,#fff0ba 288px,#ffe9b3 304px,#ffe3ae 320px,#ffdeaa 331px);"></div>
<div class="b" style="left:0;top:24px;width:331px;height:3px;background:linear-gradient(90deg,#5dffd5 0px,#6dffd4 16px,#7cffd4 32px,#88ffd3 48px,#94ffd3 64px,#9fffd2 80px,#aaffd1 96px,#b3ffd1 112px,#bdffd0 128px,#c6ffcf 144px,#cfffce 160px,#d8ffce 176px,#e0ffcd 192px,#e9ffcc 208px,#f1ffcb 224px,#f9ffca 240px,#fffdc8 256px,#fff5c1 272px,#ffeeba 288px,#ffe7b4 304px,#ffe1ae 320px,#ffddaa 331px);"></div>
<div class="b" style="left:0;top:27px;width:331px;height:3px;background:linear-gradient(90deg,#5fffd6 0px,#6fffd6 16px,#7dffd5 32px,#8affd5 48px,#96ffd4 64px,#a1ffd4 80px,#abffd3 96px,#b5ffd2 112px,#bfffd2 128px,#c8ffd1 144px,#d1ffd0 160px,#daffd0 176px,#e2ffcf 192px,#ebffce 208px,#f3ffcd 224px,#fbffcc 240px,#fffbc8 256px,#fff3c1 272px,#ffecbb 288px,#ffe6b5 304px,#ffdfaf 320px,#ffdbab 331px);"></div>
<div class="b" style="left:0;top:30px;width:331px;height:3px;background:linear-gradient(90deg,#61ffd8 0px,#71ffd8 16px,#7fffd7 32px,#8cffd6 48px,#98ffd6 64px,#a2ffd5 80px,#adffd5 96px,#b7ffd4 112px,#c0ffd3 128px,#c9ffd3 144px,#d2ffd2 160px,#dbffd1 176px,#e4ffd1 192px,#ecffd0 208px,#f5ffcf 224px,#fdffce 240px,#fff9c9 256px,#fff2c2 272px,#ffebbb 288px,#ffe4b5 304px,#ffdeb0 320px,#ffdaac 331px);"></div>
<div class="b" style="left:0;top:33px;width:331px;height:3px;background:linear-gradient(90deg,#63ffda 0px,#73ffd9 16px,#81ffd9 32px,#8effd8 48px,#99ffd8 64px,#a4ffd7 80px,#aeffd6 96px,#b8ffd6 112px,#c2ffd5 128px,#cbffd5 144px,#d4ffd4 160px,#ddffd3 176px,#e6ffd3 192px,#eeffd2 208px,#f6ffd1 224px,#ffffd0 240px,#fff7c9 256px,#fff0c2 272px,#ffe9bc 288px,#ffe2b6 304px,#ffdcb0 320px,#ffd8ac 331px);"></div>
<div class="b" style="left:0;top:36px;width:331px;height:3px;background:linear-gradient(90deg,#65ffdb 0px,#75ffdb 16px,#83ffda 32px,#8fffda 48px,#9bffd9 64px,#a6ffd9 80px,#b0ffd8 96px,#baffd8 112px,#c4ffd7 128px,#cdffd7 144px,#d6ffd6 160px,#dfffd5 176px,#e7ffd5 192px,#f0ffd4 208px,#f8ffd3 224px,#fffdd1 240px,#fff6ca 256px,#ffeec3 272px,#ffe7bd 288px,#ffe1b7 304px,#ffdbb1 320px,#ffd7ad 331px);"></div>
<div class="b" style="left:0;top:39px;width:331px;height:3px;background:linear-gradient(90deg,#67ffdd 0px,#77ffdd 16px,#85ffdc 32px,#91ffdc 48px,#9dffdb 64px,#a7ffdb 80px,#b2ffda 96px,#bcffda 112px,#c5ffd9 128px,#cfffd8 144px,#d8ffd8 160px,#e0ffd7 176px,#e9ffd7 192px,#f2ffd6 208px,#faffd5 224px,#fffcd2 240px,#fff4ca 256px,#ffecc4 272px,#ffe6bd 288px,#ffdfb7 304px,#ffd9b1 320px,#ffd5ae 331px);"></div>
<div class="b" style="left:0;top:42px;width:331px;height:3px;background:linear-gradient(90deg,#69ffdf 0px,#79ffde 16px,#86ffde 32px,#93ffdd 48px,#9effdd 64px,#a9ffdc 80px,#b4ffdc 96px,#bdffdb 112px,#c7ffdb 128px,#d0ffda 144px,#d9ffda 160px,#e2ffd9 176px,#ebffd8 192px,#f4ffd8 208px,#fcffd7 224px,#fffad2 240px,#fff2cb 256px,#ffebc4 272px,#ffe4be 288px,#ffdeb8 304px,#ffd8b2 320px,#ffd4ae 331px);"></div>
<div class="b" style="left:0;top:45px;width:331px;height:3px;background:linear-gradient(90deg,#6cffe0 0px,#7bffe0 16px,#88ffe0 32px,#95ffdf 48px,#a0ffdf 64px,#abffde 80px,#b5ffde 96px,#bfffdd 112px,#c9ffdd 128px,#d2ffdc 144px,#dbffdc 160px,#e4ffdb 176px,#edffda 192px,#f5ffda 208px,#feffd9 224px,#fff8d3 240px,#fff0cb 256px,#ffe9c5 272px,#ffe2be 288px,#ffdcb8 304px,#ffd6b3 320px,#ffd2af 331px);"></div>
<div class="b" style="left:0;top:48px;width:331px;height:3px;background:linear-gradient(90deg,#6effe2 0px,#7dffe2 16px,#8affe1 32px,#96ffe1 48px,#a2ffe0 64px,#adffe0 80px,#b7ffe0 96px,#c1ffdf 112px,#caffdf 128px,#d4ffde 144px,#ddffde 160px,#e6ffdd 176px,#efffdc 192px,#f7ffdc 208px,#fffedb 224px,#fff6d3 240px,#ffeecc 256px,#ffe7c5 272px,#ffe1bf 288px,#ffdab9 304px,#ffd4b3 320px,#ffd0b0 331px);"></div>
<div class="b" style="left:0;top:51px;width:331px;height:3px;background:linear-gradient(90deg,#70ffe4 0px,#7effe3 16px,#8cffe3 32px,#98ffe3 48px,#a4ffe2 64px,#aeffe2 80px,#b9ffe1 96px,#c3ffe1 112px,#ccffe1 128px,#d6ffe0 144px,#dfffe0 160px,#e8ffdf 176px,#f0ffdf 192px,#f9ffde 208px,#fffcdb 224px,#fff4d3 240px,#ffedcc 256px,#ffe6c6 272px,#ffdfbf 288px,#ffd9ba 304px,#ffd3b4 320px,#ffcfb0 331px);"></div>
<div class="b" style="left:0;top:54px;width:331px;height:3px;background:linear-gradient(90deg,#72ffe6 0px,#80ffe5 16px,#8effe5 32px,#9affe4 48px,#a5ffe4 64px,#b0ffe4 80px,#baffe3 96px,#c4ffe3 112px,#ceffe2 128px,#d7ffe2 144px,#e1ffe2 160px,#eaffe1 176px,#f2ffe1 192px,#fbffe0 208px,#fffadb 224px,#fff2d4 240px,#ffebcd 256px,#ffe4c6 272px,#ffddc0 288px,#ffd7ba 304px,#ffd1b4 320px,#ffcdb1 331px);"></div>
<div class="b" style="left:0;top:57px;width:331px;height:3px;background:linear-gradient(90deg,#74ffe7 0px,#82ffe7 16px,#8fffe7 32px,#9cffe6 48px,#a7ffe6 64px,#b2ffe6 80px,#bcffe5 96px,#c6ffe5 112px,#d0ffe4 128px,#d9ffe4 144px,#e2ffe4 160px,#ebffe3 176px,#f4ffe3 192px,#fdffe2 208px,#fff8dc 224px,#fff0d4 240px,#ffe9cd 256px,#ffe2c7 272px,#ffdcc1 288px,#ffd5bb 304px,#ffd0b5 320px,#ffccb1 331px);"></div>
<div class="b" style="left:0;top:60px;width:331px;height:3px;background:linear-gradient(90deg,#76ffe9 0px,#84ffe9 16px,#91ffe8 32px,#9dffe8 48px,#a9ffe8 64px,#b4ffe7 80px,#beffe7 96px,#c8ffe7 112px,#d2ffe6 128px,#dbffe6 144px,#e4ffe6 160px,#edffe5 176px,#f6ffe5 192px,#ffffe4 208px,#fff7dc 224px,#ffefd5 240px,#ffe7ce 256px,#ffe0c7 272px,#ffdac1 288px,#ffd4bb 304px,#ffceb6 320px,#ffcab2 331px);"></div>
<div class="b" style="left:0;top:63px;width:331px;height:3px;background:linear-gradient(90deg,#78ffeb 0px,#86ffeb 16px,#93ffea 32px,#9fffea 48px,#abffea 64px,#b5ffe9 80px,#c0ffe9 96px,#caffe9 112px,#d3ffe8 128px,#ddffe8 144px,#e6ffe8 160px,#efffe7 176px,#f8ffe7 192px,#fffde5 208px,#fff5dd 224px,#ffedd5 240px,#ffe6ce 256px,#ffdfc8 272px,#ffd8c2 288px,#ffd2bc 304px,#ffcdb6 320px,#ffc9b3 331px);"></div>
<div class="b" style="left:0;top:66px;width:331px;height:3px;background:linear-gradient(90deg,#7affed 0px,#88ffec 16px,#95ffec 32px,#a1ffec 48px,#acffec 64px,#b7ffeb 80px,#c2ffeb 96px,#ccffeb 112px,#d5ffea 128px,#dfffea 144px,#e8ffea 160px,#f1ffe9 176px,#faffe9 192px,#fffbe5 208px,#fff3dd 224px,#ffebd6 240px,#ffe4cf 256px,#ffddc8 272px,#ffd7c2 288px,#ffd1bc 304px,#ffcbb7 320px,#ffc7b3 331px);"></div>
<div class="b" style="left:0;top:69px;width:331px;height:3px;background:linear-gradient(90deg,#7cffee 0px,#8affee 16px,#97ffee 32px,#a3ffee 48px,#aeffed 64px,#b9ffed 80px,#c3ffed 96px,#cdffed 112px,#d7ffec 128px,#e1ffec 144px,#eaffec 160px,#f3ffeb 176px,#fcffeb 192px,#fff9e5 208px,#fff1dd 224px,#ffe9d6 240px,#ffe2cf 256px,#ffdbc9 272px,#ffd5c3 288px,#ffcfbd 304px,#ffc9b7 320px,#ffc6b4 331px);"></div>
<div class="b" style="left:0;top:72px;width:331px;height:3px;background:linear-gradient(90deg,#7efff0 0px,#8cfff0 16px,#99fff0 32px,#a5fff0 48px,#b0ffef 64px,#bbffef 80px,#c5ffef 96px,#cfffef 112px,#d9ffee 128px,#e3ffee 144px,#ecffee 160px,#f5ffee 176px,#feffed 192px,#fff7e6 208px,#ffefde 224px,#ffe7d6 240px,#ffe0d0 256px,#ffdac9 272px,#ffd3c3 288px,#ffcdbd 304px,#ffc8b8 320px,#ffc4b4 331px);"></div>
<div class="b" style="left:0;top:75px;width:331px;height:3px;background:linear-gradient(90deg,#80fff2 0px,#8efff2 16px,#9bfff2 32px,#a6fff2 48px,#b2fff1 64px,#bdfff1 80px,#c7fff1 96px,#d1fff1 112px,#dbfff1 128px,#e4fff0 144px,#eefff0 160px,#f7fff0 176px,#fffeee 192px,#fff5e6 208px,#ffedde 224px,#ffe6d7 240px,#ffdfd0 256px,#ffd8ca 272px,#ffd2c4 288px,#ffccbe 304px,#ffc6b8 320px,#ffc3b5 331px);"></div>
<div class="b" style="left:0;top:78px;width:331px;height:3px;background:linear-gradient(90deg,#82fff4 0px,#90fff4 16px,#9cfff4 32px,#a8fff3 48px,#b4fff3 64px,#befff3 80px,#c9fff3 96px,#d3fff3 112px,#ddfff3 128px,#e6fff2 144px,#f0fff2 160px,#f9fff2 176px,#fffcef 192px,#fff3e6 208px,#ffebdf 224px,#ffe4d7 240px,#ffddd1 256px,#ffd6ca 272px,#ffd0c4 288px,#ffcabe 304px,#ffc5b9 320px,#ffc1b5 331px);"></div>
<div class="b" style="left:0;top:81px;width:331px;height:3px;background:linear-gradient(90deg,#84fff6 0px,#92fff6 16px,#9efff6 32px,#aafff5 48px,#b6fff5 64px,#c0fff5 80px,#cbfff5 96px,#d5fff5 112px,#dffff5 128px,#e8fff5 144px,#f2fff4 160px,#fbfff4 176px,#fffaef 192px,#fff1e7 208px,#ffe9df 224px,#ffe2d8 240px,#ffdbd1 256px,#ffd5cb 272px,#ffcec5 288px,#ffc9bf 304px,#ffc3b9 320px,#ffbfb6 331px);"></div>
<div class="b" style="left:0;top:84px;width:331px;height:3px;background:linear-gradient(90deg,#86fff8 0px,#93fff8 16px,#a0fff8 32px,#acfff7 48px,#b7fff7 64px,#c2fff7 80px,#cdfff7 96px,#d7fff7 112px,#e1fff7 128px,#eafff7 144px,#f4fff7 160px,#fdfff6 176px,#fff8ef 192px,#ffefe7 208px,#ffe7df 224px,#ffe0d8 240px,#ffd9d1 256px,#ffd3cb 272px,#ffcdc5 288px,#ffc7bf 304px,#ffc1ba 320px,#ffbeb6 331px);"></div>
<div class="b" style="left:0;top:87px;width:331px;height:3px;background:linear-gradient(90deg,#88fffa 0px,#95fffa 16px,#a2fff9 32px,#aefff9 48px,#b9fff9 64px,#c4fff9 80px,#cffff9 96px,#d9fff9 112px,#e3fff9 128px,#ecfff9 144px,#f6fff9 160px,#fffff8 176px,#fff6ef 192px,#ffede7 208px,#ffe5e0 224px,#ffded9 240px,#ffd7d2 256px,#ffd1cb 272px,#ffcbc6 288px,#ffc5c0 304px,#ffc0ba 320px,#ffbcb7 331px);"></div>
<div class="b" style="left:0;top:90px;width:331px;height:3px;background:linear-gradient(90deg,#8afffc 0px,#97fffc 16px,#a4fffb 32px,#b0fffb 48px,#bbfffb 64px,#c6fffb 80px,#d1fffb 96px,#dbfffb 112px,#e5fffb 128px,#eefffb 144px,#f8fffb 160px,#fffcf9 176px,#fff4f0 192px,#ffebe8 208px,#ffe4e0 224px,#ffdcd9 240px,#ffd6d2 256px,#ffcfcc 272px,#ffc9c6 288px,#ffc4c0 304px,#ffbebb 320px,#ffbbb7 331px);"></div>
<div class="b" style="left:0;top:93px;width:331px;height:3px;background:linear-gradient(90deg,#8cfffe 0px,#99fffe 16px,#a6fffe 32px,#b2fffd 48px,#bdfffd 64px,#c8fffd 80px,#d3fffd 96px,#ddfffd 112px,#e7fffd 128px,#f1fffd 144px,#fafffd 160px,#fffaf9 176px,#fff1f0 192px,#ffe9e8 208px,#ffe2e0 224px,#ffdbd9 240px,#ffd4d3 256px,#ffcecc 272px,#ffc8c6 288px,#ffc2c1 304px,#ffbdbc 320px,#ffb9b8 331px);"></div>
<div class="b" style="left:0;top:96px;width:331px;height:3px;background:linear-gradient(90deg,#8dffff 0px,#9bfeff 16px,#a8feff 32px,#b3feff 48px,#bffeff 64px,#c9feff 80px,#d4feff 96px,#defeff 112px,#e8feff 128px,#f2feff 144px,#fcfeff 160px,#fff8f9 176px,#ffeff0 192px,#ffe7e8 208px,#ffe0e1 224px,#ffd9da 240px,#ffd2d3 256px,#ffcccd 272px,#ffc6c7 288px,#ffc0c1 304px,#ffbbbc 320px,#ffb8b8 331px);"></div>
<div class="b" style="left:0;top:99px;width:331px;height:3px;background:linear-gradient(90deg,#8efdff 0px,#9cfcff 16px,#a8fcff 32px,#b4fcff 48px,#bffcff 64px,#cafcff 80px,#d4fcff 96px,#defcff 112px,#e8fcff 128px,#f2fcff 144px,#fbfcff 160px,#fff6f9 176px,#ffedf1 192px,#ffe5e8 208px,#ffdee1 224px,#ffd7da 240px,#ffd0d3 256px,#ffcacd 272px,#ffc4c7 288px,#ffbfc2 304px,#ffbabc 320px,#ffb6b9 331px);"></div>
<div class="b" style="left:0;top:102px;width:331px;height:3px;background:linear-gradient(90deg,#8ffbff 0px,#9cfaff 16px,#a9faff 32px,#b4faff 48px,#bffaff 64px,#cafaff 80px,#d4faff 96px,#defaff 112px,#e8faff 128px,#f2faff 144px,#fbfaff 160px,#fff4f9 176px,#ffebf1 192px,#ffe4e9 208px,#ffdce1 224px,#ffd5da 240px,#ffcfd4 256px,#ffc9ce 272px,#ffc3c8 288px,#ffbdc2 304px,#ffb8bd 320px,#ffb4b9 331px);"></div>
<div class="b" style="left:0;top:105px;width:331px;height:3px;background:linear-gradient(90deg,#90f9ff 0px,#9df8ff 16px,#a9f8ff 32px,#b5f8ff 48px,#c0f8ff 64px,#caf8ff 80px,#d4f8ff 96px,#def8ff 112px,#e8f8ff 128px,#f2f7ff 144px,#fbf7ff 160px,#fff2fa 176px,#ffe9f1 192px,#ffe2e9 208px,#ffdae2 224px,#ffd3db 240px,#ffcdd4 256px,#ffc7ce 272px,#ffc1c8 288px,#ffbcc3 304px,#ffb6bd 320px,#ffb3ba 331px);"></div>
<div class="b" style="left:0;top:108px;width:331px;height:3px;background:linear-gradient(90deg,#91f7ff 0px,#9ef6ff 16px,#aaf6ff 32px,#b5f6ff 48px,#c0f6ff 64px,#caf6ff 80px,#d5f6ff 96px,#dff6ff 112px,#e8f5ff 128px,#f2f5ff 144px,#fbf5ff 160px,#fff0fa 176px,#ffe7f1 192px,#ffe0e9 208px,#ffd8e2 224px,#ffd2db 240px,#ffcbd5 256px,#ffc5ce 272px,#ffbfc9 288px,#ffbac3 304px,#ffb5be 320px,#ffb1ba 331px);"></div>
<div class="b" style="left:0;top:111px;width:331px;height:3px;background:linear-gradient(90deg,#92f5ff 0px,#9ff5ff 16px,#aaf4ff 32px,#b6f4ff 48px,#c0f4ff 64px,#cbf4ff 80px,#d5f4ff 96px,#dff3ff 112px,#e8f3ff 128px,#f2f3ff 144px,#fbf3ff 160px,#ffeefa 176px,#ffe5f2 192px,#ffdeea 208px,#ffd7e2 224px,#ffd0db 240px,#ffc9d5 256px,#ffc3cf 272px,#ffbec9 288px,#ffb8c4 304px,#ffb3be 320px,#ffb0bb 331px);"></div>
<div class="b" style="left:0;top:114px;width:331px;height:3px;background:linear-gradient(90deg,#93f3ff 0px,#9ff3ff 16px,#abf2ff 32px,#b6f2ff 48px,#c1f2ff 64px,#cbf2ff 80px,#d5f1ff 96px,#dff1ff 112px,#e8f1ff 128px,#f2f1ff 144px,#fbf0ff 160px,#ffecfa 176px,#ffe3f2 192px,#ffdcea 208px,#ffd5e3 224px,#ffcedc 240px,#ffc8d5 256px,#ffc2cf 272px,#ffbcca 288px,#ffb7c4 304px,#ffb2bf 320px,#ffaebb 331px);"></div>
<div class="b" style="left:0;top:117px;width:331px;height:3px;background:linear-gradient(90deg,#93f1ff 0px,#a0f1ff 16px,#abf0ff 32px,#b6f0ff 48px,#c1f0ff 64px,#cbf0ff 80px,#d5efff 96px,#dfefff 112px,#e8efff 128px,#f2eeff 144px,#fbeeff 160px,#ffeafa 176px,#ffe1f2 192px,#ffdaea 208px,#ffd3e3 224px,#ffccdc 240px,#ffc6d6 256px,#ffc0d0 272px,#ffbaca 288px,#ffb5c5 304px,#ffb0bf 320px,#ffadbc 331px);"></div>
<div class="b" style="left:0;top:120px;width:331px;height:3px;background:linear-gradient(90deg,#94efff 0px,#a0efff 16px,#aceeff 32px,#b7eeff 48px,#c1eeff 64px,#cbeeff 80px,#d5edff 96px,#dfedff 112px,#e8edff 128px,#f1ecff 144px,#fbecff 160px,#ffe7fb 176px,#ffdff2 192px,#ffd8ea 208px,#ffd1e3 224px,#ffcadc 240px,#ffc4d6 256px,#ffbed0 272px,#ffb9ca 288px,#ffb3c5 304px,#ffaec0 320px,#ffabbc 331px);"></div>
<div class="b" style="left:0;top:123px;width:331px;height:3px;background:linear-gradient(90deg,#95edff 0px,#a1edff 16px,#acecff 32px,#b7ecff 48px,#c2ecff 64px,#ccebff 80px,#d5ebff 96px,#dfebff 112px,#e8eaff 128px,#f1eaff 144px,#faeaff 160px,#ffe5fb 176px,#ffddf2 192px,#ffd6eb 208px,#ffcfe4 224px,#ffc9dd 240px,#ffc2d6 256px,#ffbdd0 272px,#ffb7cb 288px,#ffb2c5 304px,#ffadc0 320px,#ffa9bd 331px);"></div>
<div class="b" style="left:0;top:126px;width:331px;height:3px;background:linear-gradient(90deg,#96ebff 0px,#a2ebff 16px,#adeaff 32px,#b8eaff 48px,#c2eaff 64px,#cce9ff 80px,#d6e9ff 96px,#dfe9ff 112px,#e8e8ff 128px,#f1e8ff 144px,#fae7ff 160px,#ffe3fb 176px,#ffdbf3 192px,#ffd4eb 208px,#ffcde4 224px,#ffc7dd 240px,#ffc1d7 256px,#ffbbd1 272px,#ffb5cb 288px,#ffb0c6 304px,#ffabc1 320px,#ffa8bd 331px);"></div>
<div class="b" style="left:0;top:129px;width:331px;height:3px;background:linear-gradient(90deg,#97e9ff 0px,#a2e9ff 16px,#ade8ff 32px,#b8e8ff 48px,#c2e8ff 64px,#cce7ff 80px,#d6e7ff 96px,#dfe7ff 112px,#e8e6ff 128px,#f1e6ff 144px,#fae5ff 160px,#ffe1fb 176px,#ffd9f3 192px,#ffd2eb 208px,#ffcbe4 224px,#ffc5dd 240px,#ffbfd7 256px,#ffb9d1 272px,#ffb4cc 288px,#ffaec6 304px,#ffa9c1 320px,#ffa6be 331px);"></div>
<div class="b" style="left:0;top:132px;width:331px;height:3px;background:linear-gradient(90deg,#97e7ff 0px,#a3e7ff 16px,#aee7ff 32px,#b8e6ff 48px,#c3e6ff 64px,#cce5ff 80px,#d6e5ff 96px,#dfe4ff 112px,#e8e4ff 128px,#f1e4ff 144px,#fae3ff 160px,#ffdffb 176px,#ffd7f3 192px,#ffd0ec 208px,#ffc9e4 224px,#ffc3de 240px,#ffbdd8 256px,#ffb7d2 272px,#ffb2cc 288px,#ffadc7 304px,#ffa8c2 320px,#ffa4be 331px);"></div>
<div class="b" style="left:0;top:135px;width:331px;height:3px;background:linear-gradient(90deg,#98e5ff 0px,#a4e5ff 16px,#aee5ff 32px,#b9e4ff 48px,#c3e4ff 64px,#cde3ff 80px,#d6e3ff 96px,#dfe2ff 112px,#e8e2ff 128px,#f1e1ff 144px,#fae1ff 160px,#ffddfb 176px,#ffd5f3 192px,#ffceec 208px,#ffc8e5 224px,#ffc1de 240px,#ffbbd8 256px,#ffb6d2 272px,#ffb0cc 288px,#ffabc7 304px,#ffa6c2 320px,#ffa3bf 331px);"></div>
<div class="b" style="left:0;top:138px;width:331px;height:3px;background:linear-gradient(90deg,#99e3ff 0px,#a4e3ff 16px,#afe3ff 32px,#b9e2ff 48px,#c3e2ff 64px,#cde1ff 80px,#d6e1ff 96px,#dfe0ff 112px,#e8e0ff 128px,#f1dfff 144px,#fadfff 160px,#ffdbfc 176px,#ffd3f4 192px,#ffccec 208px,#ffc6e5 224px,#ffbfde 240px,#ffbad8 256px,#ffb4d2 272px,#ffaecd 288px,#ffa9c7 304px,#ffa4c2 320px,#ffa1bf 331px);"></div>
<div class="b" style="left:0;top:141px;width:331px;height:3px;background:linear-gradient(90deg,#99e2ff 0px,#a5e1ff 16px,#afe1ff 32px,#bae0ff 48px,#c3e0ff 64px,#cddfff 80px,#d6dfff 96px,#dfdeff 112px,#e8deff 128px,#f1ddff 144px,#fadcff 160px,#ffd9fc 176px,#ffd1f4 192px,#ffcaec 208px,#ffc4e5 224px,#ffbedf 240px,#ffb8d9 256px,#ffb2d3 272px,#ffadcd 288px,#ffa8c8 304px,#ffa3c3 320px,#ff9fbf 331px);"></div>
<div class="b" style="left:0;top:144px;width:331px;height:3px;background:linear-gradient(90deg,#9ae0ff 0px,#a5dfff 16px,#b0dfff 32px,#badeff 48px,#c4deff 64px,#cdddff 80px,#d6ddff 96px,#dfdcff 112px,#e8dbff 128px,#f1dbff 144px,#fadaff 160px,#ffd7fc 176px,#ffcff4 192px,#ffc9ed 208px,#ffc2e6 224px,#ffbcdf 240px,#ffb6d9 256px,#ffb0d3 272px,#ffabce 288px,#ffa6c8 304px,#ffa1c3 320px,#ff9ec0 331px);"></div>
<div class="b" style="left:0;top:147px;width:331px;height:3px;background:linear-gradient(90deg,#9bdeff 0px,#a6ddff 16px,#b0ddff 32px,#badcff 48px,#c4dcff 64px,#cddbff 80px,#d7dbff 96px,#e0daff 112px,#e8d9ff 128px,#f1d9ff 144px,#f9d8ff 160px,#ffd5fc 176px,#ffcef4 192px,#ffc7ed 208px,#ffc0e6 224px,#ffbadf 240px,#ffb4d9 256px,#ffafd3 272px,#ffa9ce 288px,#ffa4c9 304px,#ff9fc4 320px,#ff9cc0 331px);"></div>
<div class="b" style="left:0;top:150px;width:331px;height:3px;background:linear-gradient(90deg,#9bdcff 0px,#a6dbff 16px,#b1dbff 32px,#bbdaff 48px,#c4daff 64px,#ced9ff 80px,#d7d9ff 96px,#e0d8ff 112px,#e8d7ff 128px,#f1d7ff 144px,#f9d6ff 160px,#ffd3fc 176px,#ffccf4 192px,#ffc5ed 208px,#ffbee6 224px,#ffb8e0 240px,#ffb2da 256px,#ffadd4 272px,#ffa8ce 288px,#ffa3c9 304px,#ff9ec4 320px,#ff9ac1 331px);"></div>
<div class="b" style="left:0;top:153px;width:331px;height:3px;background:linear-gradient(90deg,#9cdaff 0px,#a7daff 16px,#b1d9ff 32px,#bbd8ff 48px,#c5d8ff 64px,#ced7ff 80px,#d7d6ff 96px,#e0d6ff 112px,#e8d5ff 128px,#f1d4ff 144px,#f9d4ff 160px,#ffd1fc 176px,#ffcaf5 192px,#ffc3ed 208px,#ffbce6 224px,#ffb6e0 240px,#ffb1da 256px,#ffabd4 272px,#ffa6cf 288px,#ffa1c9 304px,#ff9cc4 320px,#ff99c1 331px);"></div>
<div class="b" style="left:0;top:156px;width:331px;height:3px;background:linear-gradient(90deg,#9dd8ff 0px,#a7d8ff 16px,#b2d7ff 32px,#bbd6ff 48px,#c5d6ff 64px,#ced5ff 80px,#d7d4ff 96px,#e0d4ff 112px,#e8d3ff 128px,#f1d2ff 144px,#f9d1ff 160px,#ffcffd 176px,#ffc8f5 192px,#ffc1ee 208px,#ffbae7 224px,#ffb4e0 240px,#ffafda 256px,#ffa9d4 272px,#ffa4cf 288px,#ff9fca 304px,#ff9ac5 320px,#ff97c2 331px);"></div>
<div class="b" style="left:0;top:159px;width:331px;height:3px;background:linear-gradient(90deg,#9dd6ff 0px,#a8d6ff 16px,#b2d5ff 32px,#bcd5ff 48px,#c5d4ff 64px,#ced3ff 80px,#d7d2ff 96px,#e0d2ff 112px,#e8d1ff 128px,#f1d0ff 144px,#f9cfff 160px,#ffcdfd 176px,#ffc6f5 192px,#ffbfee 208px,#ffb9e7 224px,#ffb3e1 240px,#ffaddb 256px,#ffa7d5 272px,#ffa2cf 288px,#ff9dca 304px,#ff99c5 320px,#ff95c2 331px);"></div>
<div class="b" style="left:0;top:162px;width:331px;height:3px;background:linear-gradient(90deg,#9ed5ff 0px,#a8d4ff 16px,#b2d3ff 32px,#bcd3ff 48px,#c5d2ff 64px,#ced1ff 80px,#d7d0ff 96px,#e0d0ff 112px,#e8cfff 128px,#f1ceff 144px,#f9cdff 160px,#ffcbfd 176px,#ffc4f5 192px,#ffbdee 208px,#ffb7e7 224px,#ffb1e1 240px,#ffabdb 256px,#ffa6d5 272px,#ffa1d0 288px,#ff9ccb 304px,#ff97c6 320px,#ff94c2 331px);"></div>
<div class="b" style="left:0;top:165px;width:331px;height:3px;background:linear-gradient(90deg,#9ed3ff 0px,#a9d2ff 16px,#b3d1ff 32px,#bcd1ff 48px,#c6d0ff 64px,#cfcfff 80px,#d7ceff 96px,#e0ceff 112px,#e8cdff 128px,#f1ccff 144px,#f9cbff 160px,#ffc9fd 176px,#ffc2f5 192px,#ffbbee 208px,#ffb5e7 224px,#ffafe1 240px,#ffa9db 256px,#ffa4d5 272px,#ff9fd0 288px,#ff9acb 304px,#ff95c6 320px,#ff92c3 331px);"></div>
<div class="b" style="left:0;top:168px;width:331px;height:3px;background:linear-gradient(90deg,#9fd1ff 0px,#a9d0ff 16px,#b3cfff 32px,#bdcfff 48px,#c6ceff 64px,#cfcdff 80px,#d8ccff 96px,#e0cbff 112px,#e8cbff 128px,#f1caff 144px,#f9c9ff 160px,#ffc6fd 176px,#ffbff6 192px,#ffb9ee 208px,#ffb3e8 224px,#ffade1 240px,#ffa7db 256px,#ffa2d6 272px,#ff9dd0 288px,#ff98cb 304px,#ff93c6 320px,#ff90c3 331px);"></div>
<div class="b" style="left:0;top:171px;width:331px;height:3px;background:linear-gradient(90deg,#a0cfff 0px,#aaceff 16px,#b4ceff 32px,#bdcdff 48px,#c6ccff 64px,#cfcbff 80px,#d8caff 96px,#e0c9ff 112px,#e8c9ff 128px,#f1c8ff 144px,#f9c7ff 160px,#ffc4fd 176px,#ffbdf6 192px,#ffb7ef 208px,#ffb1e8 224px,#ffabe2 240px,#ffa6dc 256px,#ffa0d6 272px,#ff9bd1 288px,#ff96cc 304px,#ff92c7 320px,#ff8ec4 331px);"></div>
<div class="b" style="left:0;top:174px;width:331px;height:3px;background:linear-gradient(90deg,#a0cdff 0px,#aaccff 16px,#b4ccff 32px,#bdcbff 48px,#c6caff 64px,#cfc9ff 80px,#d8c8ff 96px,#e0c7ff 112px,#e8c6ff 128px,#f1c5ff 144px,#f9c4ff 160px,#ffc2fe 176px,#ffbbf6 192px,#ffb5ef 208px,#ffafe8 224px,#ffa9e2 240px,#ffa4dc 256px,#ff9ed6 272px,#ff99d1 288px,#ff94cc 304px,#ff90c7 320px,#ff8dc4 331px);"></div>
<div class="b" style="left:0;top:177px;width:331px;height:3px;background:linear-gradient(90deg,#a1cbff 0px,#abcbff 16px,#b4caff 32px,#bec9ff 48px,#c7c8ff 64px,#cfc7ff 80px,#d8c6ff 96px,#e0c5ff 112px,#e8c4ff 128px,#f0c3ff 144px,#f8c2ff 160px,#ffc0fe 176px,#ffb9f6 192px,#ffb3ef 208px,#ffade8 224px,#ffa7e2 240px,#ffa2dc 256px,#ff9dd7 272px,#ff97d1 288px,#ff93cc 304px,#ff8ec8 320px,#ff8bc4 331px);"></div>
<div class="b" style="left:0;top:180px;width:331px;height:3px;background:linear-gradient(90deg,#a1c9ff 0px,#abc9ff 16px,#b5c8ff 32px,#bec7ff 48px,#c7c6ff 64px,#d0c5ff 80px,#d8c4ff 96px,#e0c3ff 112px,#e8c2ff 128px,#f0c1ff 144px,#f8c0ff 160px,#ffbefe 176px,#ffb7f6 192px,#ffb1ef 208px,#ffabe9 224px,#ffa5e3 240px,#ffa0dd 256px,#ff9bd7 272px,#ff96d2 288px,#ff91cd 304px,#ff8cc8 320px,#ff89c5 331px);"></div>
<div class="b" style="left:0;top:183px;width:331px;height:3px;background:linear-gradient(90deg,#a2c8ff 0px,#acc7ff 16px,#b5c6ff 32px,#bec5ff 48px,#c7c4ff 64px,#d0c3ff 80px,#d8c2ff 96px,#e0c1ff 112px,#e8c0ff 128px,#f0bfff 144px,#f8beff 160px,#ffbcfe 176px,#ffb5f7 192px,#ffaff0 208px,#ffa9e9 224px,#ffa3e3 240px,#ff9edd 256px,#ff99d7 272px,#ff94d2 288px,#ff8fcd 304px,#ff8ac8 320px,#ff87c5 331px);"></div>
<div class="b" style="left:0;top:186px;width:331px;height:3px;background:linear-gradient(90deg,#a2c6ff 0px,#acc5ff 16px,#b6c4ff 32px,#bfc3ff 48px,#c7c2ff 64px,#d0c1ff 80px,#d8c0ff 96px,#e0bfff 112px,#e8beff 128px,#f0bdff 144px,#f8bcff 160px,#ffbafe 176px,#ffb3f7 192px,#ffadf0 208px,#ffa7e9 224px,#ffa2e3 240px,#ff9cdd 256px,#ff97d8 272px,#ff92d2 288px,#ff8dcd 304px,#ff88c9 320px,#ff85c5 331px);"></div>
<div class="b" style="left:0;top:189px;width:331px;height:3px;background:linear-gradient(90deg,#a3c4ff 0px,#adc3ff 16px,#b6c2ff 32px,#bfc1ff 48px,#c8c0ff 64px,#d0bfff 80px,#d8beff 96px,#e0bdff 112px,#e8bcff 128px,#f0bbff 144px,#f8baff 160px,#ffb8fe 176px,#ffb1f7 192px,#ffabf0 208px,#ffa5e9 224px,#ffa0e3 240px,#ff9ade 256px,#ff95d8 272px,#ff90d3 288px,#ff8bce 304px,#ff87c9 320px,#ff84c6 331px);"></div>
<div class="b" style="left:0;top:192px;width:331px;height:3px;background:linear-gradient(90deg,#a3c2ff 0px,#adc1ff 16px,#b6c0ff 32px,#bfbfff 48px,#c8beff 64px,#d0bdff 80px,#d8bcff 96px,#e1bbff 112px,#e8baff 128px,#f0b9ff 144px,#f8b7ff 160px,#ffb6fe 176px,#ffaff7 192px,#ffa9f0 208px,#ffa3ea 224px,#ff9ee4 240px,#ff98de 256px,#ff93d8 272px,#ff8ed3 288px,#ff89ce 304px,#ff85c9 320px,#ff82c6 331px);"></div>
</div>
<div class="b" style="left:812px;top:708px;width:15px;height:15px;border:2px solid #000;"></div>
<div class="b" style="left:830.4px;top:701.8px;width:9.5px;height:9.5px;border-radius:50%;border:2px solid #000;"></div>
<div class="b" style="left:1002px;top:607px;width:14px;height:190px;background:#1e1e1e;"></div>
<div class="b" style="left:1002px;top:645px;width:14px;height:35px;background:linear-gradient(#2c2c2c,#181818);"></div>
<div class="b" style="left:1002px;top:680px;width:14px;height:35px;background:linear-gradient(#2c2c2c,#181818);"></div>
<div class="b" style="left:1002px;top:715px;width:14px;height:35px;background:linear-gradient(#2c2c2c,#181818);"></div>
<div class="b" style="left:1002px;top:750px;width:14px;height:35px;background:linear-gradient(#2c2c2c,#181818);"></div>
<div class="b" style="left:1002px;top:785px;width:14px;height:12px;background:linear-gradient(#2c2c2c,#181818);"></div>
<div class="b" style="left:1002px;top:607px;width:14px;height:38px;background:#000;"></div>
<div class="b" style="left:1016px;top:607px;width:599px;height:38px;background:linear-gradient(#2c2c2c 0%,#282828 48%,#171717 49%,#121212 100%);"></div>
<div class="b" style="left:1016px;top:645px;width:599px;height:35px;background:#3a3a3a;"></div>
<div class="b" style="left:1016px;top:680px;width:599px;height:35px;background:#7e7e7e;"></div>
<div class="b" style="left:1016px;top:715px;width:599px;height:35px;background:#3a3a3a;"></div>
<div class="b" style="left:1016px;top:750px;width:599px;height:35px;background:#7a7a7a;"></div>
<div class="b" style="left:1016px;top:785px;width:599px;height:13px;background:#3a3a3a;"></div>
<div class="b" style="left:1016px;top:607px;width:599px;height:190px;overflow:hidden;">
<div class="t" style="left:74.4px;top:9.2px;font-size:18.3px;line-height:20.44px;color:#f0f0f0;transform:scaleX(0.889);transform-origin:left;">White</div>
<div class="t" style="left:150.9px;top:9.2px;font-size:18.3px;line-height:20.44px;color:#f0f0f0;transform:scaleX(0.889);transform-origin:left;">Red</div>
<div class="t" style="left:218.0px;top:9.2px;font-size:18.3px;line-height:20.44px;color:#f0f0f0;transform:scaleX(0.889);transform-origin:left;">Green</div>
<div class="t" style="left:295.2px;top:9.2px;font-size:18.3px;line-height:20.44px;color:#f0f0f0;transform:scaleX(0.889);transform-origin:left;">Blue</div>
<div class="t" style="left:362.5px;top:9.2px;font-size:18.3px;line-height:20.44px;color:#f0f0f0;transform:scaleX(0.889);transform-origin:left;">Cyan</div>
<div class="t" style="left:439.0px;top:9.2px;font-size:18.3px;line-height:20.44px;color:#f0f0f0;transform:scaleX(0.889);transform-origin:left;">Magenta</div>
<div class="t" style="left:508.3px;top:9.2px;font-size:18.3px;line-height:20.44px;color:#f0f0f0;transform:scaleX(0.889);transform-origin:left;">Yellow</div>
<div class="t" style="left:584.3px;top:9.2px;font-size:18.3px;line-height:20.44px;color:#f0f0f0;transform:scaleX(0.889);transform-origin:left;">100W</div>
<div class="t" style="left:3.9px;top:43.0px;font-size:22px;line-height:24.57px;color:#f0f0f0;transform:scaleX(0.68);transform-origin:left;">x: CIE31</div>
<div class="t" style="left:73.9px;top:43.0px;font-size:22px;line-height:24.57px;color:#f0f0f0;transform:scaleX(0.733);transform-origin:left;">0,3150</div>
<div class="t" style="left:150.4px;top:43.0px;font-size:22px;line-height:24.57px;color:#f0f0f0;transform:scaleX(0.733);transform-origin:left;">0,6272</div>
<div class="t" style="left:217.5px;top:43.0px;font-size:22px;line-height:24.57px;color:#f0f0f0;transform:scaleX(0.733);transform-origin:left;">0,3042</div>
<div class="t" style="left:294.7px;top:43.0px;font-size:22px;line-height:24.57px;color:#f0f0f0;transform:scaleX(0.733);transform-origin:left;">0,1517</div>
<div class="t" style="left:362.0px;top:43.0px;font-size:22px;line-height:24.57px;color:#f0f0f0;transform:scaleX(0.733);transform-origin:left;">0,2257</div>
<div class="t" style="left:438.5px;top:43.0px;font-size:22px;line-height:24.57px;color:#f0f0f0;transform:scaleX(0.733);transform-origin:left;">0,3222</div>
<div class="t" style="left:507.8px;top:43.0px;font-size:22px;line-height:24.57px;color:#f0f0f0;transform:scaleX(0.733);transform-origin:left;">0,4082</div>
<div class="t" style="left:583.8px;top:43.0px;font-size:22px;line-height:24.57px;color:#f0f0f0;transform:scaleX(0.733);transform-origin:left;">0,3151</div>
<div class="t" style="left:3.9px;top:78.0px;font-size:22px;line-height:24.57px;color:#f0f0f0;transform:scaleX(0.68);transform-origin:left;">y: CIE31</div>
<div class="t" style="left:73.9px;top:78.0px;font-size:22px;line-height:24.57px;color:#f0f0f0;transform:scaleX(0.733);transform-origin:left;">0,3314</div>
<div class="t" style="left:150.4px;top:78.0px;font-size:22px;line-height:24.57px;color:#f0f0f0;transform:scaleX(0.733);transform-origin:left;">0,3408</div>
<div class="t" style="left:217.5px;top:78.0px;font-size:22px;line-height:24.57px;color:#f0f0f0;transform:scaleX(0.733);transform-origin:left;">0,5889</div>
<div class="t" style="left:294.7px;top:78.0px;font-size:22px;line-height:24.57px;color:#f0f0f0;transform:scaleX(0.733);transform-origin:left;">0,0684</div>
<div class="t" style="left:362.0px;top:78.0px;font-size:22px;line-height:24.57px;color:#f0f0f0;transform:scaleX(0.733);transform-origin:left;">0,3181</div>
<div class="t" style="left:438.5px;top:78.0px;font-size:22px;line-height:24.57px;color:#f0f0f0;transform:scaleX(0.733);transform-origin:left;">0,1656</div>
<div class="t" style="left:507.8px;top:78.0px;font-size:22px;line-height:24.57px;color:#f0f0f0;transform:scaleX(0.733);transform-origin:left;">0,5092</div>
<div class="t" style="left:583.8px;top:78.0px;font-size:22px;line-height:24.57px;color:#f0f0f0;transform:scaleX(0.733);transform-origin:left;">0,3316</div>
<div class="t" style="left:3.9px;top:113.0px;font-size:22px;line-height:24.57px;color:#f0f0f0;transform:scaleX(0.68);transform-origin:left;">Y</div>
<div class="t" style="left:73.9px;top:113.0px;font-size:22px;line-height:24.57px;color:#f0f0f0;transform:scaleX(0.733);transform-origin:left;">212,9002</div>
<div class="t" style="left:150.4px;top:113.0px;font-size:22px;line-height:24.57px;color:#f0f0f0;transform:scaleX(0.733);transform-origin:left;">49,3290</div>
<div class="t" style="left:217.5px;top:113.0px;font-size:22px;line-height:24.57px;color:#f0f0f0;transform:scaleX(0.733);transform-origin:left;">147,1462</div>
<div class="t" style="left:294.7px;top:113.0px;font-size:22px;line-height:24.57px;color:#f0f0f0;transform:scaleX(0.733);transform-origin:left;">16,2632</div>
<div class="t" style="left:362.0px;top:113.0px;font-size:22px;line-height:24.57px;color:#f0f0f0;transform:scaleX(0.733);transform-origin:left;">160,8829</div>
<div class="t" style="left:438.5px;top:113.0px;font-size:22px;line-height:24.57px;color:#f0f0f0;transform:scaleX(0.733);transform-origin:left;">68,7246</div>
<div class="t" style="left:507.8px;top:113.0px;font-size:22px;line-height:24.57px;color:#f0f0f0;transform:scaleX(0.733);transform-origin:left;">193,5345</div>
<div class="t" style="left:583.8px;top:113.0px;font-size:22px;line-height:24.57px;color:#f0f0f0;transform:scaleX(0.733);transform-origin:left;">412,8900</div>
<div class="t" style="left:3.9px;top:148.0px;font-size:22px;line-height:24.57px;color:#f0f0f0;transform:scaleX(0.68);transform-origin:left;">Target Y</div>
<div class="t" style="left:73.9px;top:148.0px;font-size:22px;line-height:24.57px;color:#f0f0f0;transform:scaleX(0.733);transform-origin:left;">212,9002</div>
<div class="t" style="left:150.4px;top:148.0px;font-size:22px;line-height:24.57px;color:#f0f0f0;transform:scaleX(0.733);transform-origin:left;">63,3082</div>
<div class="t" style="left:217.5px;top:148.0px;font-size:22px;line-height:24.57px;color:#f0f0f0;transform:scaleX(0.733);transform-origin:left;">133,5639</div>
<div class="t" style="left:294.7px;top:148.0px;font-size:22px;line-height:24.57px;color:#f0f0f0;transform:scaleX(0.733);transform-origin:left;">16,0281</div>
<div class="t" style="left:362.0px;top:148.0px;font-size:22px;line-height:24.57px;color:#f0f0f0;transform:scaleX(0.733);transform-origin:left;">149,5921</div>
<div class="t" style="left:438.5px;top:148.0px;font-size:22px;line-height:24.57px;color:#f0f0f0;transform:scaleX(0.733);transform-origin:left;">79,3363</div>
<div class="t" style="left:507.8px;top:148.0px;font-size:22px;line-height:24.57px;color:#f0f0f0;transform:scaleX(0.733);transform-origin:left;">196,8721</div>
<div class="t" style="left:583.8px;top:148.0px;font-size:22px;line-height:24.57px;color:#f0f0f0;transform:scaleX(0.733);transform-origin:left;">412,8900</div>
<div class="t" style="left:3.9px;top:183.0px;font-size:22px;line-height:24.57px;color:#f0f0f0;transform:scaleX(0.68);transform-origin:left;">&Delta;E 2000</div>
<div class="t" style="left:73.9px;top:183.0px;font-size:22px;line-height:24.57px;color:#f0f0f0;transform:scaleX(0.733);transform-origin:left;">1,0565</div>
<div class="t" style="left:150.4px;top:183.0px;font-size:22px;line-height:24.57px;color:#f0f0f0;transform:scaleX(0.733);transform-origin:left;">5,4676</div>
<div class="t" style="left:217.5px;top:183.0px;font-size:22px;line-height:24.57px;color:#f0f0f0;transform:scaleX(0.733);transform-origin:left;">0,5805</div>
<div class="t" style="left:294.7px;top:183.0px;font-size:22px;line-height:24.57px;color:#f0f0f0;transform:scaleX(0.733);transform-origin:left;">2,2335</div>
<div class="t" style="left:362.0px;top:183.0px;font-size:22px;line-height:24.57px;color:#f0f0f0;transform:scaleX(0.733);transform-origin:left;">0,4734</div>
<div class="t" style="left:438.5px;top:183.0px;font-size:22px;line-height:24.57px;color:#f0f0f0;transform:scaleX(0.733);transform-origin:left;">4,6530</div>
<div class="t" style="left:507.8px;top:183.0px;font-size:22px;line-height:24.57px;color:#f0f0f0;transform:scaleX(0.733);transform-origin:left;">2,0021</div>
<div class="t" style="left:583.8px;top:183.0px;font-size:22px;line-height:24.57px;color:#f0f0f0;transform:scaleX(0.733);transform-origin:left;">1,0565</div>
</div>
<div class="b" style="left:1016px;top:798px;width:599px;height:21px;background:#4e4e4e;border-radius:3px;"></div>
<div class="b" style="left:1035px;top:800px;width:512px;height:17px;background:#3c3c3c;border-radius:8px;"></div>
<div class="b" style="left:1017px;top:799px;width:14px;height:19px;background:#6e6e6e;border-radius:3px;"></div>
<svg class="b" style="left:1019px;top:802px;width:10px;height:13px;" viewBox="0 0 10 13"><path d="M8 1 L2 6.5 L8 12 Z" fill="#3a3a3a"/></svg>
<div class="b" style="left:1600px;top:799px;width:14px;height:19px;background:#6e6e6e;border-radius:3px;"></div>
<svg class="b" style="left:1602px;top:802px;width:10px;height:13px;" viewBox="0 0 10 13"><path d="M2 1 L8 6.5 L2 12 Z" fill="#3a3a3a"/></svg>
<div class="b" style="left:1615px;top:645px;width:16px;height:153px;background:#4e4e4e;border-radius:3px;"></div>
<div class="b" style="left:1617px;top:668px;width:12px;height:84px;background:#3c3c3c;border-radius:6px;"></div>
<div class="b" style="left:1616px;top:646px;width:14px;height:17px;background:#6e6e6e;border-radius:3px;"></div>
<svg class="b" style="left:1617px;top:649px;width:12px;height:9px;" viewBox="0 0 12 9"><path d="M1 8 L6 2 L11 8 Z" fill="#3a3a3a"/></svg>
<div class="b" style="left:1616px;top:779px;width:14px;height:18px;background:#6e6e6e;border-radius:3px;"></div>
<svg class="b" style="left:1617px;top:783px;width:12px;height:9px;" viewBox="0 0 12 9"><path d="M1 1 L6 7 L11 1 Z" fill="#3a3a3a"/></svg>
<div class="b" style="left:12.5px;top:828px;width:155.5px;height:80px;background:linear-gradient(#a2a2a2 0%,#8c8c8c 50%,#6a6a6a 100%);border:1px solid #b8b8b8;border-bottom:none;border-radius:5px 5px 0 0;"></div>
<div class="b" style="left:19.0px;top:835px;width:142px;height:45px;background:#c0c0c0;border-radius:5px;box-shadow:inset 1px 1px 2px rgba(0,0,0,0.45);"></div>
<div class="t" style="left:90.0px;top:887.1px;font-size:13.3px;line-height:14.86px;color:#333333;font-weight:bold;transform:translateX(-50%);transform-origin:center;">White</div>
<div class="b" style="left:170.5px;top:828px;width:155.5px;height:80px;background:linear-gradient(#a2a2a2 0%,#8c8c8c 50%,#6a6a6a 100%);border:1px solid #b8b8b8;border-bottom:none;border-radius:5px 5px 0 0;"></div>
<div class="b" style="left:177.0px;top:835px;width:142px;height:45px;background:#c00000;border-radius:5px;box-shadow:inset 1px 1px 2px rgba(0,0,0,0.45);"></div>
<div class="t" style="left:248.0px;top:887.1px;font-size:13.3px;line-height:14.86px;color:#333333;font-weight:bold;transform:translateX(-50%);transform-origin:center;">Red</div>
<div class="b" style="left:328.5px;top:828px;width:155.5px;height:80px;background:linear-gradient(#a2a2a2 0%,#8c8c8c 50%,#6a6a6a 100%);border:1px solid #b8b8b8;border-bottom:none;border-radius:5px 5px 0 0;"></div>
<div class="b" style="left:335.0px;top:835px;width:142px;height:45px;background:#00c000;border-radius:5px;box-shadow:inset 1px 1px 2px rgba(0,0,0,0.45);"></div>
<div class="t" style="left:406.0px;top:887.1px;font-size:13.3px;line-height:14.86px;color:#333333;font-weight:bold;transform:translateX(-50%);transform-origin:center;">Green</div>
<div class="b" style="left:486.5px;top:828px;width:155.5px;height:80px;background:linear-gradient(#a2a2a2 0%,#8c8c8c 50%,#6a6a6a 100%);border:1px solid #b8b8b8;border-bottom:none;border-radius:5px 5px 0 0;"></div>
<div class="b" style="left:493.0px;top:835px;width:142px;height:45px;background:#0000c8;border-radius:5px;box-shadow:inset 1px 1px 2px rgba(0,0,0,0.45);"></div>
<div class="t" style="left:564.0px;top:887.1px;font-size:13.3px;line-height:14.86px;color:#333333;font-weight:bold;transform:translateX(-50%);transform-origin:center;">Blue</div>
<div class="b" style="left:644.5px;top:828px;width:155.5px;height:80px;background:linear-gradient(#a2a2a2 0%,#8c8c8c 50%,#6a6a6a 100%);border:1px solid #b8b8b8;border-bottom:none;border-radius:5px 5px 0 0;"></div>
<div class="b" style="left:651.0px;top:835px;width:142px;height:45px;background:#00c4c4;border-radius:5px;box-shadow:inset 1px 1px 2px rgba(0,0,0,0.45);"></div>
<div class="t" style="left:722.0px;top:887.1px;font-size:13.3px;line-height:14.86px;color:#333333;font-weight:bold;transform:translateX(-50%);transform-origin:center;">Cyan</div>
<div class="b" style="left:802.5px;top:828px;width:155.5px;height:80px;background:linear-gradient(#a2a2a2 0%,#8c8c8c 50%,#6a6a6a 100%);border:1px solid #b8b8b8;border-bottom:none;border-radius:5px 5px 0 0;"></div>
<div class="b" style="left:809.0px;top:835px;width:142px;height:45px;background:#c000c0;border-radius:5px;box-shadow:inset 1px 1px 2px rgba(0,0,0,0.45);"></div>
<div class="t" style="left:880.0px;top:887.1px;font-size:13.3px;line-height:14.86px;color:#333333;font-weight:bold;transform:translateX(-50%);transform-origin:center;">Magenta</div>
<div class="b" style="left:960.5px;top:828px;width:155.5px;height:80px;background:linear-gradient(#a2a2a2 0%,#8c8c8c 50%,#6a6a6a 100%);border:1px solid #b8b8b8;border-bottom:none;border-radius:5px 5px 0 0;"></div>
<div class="b" style="left:967.0px;top:835px;width:142px;height:45px;background:#c4c000;border-radius:5px;box-shadow:inset 1px 1px 2px rgba(0,0,0,0.45);"></div>
<div class="t" style="left:1038.0px;top:887.1px;font-size:13.3px;line-height:14.86px;color:#333333;font-weight:bold;transform:translateX(-50%);transform-origin:center;">Yellow</div>
<div class="b" style="left:1117px;top:828px;width:156px;height:80px;background:linear-gradient(#1c1c1c,#2a2a2a 50%,#303030);border:1px solid #151515;border-bottom:none;border-radius:5px 5px 0 0;"></div>
<div class="b" style="left:1124px;top:835px;width:143px;height:45px;background:#ffffff;border-radius:5px;"></div>
<div class="t" style="left:1195.5px;top:887.1px;font-size:13.3px;line-height:14.86px;color:#ffffff;font-weight:bold;transform:translateX(-50%);transform-origin:center;">100W</div>
<div class="b" style="left:1277px;top:828px;width:60px;height:23px;background:linear-gradient(#a8a8a8,#7a7a7a);border-radius:6px 6px 0 0;border:1px solid #b8b8b8;"></div>
<div class="b" style="left:1294px;top:831px;width:25px;height:20px;background:linear-gradient(#6a6a6a,#9a9a9a);border-radius:50%;"></div>
<svg class="b" style="left:1300px;top:835px;width:13px;height:9px;" viewBox="0 0 13 9"><path d="M1 8 L6.5 1 L12 8 Z" fill="#2a2a2a"/></svg>
<div class="b" style="left:1277px;top:851px;width:60px;height:60px;background:linear-gradient(#9a9a9a,#6a6a6a);border:1px solid #a0a0a0;"></div>
<div class="b" style="left:1288px;top:859px;width:38px;height:38px;background:linear-gradient(#b8b8b8,#888888);border:3px solid #1e1e1e;border-radius:6px;"></div>
<div class="b" style="left:1298px;top:870px;width:18px;height:17px;background:#000;"></div>
<div class="b" style="left:1338px;top:828px;width:58px;height:38px;background:linear-gradient(#b4b4b4,#6c6c6c);border:1px solid #9a9a9a;border-left:1px solid #333;"></div>
<div class="b" style="left:1354px;top:833px;width:26px;height:26px;background:linear-gradient(#888,#a8a8a8);border-radius:50%;"></div>
<svg class="b" style="left:1357px;top:836px;width:20px;height:20px;" viewBox="-10 -10 20 20"><rect x="-5" y="-5" width="10" height="10" fill="#2a2a2a"/></svg>
<div class="b" style="left:1396px;top:828px;width:56px;height:38px;background:linear-gradient(#b4b4b4,#6c6c6c);border:1px solid #9a9a9a;border-left:1px solid #333;"></div>
<div class="b" style="left:1411px;top:833px;width:26px;height:26px;background:linear-gradient(#888,#a8a8a8);border-radius:50%;"></div>
<svg class="b" style="left:1414px;top:836px;width:20px;height:20px;" viewBox="-10 -10 20 20"><path d="M-4 -7 L7 0 L-4 7 Z" fill="#2a2a2a"/></svg>
<div class="b" style="left:1452px;top:828px;width:57px;height:38px;background:linear-gradient(#b4b4b4,#6c6c6c);border:1px solid #9a9a9a;border-left:1px solid #333;"></div>
<div class="b" style="left:1468px;top:833px;width:26px;height:26px;background:linear-gradient(#888,#a8a8a8);border-radius:50%;"></div>
<svg class="b" style="left:1471px;top:836px;width:20px;height:20px;" viewBox="-10 -10 20 20"><path d="M-6 -6 H-8 V6 H-6 M6 -6 H8 V6 H6" stroke="#2a2a2a" stroke-width="2" fill="none"/><circle cx="-2" cy="0" r="1" fill="#2a2a2a"/><circle cx="2" cy="0" r="1" fill="#2a2a2a"/></svg>
<div class="b" style="left:1509px;top:828px;width:56px;height:38px;background:linear-gradient(#b4b4b4,#6c6c6c);border:1px solid #9a9a9a;border-left:1px solid #333;"></div>
<div class="b" style="left:1524px;top:833px;width:26px;height:26px;background:linear-gradient(#888,#a8a8a8);border-radius:50%;"></div>
<svg class="b" style="left:1527px;top:836px;width:20px;height:20px;" viewBox="-10 -10 20 20"><path d="M0 0 C-3 -4 -8 -4 -8 0 C-8 4 -3 4 0 0 C3 -4 8 -4 8 0 C8 4 3 4 0 0 Z" stroke="#2a2a2a" stroke-width="2.2" fill="none"/></svg>
<div class="b" style="left:1565px;top:828px;width:56px;height:38px;background:linear-gradient(#b4b4b4,#6c6c6c);border:1px solid #9a9a9a;border-left:1px solid #333;"></div>
<div class="b" style="left:1580px;top:833px;width:26px;height:26px;background:linear-gradient(#888,#a8a8a8);border-radius:50%;"></div>
<svg class="b" style="left:1583px;top:836px;width:20px;height:20px;" viewBox="-10 -10 20 20"><path d="M-6 -1 A6 6 0 0 1 5 -3 M6 1 A6 6 0 0 1 -5 3" stroke="#2a2a2a" stroke-width="2.4" fill="none"/><path d="M3 -6 L7 -2 L2 -1 Z M-3 6 L-7 2 L-2 1 Z" fill="#2a2a2a"/></svg>
<div class="b" style="left:1338px;top:867px;width:171px;height:40px;background:linear-gradient(#b8b8b8,#727272);border:1px solid #a8a8a8;border-radius:4px 0 0 0;"></div>
<div class="b" style="left:1508px;top:867px;width:2px;height:40px;background:#2a2a2a;"></div>
<div class="b" style="left:1510px;top:867px;width:170px;height:40px;background:linear-gradient(#b8b8b8,#727272);border-top:1px solid #a8a8a8;"></div>
<div class="b" style="left:1365px;top:874px;width:24px;height:24px;background:linear-gradient(#8a8a8a,#aaaaaa);border-radius:50%;"></div>
<svg class="b" style="left:1367px;top:876px;width:20px;height:20px;" viewBox="-10 -10 20 20"><path d="M7 -6 L1 0 L7 6 M1 -6 L-5 0 L1 6" stroke="#333" stroke-width="1.8" fill="none"/></svg>
<div class="b" style="left:1631px;top:874px;width:24px;height:24px;background:linear-gradient(#8a8a8a,#aaaaaa);border-radius:50%;"></div>
<svg class="b" style="left:1633px;top:876px;width:20px;height:20px;" viewBox="-10 -10 20 20"><path d="M-7 -6 L-1 0 L-7 6 M-1 -6 L5 0 L-1 6" stroke="#333" stroke-width="1.8" fill="none"/></svg>
<div class="t" style="left:1408.2px;top:871.5px;font-size:26.7px;line-height:29.82px;color:#383838;transform:scaleX(1.1);transform-origin:left;">Back</div>
<div class="t" style="left:1541.8px;top:870.4px;font-size:28px;line-height:31.28px;color:#383838;transform:scaleX(1.164);transform-origin:left;">Next</div>
<svg class="b" style="left:1627.2px;top:824.5px;width:42px;height:42px;overflow:visible;" viewBox="-21 -21 42 42"><g fill="#e00c0c" stroke="#e00c0c" stroke-width="1.8" stroke-linejoin="round" style="filter:drop-shadow(1px 1px 1px rgba(0,0,0,0.6))"><path d="M-2.2 0 L-3.2 -15.8 L3.2 -15.8 L2.2 0 Z" transform="rotate(0)"/><path d="M-2.2 0 L-3.2 -15.8 L3.2 -15.8 L2.2 0 Z" transform="rotate(60)"/><path d="M-2.2 0 L-3.2 -15.8 L3.2 -15.8 L2.2 0 Z" transform="rotate(120)"/><path d="M-2.2 0 L-3.2 -15.8 L3.2 -15.8 L2.2 0 Z" transform="rotate(180)"/><path d="M-2.2 0 L-3.2 -15.8 L3.2 -15.8 L2.2 0 Z" transform="rotate(240)"/><path d="M-2.2 0 L-3.2 -15.8 L3.2 -15.8 L2.2 0 Z" transform="rotate(300)"/><circle r="4.5"/></g></svg>
</body></html>
